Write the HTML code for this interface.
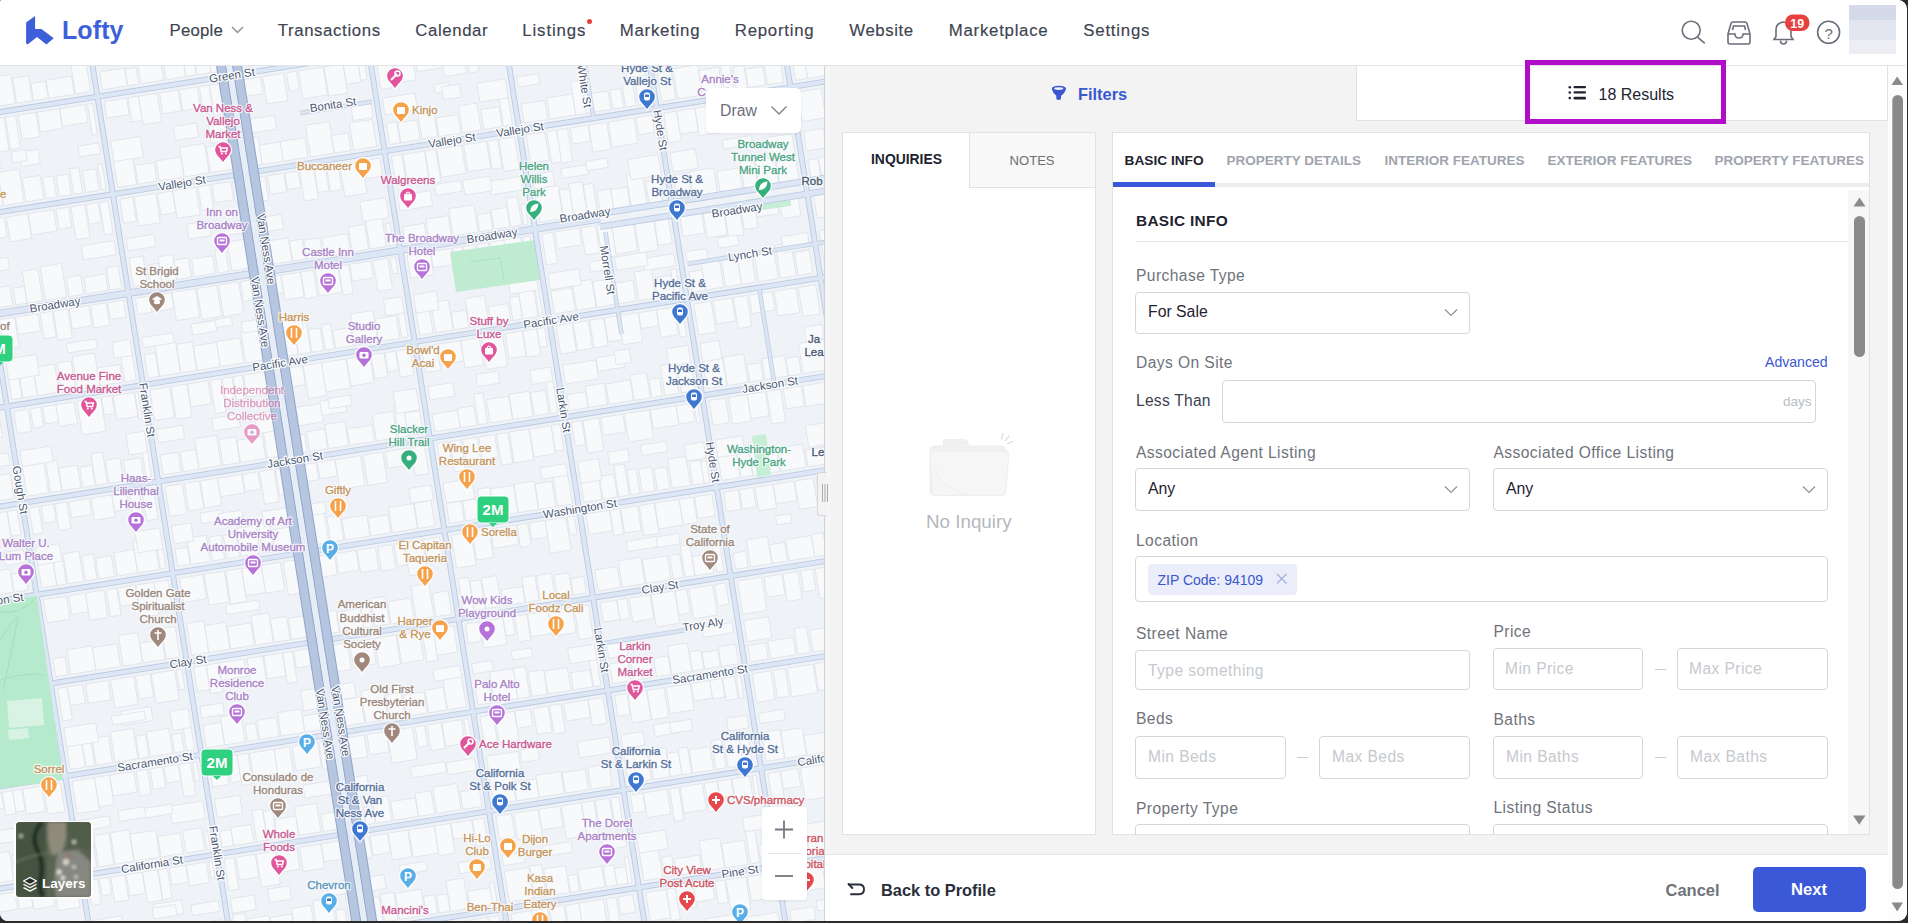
<!DOCTYPE html>
<html><head><meta charset="utf-8"><title>Lofty</title><style>
*{margin:0;padding:0;box-sizing:border-box}
html,body{width:1908px;height:923px;overflow:hidden;background:#fff;font-family:"Liberation Sans",sans-serif}
#frame{position:absolute;left:0;top:0;width:1908px;height:923px;background:#2b2b2b;overflow:hidden}
#win{position:absolute;left:0;top:0;width:1907px;height:921px;background:#fff;overflow:hidden;border-radius:2px 9px 9px 8px}
.abs{position:absolute}
#nav{position:absolute;left:0;top:0;width:1906px;height:66px;background:#fff;border-bottom:1px solid #e3e4e8;z-index:5}
.navi{position:absolute;top:19px;font-size:17.5px;color:#3d4350;white-space:nowrap;line-height:24px;-webkit-text-stroke:0.25px #3d4350}
#map{position:absolute;left:0;top:66px;width:825px;height:854px;overflow:hidden;background:#eef1f6}
#panel{position:absolute;left:825px;top:66px;width:1081px;height:854px;background:#f3f3f3}
.box{position:absolute;background:#fff;border:1px solid #e2e2e2}
.t{position:absolute;white-space:nowrap;line-height:1}
.lbl{position:absolute;white-space:nowrap;font-size:16px;color:#6f737b;line-height:1}
.inp{position:absolute;background:#fff;border:1px solid #d4d6db;border-radius:4px}
.ph{position:absolute;white-space:nowrap;font-size:15.6px;color:#c3c6cc;line-height:1}
.chev{position:absolute;width:9px;height:9px;border-right:1.3px solid #8e929a;border-bottom:1.3px solid #8e929a;transform:rotate(45deg)}
.dash{position:absolute;width:11px;height:1px;background:#c9ccd1}

</style></head><body>
<div id="frame"><div id="win">
<svg class="abs" style="left:0;top:0" width="825" height="923" font-family="Liberation Sans" font-size="11.5"><defs><clipPath id="mc"><rect x="0" y="66" width="825" height="857"/></clipPath></defs><g clip-path="url(#mc)"><rect x="0" y="66" width="825" height="857" fill="#eff2f6"/><g fill="#f8f9fb" stroke="#dde2ea" stroke-width="0.8"><polygon points="-182.7,47.5 -168.4,45.2 -165.5,63.7 -179.8,66.0"/><polygon points="-166.5,44.9 -156.4,43.3 -152.4,68.7 -162.5,70.2"/><polygon points="-155.3,43.1 -145.4,41.6 -141.5,66.4 -151.3,68.0"/><polygon points="-145.3,41.6 -129.1,39.0 -126.4,56.1 -142.6,58.6"/><polygon points="-128.9,39.0 -112.8,36.4 -108.0,66.9 -124.0,69.5"/><polygon points="-112.5,36.4 -99.8,34.4 -95.6,61.3 -108.2,63.3"/><polygon points="-97.0,33.9 -78.4,31.0 -74.8,53.9 -93.4,56.8"/><polygon points="-75.6,30.6 -65.9,29.0 -61.0,60.1 -70.6,61.6"/><polygon points="-65.0,28.9 -59.0,27.9 -56.1,45.8 -62.2,46.8"/><polygon points="-172.3,113.7 -149.7,110.1 -146.7,129.1 -169.3,132.7"/><polygon points="-148.5,106.4 -128.9,103.3 -125.3,125.8 -144.9,128.9"/><polygon points="-126.4,108.6 -116.4,107.1 -113.7,123.9 -123.7,125.5"/><polygon points="-116.8,100.4 -96.5,97.2 -92.8,120.6 -113.1,123.8"/><polygon points="-95.7,96.6 -76.9,93.7 -73.2,117.5 -91.9,120.5"/><polygon points="-76.7,89.2 -54.5,85.6 -50.1,113.9 -72.3,117.4"/><polygon points="-53.3,88.6 -49.5,88.0 -45.5,113.2 -49.3,113.8"/><polygon points="-176.5,87.0 -154.1,83.5 -151.2,102.0 -173.5,105.5"/><polygon points="-77.1,71.3 -52.7,67.4 -50.9,78.7 -75.3,82.6"/><polygon points="-167.4,144.6 -142.8,140.7 -139.1,164.0 -163.7,167.9"/><polygon points="-140.0,140.2 -129.8,138.6 -125.7,164.3 -135.9,166.0"/><polygon points="-127.4,138.2 -104.8,134.7 -101.4,156.5 -124.0,160.1"/><polygon points="-103.8,134.5 -86.5,131.8 -81.8,161.8 -99.0,164.5"/><polygon points="-86.3,131.8 -75.9,130.1 -72.6,150.7 -83.1,152.4"/><polygon points="-73.8,129.8 -63.8,128.2 -59.3,157.0 -69.3,158.6"/><polygon points="-62.9,128.1 -44.3,125.1 -39.9,153.0 -58.5,156.0"/><polygon points="-158.8,198.7 -137.9,195.4 -132.9,227.0 -153.8,230.3"/><polygon points="-135.4,204.7 -110.7,200.8 -107.2,222.9 -131.9,226.8"/><polygon points="-108.5,202.9 -91.3,200.2 -88.2,219.9 -105.4,222.6"/><polygon points="-91.0,196.9 -69.7,193.5 -66.1,216.4 -87.4,219.8"/><polygon points="-66.3,197.2 -49.1,194.5 -46.1,213.3 -63.4,216.0"/><polygon points="-47.8,194.8 -34.3,192.7 -31.4,210.9 -44.9,213.1"/><polygon points="-161.1,184.1 -132.2,179.5 -129.6,195.9 -158.5,200.5"/><polygon points="-61.2,168.3 -37.4,164.5 -34.5,182.5 -58.3,186.2"/><polygon points="-152.0,242.1 -140.1,240.3 -137.0,260.2 -148.8,262.1"/><polygon points="-139.4,240.1 -122.4,237.5 -118.2,263.7 -135.3,266.4"/><polygon points="-121.6,237.3 -112.7,235.9 -109.0,259.2 -117.9,260.6"/><polygon points="-111.6,235.7 -93.2,232.8 -88.0,265.6 -106.4,268.5"/><polygon points="-91.1,232.5 -73.6,229.7 -69.3,256.5 -86.9,259.3"/><polygon points="-71.6,229.4 -61.8,227.9 -56.7,259.7 -66.5,261.2"/><polygon points="-59.5,227.5 -35.9,223.8 -31.1,253.8 -54.7,257.5"/><polygon points="-34.7,223.6 -28.2,222.6 -25.4,240.2 -31.9,241.2"/><polygon points="-140.9,312.3 -130.9,310.7 -128.3,327.7 -138.2,329.3"/><polygon points="-131.1,305.8 -119.5,303.9 -116.0,325.8 -127.6,327.6"/><polygon points="-118.8,307.3 -109.9,305.9 -107.0,324.4 -115.9,325.8"/><polygon points="-109.2,308.1 -94.2,305.7 -91.7,322.0 -106.7,324.3"/><polygon points="-92.0,303.1 -72.8,300.1 -69.9,318.5 -89.1,321.5"/><polygon points="-72.7,296.1 -57.9,293.8 -54.4,316.1 -69.1,318.4"/><polygon points="-59.3,282.5 -36.2,278.9 -30.9,312.3 -54.0,316.0"/><polygon points="-32.3,294.8 -17.2,292.4 -14.4,309.7 -29.5,312.1"/><polygon points="-145.7,281.6 -123.8,278.2 -121.6,292.1 -143.5,295.6"/><polygon points="-40.1,264.9 -22.0,262.1 -20.1,273.9 -38.2,276.7"/><polygon points="-103.2,273.6 -75.6,269.2 -73.6,282.4 -101.1,286.8"/><polygon points="-106.5,269.9 -79.8,265.7 -77.6,279.5 -104.3,283.7"/><polygon points="-136.3,341.2 -118.7,338.4 -113.7,370.3 -131.3,373.1"/><polygon points="-117.7,338.2 -105.0,336.2 -101.0,361.6 -113.7,363.6"/><polygon points="-103.5,336.0 -84.0,332.9 -79.8,359.6 -99.3,362.7"/><polygon points="-81.6,332.5 -60.0,329.1 -57.0,348.4 -78.6,351.8"/><polygon points="-59.3,329.0 -43.7,326.5 -38.9,356.6 -54.5,359.1"/><polygon points="-43.1,326.4 -25.9,323.7 -21.4,352.5 -38.5,355.2"/><polygon points="-23.0,323.2 -12.6,321.6 -8.7,345.8 -19.2,347.4"/><polygon points="-127.2,399.1 -108.1,396.1 -104.6,418.0 -123.7,421.0"/><polygon points="-105.7,395.6 -84.7,392.3 -81.2,414.3 -102.3,417.6"/><polygon points="-81.1,396.2 -70.9,394.6 -68.1,412.2 -78.3,413.8"/><polygon points="-70.6,387.6 -56.0,385.3 -52.1,409.7 -66.7,412.0"/><polygon points="-51.7,393.4 -32.6,390.4 -30.1,406.2 -49.2,409.2"/><polygon points="-31.7,378.6 -17.0,376.2 -12.7,403.5 -27.4,405.8"/><polygon points="-13.8,380.4 -3.5,378.7 0.1,401.5 -10.2,403.1"/><polygon points="-130.1,380.7 -98.2,375.6 -96.3,387.9 -128.1,392.9"/><polygon points="-25.5,364.1 -6.3,361.1 -3.6,378.5 -22.7,381.5"/><polygon points="-86.7,369.3 -65.0,365.9 -63.1,377.8 -84.8,381.3"/><polygon points="-96.5,367.1 -80.3,364.5 -78.2,377.7 -94.4,380.2"/><polygon points="-121.8,432.9 -99.4,429.3 -96.5,447.7 -118.9,451.3"/><polygon points="-96.9,428.9 -71.6,424.9 -67.3,452.4 -92.6,456.4"/><polygon points="-70.6,424.8 -52.5,421.9 -49.6,440.0 -67.7,442.9"/><polygon points="-52.4,421.9 -27.2,417.9 -22.9,445.3 -48.1,449.3"/><polygon points="-25.7,417.7 -1.1,413.8 2.6,437.3 -21.9,441.2"/><polygon points="-111.5,498.0 -88.8,494.4 -85.7,514.0 -108.4,517.6"/><polygon points="-88.1,493.8 -74.3,491.6 -71.1,511.7 -84.9,513.9"/><polygon points="-73.1,488.2 -59.8,486.1 -56.1,509.3 -69.4,511.4"/><polygon points="-59.2,487.2 -35.1,483.4 -31.6,505.5 -55.8,509.3"/><polygon points="-35.3,473.4 -16.6,470.4 -11.5,502.3 -30.2,505.2"/><polygon points="-14.2,477.4 10.1,473.5 14.0,498.3 -10.3,502.1"/><polygon points="-115.6,472.4 -97.5,469.5 -95.0,485.6 -113.0,488.5"/><polygon points="-9.7,455.6 8.2,452.8 10.1,464.9 -7.8,467.7"/><polygon points="-106.6,529.5 -95.3,527.7 -91.1,554.5 -102.3,556.3"/><polygon points="-94.9,527.6 -85.0,526.0 -80.6,554.0 -90.5,555.6"/><polygon points="-83.4,525.8 -66.5,523.1 -61.8,552.7 -78.8,555.4"/><polygon points="-63.8,522.7 -54.0,521.1 -51.0,540.4 -60.8,541.9"/><polygon points="-53.9,521.1 -43.3,519.5 -39.6,543.3 -50.1,545.0"/><polygon points="-43.3,519.4 -19.4,515.7 -16.7,532.6 -40.6,536.4"/><polygon points="-18.4,515.5 6.8,511.5 11.0,538.1 -14.2,542.1"/><polygon points="7.4,511.4 17.2,509.9 21.1,534.7 11.4,536.3"/><polygon points="-97.1,589.1 -79.7,586.4 -76.5,606.6 -93.9,609.3"/><polygon points="-80.1,574.0 -56.5,570.3 -51.4,602.6 -75.0,606.3"/><polygon points="-51.7,582.7 -27.8,579.0 -24.8,598.4 -48.6,602.2"/><polygon points="-27.0,575.4 -11.2,572.9 -7.6,595.7 -23.4,598.2"/><polygon points="-10.3,572.1 9.8,568.9 13.5,592.3 -6.6,595.5"/><polygon points="11.3,574.2 25.3,572.0 28.1,590.0 14.2,592.2"/><polygon points="-100.3,569.0 -72.4,564.5 -69.1,585.6 -97.0,590.0"/><polygon points="3.5,552.6 23.4,549.4 25.5,562.3 5.5,565.4"/><polygon points="-34.6,551.9 -13.0,548.5 -10.8,562.2 -32.5,565.6"/><polygon points="-39.5,552.4 -22.7,549.8 -21.0,560.4 -37.9,563.1"/><polygon points="-92.1,621.2 -77.5,618.9 -74.4,638.1 -89.0,640.4"/><polygon points="-76.5,618.7 -55.5,615.4 -53.0,631.5 -74.0,634.9"/><polygon points="-53.9,615.1 -37.6,612.6 -35.1,628.7 -51.3,631.3"/><polygon points="-36.6,612.4 -17.3,609.3 -13.3,634.3 -32.7,637.3"/><polygon points="-17.1,609.3 8.4,605.3 13.1,635.1 -12.4,639.1"/><polygon points="11.2,604.8 21.9,603.2 25.1,623.7 14.5,625.4"/><polygon points="22.0,603.1 31.7,601.6 34.9,622.2 25.3,623.7"/><polygon points="-85.0,666.1 -69.0,663.6 -63.9,695.6 -79.9,698.1"/><polygon points="-64.4,676.7 -51.2,674.6 -48.3,693.1 -61.5,695.2"/><polygon points="-50.0,664.4 -31.6,661.5 -27.1,689.7 -45.6,692.7"/><polygon points="-31.3,661.7 -21.4,660.1 -17.0,688.1 -26.8,689.7"/><polygon points="-20.8,655.5 -10.7,653.9 -5.6,686.4 -15.7,687.9"/><polygon points="-6.5,668.8 15.9,665.2 18.6,682.5 -3.7,686.1"/><polygon points="16.2,651.0 26.3,649.4 31.2,680.5 21.2,682.1"/><polygon points="28.5,654.7 39.8,652.9 43.8,678.5 32.5,680.3"/><polygon points="-33.6,645.5 -19.2,643.2 -17.1,656.1 -31.6,658.4"/><polygon points="-78.0,709.9 -52.9,706.0 -49.7,726.4 -74.8,730.4"/><polygon points="-52.3,705.9 -27.8,702.0 -23.5,729.0 -48.1,732.9"/><polygon points="-26.2,701.8 -13.9,699.8 -10.1,723.5 -22.5,725.5"/><polygon points="-11.9,699.5 1.5,697.4 6.3,727.5 -7.1,729.6"/><polygon points="4.5,696.9 14.0,695.4 16.5,711.5 7.0,713.0"/><polygon points="15.5,695.2 40.8,691.2 44.8,716.1 19.4,720.1"/><polygon points="41.5,691.1 45.7,690.4 50.1,717.9 45.9,718.6"/><polygon points="-69.3,765.3 -49.4,762.1 -45.4,787.6 -65.3,790.8"/><polygon points="-46.1,765.9 -20.9,762.0 -17.5,783.2 -42.7,787.2"/><polygon points="-20.0,763.8 -7.2,761.8 -4.2,781.1 -16.9,783.1"/><polygon points="-4.4,762.4 16.7,759.1 19.6,777.4 -1.6,780.7"/><polygon points="17.7,746.2 43.0,742.2 47.9,772.9 22.5,776.9"/><polygon points="43.0,741.4 53.5,739.8 58.5,771.2 47.9,772.9"/><polygon points="-71.8,749.5 -43.5,745.0 -41.8,755.5 -70.1,760.0"/><polygon points="18.8,735.1 52.0,729.9 54.5,745.8 21.3,751.0"/><polygon points="-33.1,735.5 -10.2,731.9 -8.6,742.2 -31.5,745.8"/><polygon points="-33.7,739.5 -0.6,734.3 1.1,745.2 -32.0,750.5"/><polygon points="-63.4,802.6 -50.4,800.6 -45.2,833.6 -58.2,835.6"/><polygon points="-49.5,800.4 -34.6,798.1 -32.1,813.9 -47.0,816.3"/><polygon points="-33.5,797.9 -16.6,795.2 -12.7,820.0 -29.6,822.6"/><polygon points="-16.0,795.1 1.3,792.4 3.8,808.3 -13.5,811.0"/><polygon points="2.1,792.3 12.5,790.6 16.1,813.5 5.7,815.2"/><polygon points="12.6,790.6 21.9,789.2 25.3,810.4 16.0,811.8"/><polygon points="22.6,789.0 41.3,786.1 45.3,811.3 26.6,814.3"/><polygon points="43.5,785.7 60.4,783.1 64.9,811.6 48.1,814.3"/><polygon points="-53.0,868.7 -37.5,866.3 -34.1,887.9 -49.6,890.3"/><polygon points="-35.7,858.7 -24.3,856.9 -19.8,885.6 -31.2,887.4"/><polygon points="-22.7,854.6 -13.1,853.1 -8.3,883.8 -17.9,885.3"/><polygon points="-10.2,854.5 9.2,851.4 13.8,880.3 -5.6,883.4"/><polygon points="12.2,854.8 23.5,853.0 27.4,878.1 16.2,879.9"/><polygon points="24.2,847.8 47.1,844.2 51.8,874.3 28.9,877.9"/><polygon points="49.3,842.2 68.0,839.3 73.0,870.9 54.3,873.9"/><polygon points="-57.2,842.1 -35.7,838.8 -32.9,856.9 -54.3,860.2"/><polygon points="43.1,826.3 66.6,822.6 68.4,834.0 44.9,837.8"/><polygon points="-6.9,831.6 19.5,827.5 21.5,840.2 -4.9,844.3"/><polygon points="-47.7,902.1 -30.6,899.4 -28.1,915.3 -45.2,918.0"/><polygon points="-28.2,899.1 -6.8,895.7 -2.8,920.4 -24.3,923.8"/><polygon points="-5.2,895.4 14.8,892.3 17.5,909.3 -2.5,912.4"/><polygon points="17.0,891.9 30.1,889.9 32.8,907.0 19.7,909.1"/><polygon points="30.9,889.7 52.0,886.4 55.1,905.8 34.0,909.2"/><polygon points="54.2,886.0 76.1,882.6 80.0,907.2 58.1,910.6"/><polygon points="-38.6,959.9 -21.6,957.2 -17.2,985.2 -34.1,987.9"/><polygon points="-19.2,957.6 0.0,954.6 4.3,981.8 -14.9,984.8"/><polygon points="1.3,961.4 12.7,959.6 15.9,980.0 4.5,981.7"/><polygon points="14.0,953.7 28.0,951.5 32.1,977.4 18.1,979.6"/><polygon points="28.9,956.8 38.8,955.2 42.1,975.8 32.2,977.4"/><polygon points="39.7,947.7 60.2,944.4 64.6,972.3 44.1,975.5"/><polygon points="61.6,948.1 79.2,945.3 83.0,969.4 65.4,972.1"/><polygon points="79.4,937.4 84.6,936.6 89.6,968.3 84.4,969.1"/><polygon points="-41.4,941.7 -8.9,936.5 -5.5,958.0 -38.0,963.1"/><polygon points="51.6,927.0 82.3,922.1 84.7,937.4 54.0,942.3"/><polygon points="26.7,928.9 48.1,925.5 50.3,939.7 28.9,943.1"/><polygon points="-32.3,999.7 -22.1,998.1 -19.4,1015.5 -29.5,1017.1"/><polygon points="-19.9,997.8 -6.6,995.7 -3.1,1017.9 -16.4,1020.0"/><polygon points="-4.8,995.4 14.7,992.3 17.9,1013.1 -1.6,1016.2"/><polygon points="15.0,992.2 30.0,989.9 33.9,1014.5 18.9,1016.9"/><polygon points="32.6,989.5 48.1,987.0 51.1,1005.6 35.6,1008.1"/><polygon points="50.9,986.6 71.3,983.4 74.9,1006.4 54.6,1009.6"/><polygon points="73.4,983.0 89.3,980.5 92.9,1003.0 77.0,1005.5"/><polygon points="-22.1,1063.8 -7.7,1061.6 -4.3,1083.1 -18.7,1085.4"/><polygon points="-8.4,1050.5 7.2,1048.0 12.3,1080.5 -3.3,1083.0"/><polygon points="8.3,1051.5 17.4,1050.0 22.0,1079.0 12.9,1080.4"/><polygon points="19.1,1056.1 29.1,1054.6 32.7,1077.3 22.7,1078.9"/><polygon points="30.2,1044.6 40.4,1043.0 45.5,1075.3 35.3,1076.9"/><polygon points="44.4,1054.1 67.6,1050.5 70.9,1071.3 47.7,1074.9"/><polygon points="66.8,1044.1 86.8,1041.0 91.1,1068.1 71.1,1071.2"/><polygon points="87.8,1044.4 101.3,1042.3 105.0,1065.9 91.5,1068.0"/><polygon points="-26.0,1039.2 4.2,1034.5 7.2,1053.5 -23.0,1058.3"/><polygon points="67.9,1024.4 97.7,1019.7 99.4,1029.9 69.5,1034.6"/><polygon points="23.3,1025.1 51.5,1020.6 53.5,1033.5 25.3,1037.9"/><polygon points="19.8,1028.6 48.7,1024.1 50.2,1033.8 21.3,1038.4"/><polygon points="-47.1,26.1 -37.4,24.5 -32.3,56.8 -42.0,58.3"/><polygon points="-37.0,24.5 -20.2,21.8 -16.7,43.7 -33.6,46.4"/><polygon points="-19.3,21.7 2.0,18.3 7.2,51.5 -14.1,54.8"/><polygon points="2.8,18.2 22.7,15.0 26.0,36.2 6.1,39.3"/><polygon points="24.3,14.8 39.8,12.3 42.8,31.1 27.3,33.6"/><polygon points="40.3,12.2 52.7,10.3 57.7,42.2 45.3,44.2"/><polygon points="54.2,10.1 66.7,8.1 71.8,40.0 59.2,42.0"/><polygon points="69.7,7.6 77.1,6.4 80.0,24.7 72.6,25.9"/><polygon points="-37.1,89.4 -26.7,87.8 -23.2,109.6 -33.6,111.3"/><polygon points="-26.2,89.2 -13.3,87.2 -10.0,107.6 -23.0,109.6"/><polygon points="-13.0,78.2 10.8,74.4 15.4,103.5 -8.4,107.3"/><polygon points="12.7,78.2 28.5,75.7 32.5,100.8 16.6,103.3"/><polygon points="30.9,83.7 45.5,81.4 48.2,98.4 33.6,100.7"/><polygon points="46.1,80.2 71.3,76.2 74.1,94.3 49.0,98.2"/><polygon points="70.7,62.9 85.7,60.5 90.6,91.6 75.6,94.0"/><polygon points="-40.9,65.6 -19.2,62.1 -17.1,75.2 -38.8,78.7"/><polygon points="50.5,51.1 83.4,45.9 85.8,61.1 52.9,66.3"/><polygon points="-31.8,123.1 -20.7,121.4 -17.0,144.8 -28.1,146.5"/><polygon points="-18.5,121.0 3.9,117.5 9.1,150.5 -13.3,154.1"/><polygon points="5.4,117.3 15.5,115.7 20.6,148.0 10.5,149.6"/><polygon points="18.2,115.2 36.0,112.4 39.8,136.6 22.1,139.4"/><polygon points="37.3,112.2 59.4,108.7 62.5,128.5 40.4,132.0"/><polygon points="59.8,108.7 85.0,104.7 87.8,122.4 62.6,126.4"/><polygon points="87.5,104.3 92.5,103.5 97.4,134.4 92.3,135.1"/><polygon points="-22.9,179.2 -12.6,177.6 -7.9,207.2 -18.2,208.8"/><polygon points="-12.0,181.3 -1.0,179.5 3.1,205.5 -7.9,207.2"/><polygon points="-2.0,172.5 18.9,169.2 24.1,202.2 3.2,205.5"/><polygon points="22.2,178.3 40.0,175.5 43.7,199.1 26.0,201.9"/><polygon points="42.6,177.6 53.2,175.9 56.5,197.0 46.0,198.7"/><polygon points="56.1,176.1 68.2,174.2 71.5,194.7 59.3,196.6"/><polygon points="69.8,168.9 78.7,167.5 82.7,192.9 73.8,194.3"/><polygon points="82.3,171.0 95.8,168.9 99.2,190.3 85.7,192.4"/><polygon points="97.7,164.7 102.1,164.1 106.0,189.2 101.7,189.9"/><polygon points="-25.5,162.6 -1.2,158.8 0.4,169.0 -23.9,172.9"/><polygon points="77.9,146.3 98.7,143.0 100.4,153.5 79.5,156.8"/><polygon points="19.2,152.3 38.1,149.4 40.3,163.5 21.5,166.5"/><polygon points="11.1,152.0 25.4,149.7 27.1,160.4 12.8,162.7"/><polygon points="-16.3,220.7 4.0,217.5 7.1,236.8 -13.3,240.0"/><polygon points="6.4,217.1 27.7,213.7 31.6,238.5 10.3,241.9"/><polygon points="28.3,213.6 53.4,209.7 56.8,231.0 31.6,235.0"/><polygon points="55.9,209.3 68.6,207.3 71.8,227.0 59.0,229.0"/><polygon points="70.9,206.9 84.7,204.7 89.9,237.5 76.1,239.6"/><polygon points="86.2,204.5 98.2,202.6 101.4,222.4 89.3,224.3"/><polygon points="99.5,202.4 107.9,201.1 113.1,233.7 104.6,235.1"/><polygon points="-5.7,288.3 9.8,285.8 12.9,305.4 -2.6,307.9"/><polygon points="13.2,288.2 24.4,286.5 27.1,303.2 15.8,305.0"/><polygon points="22.2,271.4 37.7,268.9 42.8,300.7 27.3,303.2"/><polygon points="40.1,266.8 61.3,263.4 66.6,296.9 45.4,300.3"/><polygon points="66.3,277.4 80.7,275.1 83.7,294.2 69.3,296.5"/><polygon points="83.9,277.4 105.4,274.0 107.9,290.4 86.5,293.8"/><polygon points="106.4,267.6 118.1,265.8 121.7,288.2 109.9,290.1"/><polygon points="-10.1,260.2 7.7,257.4 9.6,269.3 -8.2,272.1"/><polygon points="81.3,245.8 114.1,240.6 116.4,254.6 83.5,259.8"/><polygon points="-0.7,319.7 14.6,317.3 19.2,346.8 4.0,349.2"/><polygon points="15.5,317.2 37.9,313.6 40.6,331.0 18.2,334.5"/><polygon points="40.0,313.3 52.1,311.4 56.2,336.8 44.0,338.7"/><polygon points="53.5,311.2 67.8,308.9 72.3,337.8 58.0,340.1"/><polygon points="69.2,308.7 88.7,305.6 91.9,325.8 72.4,328.9"/><polygon points="90.5,305.3 106.2,302.8 109.8,325.3 94.1,327.8"/><polygon points="107.6,302.6 123.5,300.1 126.2,317.0 110.3,319.5"/><polygon points="7.7,373.0 17.7,371.4 21.9,398.0 11.9,399.6"/><polygon points="17.8,365.1 32.3,362.8 37.4,395.5 22.9,397.8"/><polygon points="33.1,367.5 54.6,364.1 59.0,392.1 37.6,395.5"/><polygon points="57.2,363.1 71.1,360.9 75.6,389.5 61.7,391.7"/><polygon points="72.2,356.6 94.7,353.1 99.8,385.7 77.4,389.2"/><polygon points="97.2,368.0 120.0,364.4 122.8,382.1 100.0,385.7"/><polygon points="120.2,352.1 131.5,350.3 136.2,380.0 124.9,381.7"/><polygon points="5.5,359.2 36.2,354.4 39.5,375.1 8.8,379.9"/><polygon points="111.9,342.4 129.8,339.6 132.3,355.4 114.4,358.2"/><polygon points="66.3,343.5 95.7,338.9 97.2,348.3 67.8,353.0"/><polygon points="13.8,411.4 28.0,409.2 31.6,431.4 17.3,433.7"/><polygon points="30.4,408.8 40.6,407.2 43.6,426.5 33.4,428.1"/><polygon points="42.8,406.9 55.9,404.8 58.5,421.7 45.5,423.8"/><polygon points="56.0,404.8 74.1,401.9 77.5,423.5 59.4,426.4"/><polygon points="77.0,401.4 100.7,397.7 106.0,431.1 82.3,434.8"/><polygon points="101.5,397.6 111.8,395.9 114.6,413.5 104.3,415.1"/><polygon points="113.3,395.7 134.1,392.4 137.9,416.2 117.1,419.5"/><polygon points="134.8,392.3 138.0,391.8 142.3,418.6 139.1,419.1"/><polygon points="22.3,465.3 43.7,461.9 48.6,492.8 27.2,496.2"/><polygon points="45.7,461.7 56.7,460.0 61.5,490.7 50.6,492.5"/><polygon points="58.8,468.2 77.3,465.3 80.8,487.7 62.4,490.6"/><polygon points="79.8,467.2 92.0,465.2 95.2,485.4 83.0,487.4"/><polygon points="91.0,453.8 102.4,452.0 107.4,483.5 95.9,485.3"/><polygon points="105.5,460.4 119.9,458.1 123.5,481.0 109.1,483.2"/><polygon points="123.3,460.6 140.7,457.8 143.8,477.7 126.4,480.5"/><polygon points="141.0,443.9 146.1,443.1 151.4,476.5 146.2,477.4"/><polygon points="20.0,450.9 50.8,446.1 53.2,461.6 22.5,466.5"/><polygon points="125.9,434.2 144.3,431.3 147.6,452.0 129.1,454.9"/><polygon points="29.0,508.0 38.8,506.5 43.0,533.0 33.2,534.5"/><polygon points="41.2,506.1 53.4,504.2 56.1,521.3 43.9,523.2"/><polygon points="54.9,503.9 66.8,502.1 71.0,528.6 59.1,530.5"/><polygon points="69.1,501.7 89.1,498.5 91.6,514.4 71.6,517.6"/><polygon points="91.0,498.2 111.8,494.9 115.3,517.0 94.5,520.3"/><polygon points="111.9,494.9 126.5,492.6 129.2,509.2 114.6,511.5"/><polygon points="129.5,492.2 139.0,490.6 143.6,519.5 134.1,521.0"/><polygon points="141.7,490.2 153.3,488.4 158.1,518.8 146.5,520.6"/><polygon points="37.4,561.0 52.6,558.6 56.8,585.5 41.7,587.9"/><polygon points="53.1,560.8 62.6,559.4 66.4,584.0 57.0,585.5"/><polygon points="63.1,553.8 78.9,551.3 83.6,581.3 67.9,583.7"/><polygon points="81.6,555.6 93.1,553.8 97.1,579.1 85.6,580.9"/><polygon points="95.8,558.2 111.3,555.7 114.6,576.4 99.0,578.8"/><polygon points="113.8,552.7 133.9,549.5 137.6,572.7 117.5,575.9"/><polygon points="132.8,541.2 154.2,537.8 159.2,569.3 137.8,572.7"/><polygon points="155.7,539.7 161.3,538.8 165.9,568.3 160.4,569.1"/><polygon points="35.3,547.5 59.2,543.7 62.0,561.3 38.1,565.1"/><polygon points="134.9,531.8 159.5,527.9 162.9,548.9 138.2,552.8"/><polygon points="43.5,599.7 66.2,596.2 69.8,619.2 47.2,622.8"/><polygon points="68.8,595.7 85.4,593.1 88.4,611.8 71.8,614.4"/><polygon points="85.5,593.1 103.6,590.2 107.9,617.4 89.8,620.3"/><polygon points="106.3,589.8 116.7,588.2 121.0,615.0 110.6,616.7"/><polygon points="117.8,588.0 135.2,585.3 138.1,603.7 120.7,606.4"/><polygon points="136.0,585.1 153.7,582.3 158.8,614.6 141.1,617.4"/><polygon points="154.0,582.3 167.8,580.1 172.5,610.2 158.7,612.4"/><polygon points="52.8,658.6 65.0,656.7 67.9,674.7 55.7,676.7"/><polygon points="66.8,649.9 92.1,645.9 96.0,670.3 70.7,674.3"/><polygon points="92.5,647.6 117.0,643.7 120.6,666.4 96.1,670.3"/><polygon points="118.4,635.5 137.7,632.5 142.5,662.9 123.2,666.0"/><polygon points="139.9,643.1 162.0,639.6 165.1,659.4 143.0,662.9"/><polygon points="161.5,628.6 175.1,626.5 179.9,657.0 166.3,659.2"/><polygon points="57.6,688.5 67.2,687.0 72.3,719.5 62.7,721.0"/><polygon points="67.6,686.9 82.5,684.6 85.5,703.0 70.5,705.4"/><polygon points="85.4,684.1 108.0,680.5 111.0,699.8 88.5,703.3"/><polygon points="110.6,680.1 133.7,676.5 138.0,704.3 115.0,707.9"/><polygon points="135.6,676.2 150.0,673.9 153.6,696.7 139.2,698.9"/><polygon points="151.3,673.7 174.5,670.0 179.2,699.7 156.0,703.3"/><polygon points="176.4,669.7 181.8,668.9 185.0,689.1 179.6,690.0"/><polygon points="66.4,744.6 81.5,742.2 85.4,767.0 70.3,769.4"/><polygon points="80.7,733.6 89.6,732.1 94.9,765.5 85.9,766.9"/><polygon points="92.0,738.5 108.4,735.9 112.6,762.7 96.3,765.3"/><polygon points="110.3,732.1 133.2,728.4 138.0,758.7 115.1,762.3"/><polygon points="135.7,736.3 145.7,734.7 149.2,756.9 139.2,758.5"/><polygon points="146.4,731.9 168.7,728.4 172.7,753.2 150.3,756.7"/><polygon points="171.7,734.8 181.3,733.2 184.2,751.4 174.6,752.9"/><polygon points="182.4,722.3 190.1,721.1 194.6,749.7 186.9,750.9"/><polygon points="63.8,728.0 95.7,723.0 98.7,741.8 66.8,746.8"/><polygon points="169.9,711.3 188.1,708.4 191.1,727.6 172.9,730.4"/><polygon points="120.6,711.4 150.9,706.6 153.0,720.4 122.8,725.2"/><polygon points="111.3,716.3 144.5,711.1 145.8,719.5 112.7,724.8"/><polygon points="72.2,781.2 94.3,777.7 99.5,810.1 77.3,813.6"/><polygon points="94.5,777.7 109.3,775.3 113.9,804.6 99.2,806.9"/><polygon points="109.8,775.3 133.7,771.5 137.0,792.2 113.1,796.0"/><polygon points="136.1,771.1 147.4,769.3 151.4,794.1 140.1,795.8"/><polygon points="150.2,768.9 162.6,766.9 165.8,787.4 153.4,789.4"/><polygon points="164.1,766.7 178.3,764.4 180.9,780.9 166.7,783.2"/><polygon points="178.8,764.4 190.4,762.5 195.6,795.0 184.0,796.8"/><polygon points="192.5,762.2 196.5,761.6 199.4,780.4 195.4,781.0"/><polygon points="82.1,843.6 92.9,841.9 96.9,867.2 86.1,868.9"/><polygon points="93.8,835.5 108.8,833.2 113.7,864.5 98.8,866.9"/><polygon points="110.4,832.7 129.0,829.8 134.0,861.3 115.3,864.2"/><polygon points="130.0,834.2 155.6,830.2 159.8,857.2 134.3,861.2"/><polygon points="157.8,836.5 180.1,833.0 183.3,853.5 161.0,857.0"/><polygon points="182.7,830.8 201.3,827.9 204.8,850.1 186.2,853.0"/><polygon points="204.1,830.8 207.3,830.3 210.3,849.2 207.1,849.7"/><polygon points="78.5,820.7 109.2,815.9 110.8,826.3 80.1,831.2"/><polygon points="169.4,806.3 202.7,801.1 205.5,818.5 172.1,823.8"/><polygon points="142.8,808.6 171.4,804.1 172.9,813.6 144.3,818.1"/><polygon points="117.9,810.8 144.3,806.7 145.9,817.2 119.5,821.3"/><polygon points="87.9,880.7 97.6,879.2 101.5,903.7 91.8,905.2"/><polygon points="99.4,878.9 109.1,877.4 111.7,894.1 102.1,895.7"/><polygon points="110.8,877.1 124.8,874.9 128.7,900.0 114.7,902.2"/><polygon points="126.3,874.7 142.2,872.2 145.5,893.3 129.7,895.8"/><polygon points="142.6,872.1 157.6,869.7 162.4,900.2 147.4,902.6"/><polygon points="158.1,869.6 167.2,868.2 172.0,898.2 162.8,899.7"/><polygon points="169.3,867.9 185.8,865.3 188.4,882.2 172.0,884.8"/><polygon points="186.2,865.2 206.3,862.0 209.5,882.6 189.5,885.8"/><polygon points="208.7,861.6 212.2,861.1 214.8,877.9 211.3,878.4"/><polygon points="97.3,940.1 121.2,936.3 125.4,962.7 101.5,966.4"/><polygon points="123.1,937.4 142.1,934.4 146.1,959.4 127.1,962.4"/><polygon points="145.0,943.3 156.7,941.5 159.2,957.3 147.5,959.2"/><polygon points="156.4,938.2 165.7,936.7 168.7,955.8 159.4,957.3"/><polygon points="166.4,938.1 190.6,934.2 193.4,951.9 169.2,955.7"/><polygon points="192.1,932.3 212.0,929.2 215.1,948.5 195.2,951.6"/><polygon points="212.0,921.1 221.4,919.6 225.7,946.8 216.3,948.3"/><polygon points="94.2,920.2 121.6,915.9 124.0,930.7 96.5,935.0"/><polygon points="190.8,905.0 218.4,900.6 220.1,911.2 192.4,915.6"/><polygon points="153.2,904.4 181.5,899.9 183.6,913.5 155.4,917.9"/><polygon points="152.3,908.2 175.4,904.5 177.1,915.4 154.0,919.1"/><polygon points="103.3,978.3 116.0,976.3 118.8,994.0 106.1,996.0"/><polygon points="116.7,976.2 126.3,974.7 129.7,996.4 120.2,997.9"/><polygon points="128.5,974.3 149.0,971.1 153.9,1001.9 133.4,1005.1"/><polygon points="151.2,970.7 164.5,968.6 168.6,994.3 155.2,996.4"/><polygon points="165.8,968.4 187.9,964.9 191.9,990.0 169.8,993.5"/><polygon points="188.7,964.8 208.4,961.7 213.6,994.7 193.9,997.8"/><polygon points="209.0,961.6 227.6,958.7 230.1,974.7 211.6,977.7"/><polygon points="112.3,1035.0 125.2,1032.9 129.7,1062.0 116.9,1064.0"/><polygon points="129.1,1039.9 150.5,1036.5 154.0,1058.1 132.5,1061.5"/><polygon points="153.4,1037.7 167.8,1035.4 171.0,1055.5 156.6,1057.7"/><polygon points="169.2,1026.9 188.7,1023.8 193.1,1051.9 173.7,1055.0"/><polygon points="191.3,1027.5 216.6,1023.5 220.4,1047.6 195.1,1051.6"/><polygon points="218.0,1016.2 236.2,1013.3 241.1,1044.4 222.9,1047.2"/><polygon points="109.6,1017.8 136.4,1013.6 139.3,1032.0 112.5,1036.3"/><polygon points="206.2,1002.5 233.8,998.2 235.8,1010.6 208.2,1014.9"/><polygon points="89.0,4.6 100.3,2.8 102.9,19.0 91.6,20.8"/><polygon points="100.6,2.7 125.1,-1.2 128.6,20.8 104.1,24.6"/><polygon points="125.5,-1.2 134.9,-2.7 137.5,13.8 128.2,15.3"/><polygon points="137.0,-3.0 156.5,-6.1 161.0,22.1 141.4,25.2"/><polygon points="158.7,-6.5 168.7,-8.0 172.8,18.3 162.8,19.8"/><polygon points="169.8,-8.2 192.4,-11.8 197.2,18.6 174.6,22.2"/><polygon points="195.0,-12.2 205.0,-13.8 209.9,17.5 199.9,19.0"/><polygon points="99.7,72.1 124.4,68.2 127.2,85.9 102.5,89.8"/><polygon points="125.2,69.4 136.0,67.7 138.6,84.1 127.8,85.8"/><polygon points="136.8,56.6 159.3,53.0 163.6,80.1 141.1,83.7"/><polygon points="162.8,58.8 182.3,55.7 185.6,76.6 166.1,79.7"/><polygon points="181.2,47.3 191.8,45.7 196.4,74.9 185.9,76.6"/><polygon points="193.3,51.5 207.6,49.2 211.3,72.6 197.0,74.8"/><polygon points="208.0,51.7 220.5,49.8 223.8,70.6 211.3,72.6"/><polygon points="95.2,44.1 118.1,40.5 120.3,54.7 97.5,58.3"/><polygon points="185.3,29.8 216.6,24.9 219.1,40.7 187.8,45.7"/><polygon points="104.3,101.6 126.5,98.1 129.1,114.5 106.9,118.0"/><polygon points="128.0,97.9 138.6,96.2 142.4,120.4 131.8,122.0"/><polygon points="138.7,96.2 157.1,93.3 161.6,121.8 143.2,124.7"/><polygon points="159.5,92.9 178.1,90.0 181.4,110.9 162.8,113.8"/><polygon points="179.4,89.8 197.1,87.0 200.4,107.9 182.7,110.7"/><polygon points="199.3,86.6 209.1,85.1 212.5,107.1 202.8,108.6"/><polygon points="209.4,85.0 225.7,82.5 230.5,112.9 214.2,115.5"/><polygon points="112.7,154.5 131.5,151.5 136.7,184.4 117.9,187.3"/><polygon points="135.3,165.5 153.9,162.6 156.8,181.2 138.2,184.1"/><polygon points="156.1,160.9 180.8,157.0 183.9,176.9 159.3,180.8"/><polygon points="179.7,147.4 204.4,143.5 209.0,172.9 184.4,176.8"/><polygon points="206.4,146.9 232.0,142.9 236.0,168.7 210.5,172.7"/><polygon points="233.6,151.1 236.4,150.7 239.2,168.2 236.3,168.6"/><polygon points="110.6,141.1 140.1,136.5 143.4,156.9 113.8,161.6"/><polygon points="208.2,125.7 231.9,122.0 234.7,139.5 211.0,143.2"/><polygon points="173.2,126.6 196.6,122.9 198.7,136.7 175.4,140.4"/><polygon points="119.8,199.2 132.6,197.2 136.4,221.2 123.5,223.2"/><polygon points="134.1,196.9 155.7,193.5 160.3,222.7 138.8,226.1"/><polygon points="157.6,193.2 172.4,190.9 175.8,212.5 161.0,214.8"/><polygon points="172.8,190.8 195.9,187.2 200.2,214.7 177.2,218.4"/><polygon points="198.1,186.8 209.8,185.0 213.5,208.6 201.8,210.4"/><polygon points="212.1,184.6 230.7,181.7 233.6,199.7 214.9,202.6"/><polygon points="232.1,181.4 241.1,180.0 244.2,200.1 235.2,201.5"/><polygon points="129.1,258.1 143.0,255.9 147.5,284.2 133.5,286.4"/><polygon points="147.0,265.2 158.5,263.4 161.5,282.0 150.0,283.8"/><polygon points="158.2,256.8 172.6,254.5 176.6,279.6 162.2,281.8"/><polygon points="174.0,260.3 188.4,258.0 191.4,277.2 177.0,279.5"/><polygon points="191.6,259.1 212.7,255.8 215.5,273.4 194.3,276.8"/><polygon points="214.7,250.3 225.3,248.7 228.9,271.3 218.3,273.0"/><polygon points="227.3,242.0 249.5,238.5 254.1,267.3 231.8,270.8"/><polygon points="126.0,238.7 153.9,234.3 155.8,246.5 127.9,250.9"/><polygon points="223.4,223.3 247.3,219.5 249.3,231.9 225.3,235.6"/><polygon points="186.7,224.3 208.8,220.8 211.1,235.5 189.1,239.0"/><polygon points="135.4,298.2 149.3,296.0 151.8,312.2 138.0,314.4"/><polygon points="150.0,295.9 171.3,292.5 173.8,308.4 152.5,311.8"/><polygon points="172.0,292.4 195.2,288.8 199.7,317.0 176.5,320.7"/><polygon points="197.0,288.5 216.7,285.4 221.6,316.2 201.9,319.3"/><polygon points="218.7,285.1 238.6,281.9 243.5,313.3 223.7,316.5"/><polygon points="240.5,281.6 256.7,279.1 259.9,298.9 243.6,301.5"/><polygon points="144.3,354.6 155.3,352.9 159.0,376.3 148.0,378.1"/><polygon points="154.8,344.5 175.4,341.2 180.4,373.0 159.8,376.2"/><polygon points="176.6,344.4 192.2,341.9 196.7,370.4 181.1,372.8"/><polygon points="193.4,345.9 216.5,342.3 220.4,366.6 197.2,370.3"/><polygon points="216.5,341.6 239.8,337.9 243.7,363.0 220.4,366.6"/><polygon points="240.7,330.9 264.2,327.2 269.2,358.9 245.7,362.6"/><polygon points="141.6,337.7 172.6,332.8 174.1,342.8 143.2,347.7"/><polygon points="241.2,322.0 263.0,318.6 264.7,329.7 243.0,333.1"/><polygon points="199.2,322.1 231.3,317.0 232.6,325.0 200.5,330.1"/><polygon points="191.1,324.3 215.2,320.5 216.9,331.1 192.8,334.9"/><polygon points="149.9,389.9 169.5,386.8 174.3,417.4 154.7,420.5"/><polygon points="171.1,386.6 186.8,384.1 192.0,416.8 176.2,419.2"/><polygon points="187.5,384.0 207.8,380.8 211.4,403.6 191.1,406.8"/><polygon points="210.1,380.4 221.0,378.7 226.3,412.0 215.4,413.7"/><polygon points="222.1,378.5 231.9,377.0 235.2,397.6 225.4,399.2"/><polygon points="233.1,376.8 242.2,375.3 245.9,398.6 236.8,400.0"/><polygon points="243.5,375.1 264.1,371.9 267.6,394.0 247.0,397.2"/><polygon points="264.9,371.8 271.2,370.8 275.8,399.7 269.5,400.7"/><polygon points="160.2,455.0 177.9,452.2 181.0,471.9 163.3,474.7"/><polygon points="180.3,451.9 195.8,449.5 198.9,469.0 183.4,471.5"/><polygon points="194.5,438.8 216.4,435.3 221.2,465.5 199.2,469.0"/><polygon points="219.0,439.4 235.7,436.8 239.8,462.6 223.1,465.2"/><polygon points="237.0,440.4 262.1,436.4 265.6,458.5 240.5,462.5"/><polygon points="262.7,427.9 279.8,425.2 284.6,455.5 267.5,458.2"/><polygon points="156.1,429.4 182.6,425.3 184.7,438.6 158.2,442.8"/><polygon points="254.1,414.0 277.5,410.3 280.6,430.0 257.2,433.7"/><polygon points="211.3,418.6 238.4,414.3 240.3,426.7 213.3,430.9"/><polygon points="165.2,486.5 182.1,483.8 186.9,514.0 169.9,516.6"/><polygon points="184.5,483.5 199.4,481.1 203.7,508.5 188.8,510.9"/><polygon points="200.3,481.0 217.4,478.3 221.6,505.2 204.6,507.8"/><polygon points="217.6,478.2 241.6,474.4 244.5,493.0 220.6,496.7"/><polygon points="242.5,474.3 257.8,471.9 260.6,489.2 245.2,491.6"/><polygon points="259.5,471.6 273.9,469.3 279.0,501.9 264.7,504.2"/><polygon points="275.4,469.1 286.5,467.4 290.6,493.5 279.6,495.3"/><polygon points="175.1,549.3 187.5,547.3 190.2,564.4 177.8,566.4"/><polygon points="186.9,538.2 206.0,535.2 210.2,561.3 191.0,564.3"/><polygon points="208.9,537.0 220.9,535.1 224.7,559.0 212.7,560.9"/><polygon points="223.4,535.6 235.8,533.7 239.4,556.6 227.0,558.6"/><polygon points="236.6,528.4 255.7,525.3 260.1,553.4 241.0,556.4"/><polygon points="258.0,521.1 268.4,519.4 273.4,551.3 263.0,552.9"/><polygon points="271.7,529.9 291.3,526.8 294.6,547.9 275.0,551.0"/><polygon points="293.4,530.5 296.4,530.0 299.1,547.2 296.1,547.7"/><polygon points="171.4,526.0 191.0,522.9 193.8,540.8 174.2,543.9"/><polygon points="261.9,511.7 292.7,506.9 295.1,521.7 264.2,526.6"/><polygon points="199.8,513.2 222.5,509.7 224.1,520.2 201.5,523.7"/><polygon points="217.9,513.8 242.0,510.0 243.2,517.3 219.1,521.1"/><polygon points="179.6,578.2 202.6,574.6 206.5,598.7 183.5,602.4"/><polygon points="204.3,574.3 224.4,571.2 229.2,601.9 209.2,605.1"/><polygon points="225.5,571.0 241.4,568.5 246.6,601.4 230.7,603.9"/><polygon points="241.6,568.4 261.2,565.3 265.5,592.5 245.9,595.6"/><polygon points="261.3,565.3 280.4,562.3 284.8,590.2 265.7,593.3"/><polygon points="283.2,561.9 297.6,559.6 302.9,592.8 288.4,595.1"/><polygon points="186.8,623.4 203.8,620.7 208.8,652.5 191.8,655.2"/><polygon points="204.7,625.5 225.6,622.2 229.9,649.1 208.9,652.5"/><polygon points="227.4,626.7 250.7,623.0 254.2,645.3 230.9,649.0"/><polygon points="251.0,615.6 268.7,612.8 273.4,642.3 255.6,645.1"/><polygon points="270.3,618.9 286.5,616.3 290.2,639.6 274.0,642.2"/><polygon points="288.5,618.3 309.8,615.0 313.1,636.0 291.8,639.4"/><polygon points="225.6,605.3 258.6,600.1 260.1,609.3 227.1,614.5"/><polygon points="193.7,667.0 206.0,665.1 209.9,689.6 197.5,691.6"/><polygon points="206.3,665.0 218.4,663.1 222.9,691.6 210.8,693.5"/><polygon points="218.8,663.0 244.0,659.1 246.8,676.4 221.6,680.4"/><polygon points="247.0,658.6 262.6,656.1 266.6,681.8 251.1,684.2"/><polygon points="263.8,655.9 282.3,653.0 285.9,675.9 267.4,678.8"/><polygon points="282.6,653.0 292.3,651.4 297.1,681.8 287.4,683.4"/><polygon points="293.7,651.2 315.0,647.8 317.7,664.7 296.4,668.1"/><polygon points="202.9,725.4 220.9,722.5 224.5,745.0 206.4,747.8"/><polygon points="220.5,716.9 240.7,713.7 245.1,741.7 224.9,744.9"/><polygon points="245.1,724.8 255.4,723.2 258.0,739.7 247.7,741.3"/><polygon points="256.9,720.5 276.3,717.4 279.2,736.3 259.9,739.4"/><polygon points="277.5,712.7 301.0,709.0 304.7,732.3 281.2,736.0"/><polygon points="302.5,716.2 325.2,712.6 327.8,728.7 305.0,732.3"/><polygon points="199.9,706.5 222.6,702.9 224.4,714.5 201.7,718.0"/><polygon points="300.5,690.6 321.2,687.4 324.4,707.5 303.7,710.7"/><polygon points="208.3,759.7 224.4,757.2 228.7,784.4 212.6,786.9"/><polygon points="227.2,756.7 237.0,755.2 241.1,781.1 231.3,782.6"/><polygon points="237.1,755.1 248.0,753.4 252.8,783.6 241.9,785.4"/><polygon points="249.7,753.2 274.0,749.3 277.8,773.1 253.5,776.9"/><polygon points="274.1,749.3 289.5,746.9 293.6,773.2 278.2,775.6"/><polygon points="292.2,746.4 317.6,742.4 321.4,766.7 296.1,770.7"/><polygon points="318.8,742.2 329.4,740.6 333.7,767.8 323.1,769.5"/><polygon points="219.6,831.3 231.1,829.5 233.6,845.6 222.2,847.4"/><polygon points="230.8,827.6 251.1,824.4 254.0,842.3 233.6,845.6"/><polygon points="251.9,810.6 262.3,809.0 267.2,840.2 256.9,841.9"/><polygon points="263.1,811.6 272.3,810.1 276.8,838.7 267.6,840.2"/><polygon points="274.5,819.5 295.7,816.1 298.7,835.3 277.5,838.6"/><polygon points="294.4,806.8 316.3,803.3 320.8,831.8 298.9,835.2"/><polygon points="320.6,814.1 340.8,810.9 343.5,828.2 323.3,831.4"/><polygon points="214.6,799.2 239.6,795.3 242.5,813.5 217.4,817.5"/><polygon points="302.9,785.3 335.9,780.0 337.9,792.9 304.9,798.1"/><polygon points="224.0,859.2 233.9,857.7 238.9,889.2 229.0,890.7"/><polygon points="236.0,857.3 255.2,854.3 258.8,877.0 239.6,880.0"/><polygon points="256.2,854.1 275.1,851.1 280.3,884.0 261.4,887.0"/><polygon points="277.6,850.8 296.7,847.7 300.1,869.2 281.0,872.2"/><polygon points="299.5,847.3 320.7,844.0 324.5,868.1 303.4,871.4"/><polygon points="321.1,843.9 345.4,840.0 348.2,857.9 324.0,861.8"/><polygon points="232.8,914.9 244.5,913.0 249.2,943.1 237.6,944.9"/><polygon points="246.9,919.0 268.8,915.5 272.6,939.4 250.6,942.9"/><polygon points="270.0,917.5 291.5,914.1 295.0,935.9 273.4,939.3"/><polygon points="291.5,908.4 310.8,905.3 315.1,932.7 295.8,935.7"/><polygon points="312.6,901.0 331.5,898.0 336.5,929.3 317.5,932.3"/><polygon points="335.7,910.5 344.8,909.0 347.8,927.5 338.6,929.0"/><polygon points="345.0,894.0 353.7,892.6 358.9,925.8 350.2,927.1"/><polygon points="230.3,898.7 254.0,895.0 256.3,909.4 232.6,913.2"/><polygon points="326.7,883.5 351.6,879.6 353.6,892.2 328.7,896.1"/><polygon points="267.6,889.2 289.4,885.8 291.5,899.1 269.7,902.6"/><polygon points="239.5,956.8 263.2,953.0 265.9,969.6 242.1,973.3"/><polygon points="265.7,952.6 288.2,949.1 293.2,980.3 270.6,983.9"/><polygon points="289.9,948.8 303.4,946.7 308.3,977.6 294.8,979.7"/><polygon points="305.8,946.3 326.2,943.1 331.3,975.1 310.9,978.3"/><polygon points="327.2,942.9 337.5,941.3 341.6,966.9 331.3,968.6"/><polygon points="339.9,940.9 352.2,939.0 356.8,968.1 344.5,970.1"/><polygon points="354.9,938.5 360.8,937.6 365.0,964.2 359.1,965.1"/><polygon points="249.9,1023.0 266.6,1020.4 269.7,1039.9 253.0,1042.5"/><polygon points="265.7,1009.9 287.2,1006.5 292.0,1036.3 270.5,1039.7"/><polygon points="288.6,1006.0 298.9,1004.3 303.7,1034.5 293.3,1036.1"/><polygon points="301.8,1008.0 314.6,1006.0 318.8,1032.1 306.0,1034.1"/><polygon points="317.5,1006.6 341.2,1002.8 345.2,1027.9 321.4,1031.7"/><polygon points="343.6,1008.5 362.3,1005.6 365.4,1024.7 346.6,1027.7"/><polygon points="361.5,996.4 369.9,995.1 374.3,1023.3 365.9,1024.6"/><polygon points="245.7,996.3 269.8,992.5 272.5,1009.0 248.3,1012.9"/><polygon points="348.5,980.0 367.0,977.1 368.9,988.8 350.4,991.7"/><polygon points="307.0,982.3 327.8,979.1 329.1,987.4 308.3,990.7"/><polygon points="222.2,-16.5 236.4,-18.7 238.9,-2.4 224.8,-0.1"/><polygon points="237.2,-18.9 256.3,-21.9 259.0,-4.4 240.0,-1.4"/><polygon points="256.9,-22.0 280.4,-25.7 284.5,0.2 261.0,3.9"/><polygon points="282.1,-26.0 294.6,-27.9 299.7,4.3 287.2,6.3"/><polygon points="295.4,-28.1 306.0,-29.7 309.7,-6.0 299.2,-4.3"/><polygon points="307.7,-30.0 326.8,-33.0 329.7,-14.9 310.6,-11.9"/><polygon points="329.3,-33.4 343.9,-35.7 349.2,-2.2 334.6,0.1"/><polygon points="345.0,-35.9 348.9,-36.5 351.5,-20.1 347.6,-19.5"/><polygon points="231.8,44.3 252.5,41.0 256.4,65.5 235.6,68.7"/><polygon points="254.0,33.9 277.9,30.1 282.8,61.3 258.9,65.1"/><polygon points="280.2,32.6 304.6,28.8 309.1,57.1 284.7,61.0"/><polygon points="306.2,37.1 320.4,34.9 323.6,54.8 309.3,57.1"/><polygon points="319.9,30.0 344.3,26.1 348.2,51.0 323.8,54.8"/><polygon points="345.2,28.5 358.8,26.3 362.3,48.7 348.7,50.9"/><polygon points="228.4,23.0 248.9,19.8 251.8,38.2 231.3,41.4"/><polygon points="336.4,6.0 355.1,3.0 358.4,24.0 339.7,27.0"/><polygon points="237.5,80.6 260.5,77.0 263.1,93.6 240.1,97.2"/><polygon points="262.8,76.6 283.6,73.3 287.9,100.6 267.1,103.9"/><polygon points="286.5,72.8 296.3,71.3 299.2,89.7 289.4,91.2"/><polygon points="298.6,70.9 323.2,67.0 327.6,94.9 303.0,98.8"/><polygon points="324.1,66.9 343.0,63.9 347.6,93.2 328.8,96.2"/><polygon points="343.3,63.9 357.6,61.6 360.8,82.0 346.5,84.3"/><polygon points="358.0,61.6 364.2,60.6 367.2,79.4 360.9,80.4"/><polygon points="246.7,138.4 257.9,136.7 262.3,164.5 251.1,166.3"/><polygon points="259.3,145.2 280.3,141.9 283.3,161.2 262.4,164.5"/><polygon points="280.3,141.5 304.8,137.6 307.9,157.3 283.4,161.2"/><polygon points="305.7,125.3 329.1,121.6 334.1,153.2 310.7,156.9"/><polygon points="331.7,135.6 348.1,133.0 350.9,150.5 334.5,153.1"/><polygon points="349.4,123.1 372.4,119.5 376.7,146.4 353.7,150.1"/><polygon points="243.8,120.1 274.5,115.2 276.7,129.1 246.0,134.0"/><polygon points="350.4,103.2 370.4,100.1 373.2,117.4 353.1,120.6"/><polygon points="252.9,178.2 264.8,176.3 268.6,200.1 256.7,202.0"/><polygon points="267.5,175.9 283.7,173.3 286.7,191.7 270.4,194.3"/><polygon points="285.0,173.1 298.0,171.0 300.6,187.3 287.5,189.3"/><polygon points="299.7,170.8 313.6,168.6 318.3,198.7 304.5,200.9"/><polygon points="314.3,168.4 325.1,166.8 328.8,190.7 318.1,192.4"/><polygon points="326.5,166.5 338.0,164.7 341.9,189.6 330.4,191.5"/><polygon points="339.8,164.4 362.0,160.9 367.0,193.2 344.9,196.7"/><polygon points="363.6,160.7 379.6,158.1 382.4,176.1 366.4,178.6"/><polygon points="263.0,241.8 288.2,237.9 291.9,261.3 266.7,265.3"/><polygon points="289.5,241.2 302.4,239.1 305.6,259.2 292.7,261.2"/><polygon points="303.8,240.3 319.6,237.8 322.6,256.5 306.7,259.0"/><polygon points="322.2,237.7 347.5,233.7 350.4,252.1 325.1,256.1"/><polygon points="348.3,227.0 364.7,224.4 368.6,249.2 352.3,251.8"/><polygon points="365.4,219.1 381.7,216.6 386.4,246.4 370.1,249.0"/><polygon points="385.7,223.8 389.9,223.1 393.4,245.3 389.2,246.0"/><polygon points="259.2,217.7 281.3,214.2 283.7,228.9 261.5,232.4"/><polygon points="359.8,201.8 385.9,197.6 389.0,217.5 363.0,221.6"/><polygon points="268.6,277.2 280.8,275.3 283.5,292.5 271.3,294.4"/><polygon points="281.0,275.2 300.1,272.2 304.0,296.8 284.9,299.8"/><polygon points="300.9,272.1 313.3,270.1 317.5,296.8 305.2,298.8"/><polygon points="315.4,269.8 337.9,266.2 342.0,292.4 319.5,296.0"/><polygon points="338.5,266.1 348.5,264.6 353.1,293.4 343.1,295.0"/><polygon points="349.7,264.4 370.7,261.0 373.4,277.8 352.4,281.1"/><polygon points="373.1,260.7 387.6,258.4 392.5,289.1 378.0,291.4"/><polygon points="390.2,258.0 395.3,257.2 397.8,273.2 392.7,274.0"/><polygon points="276.2,325.7 293.1,323.1 298.1,354.4 281.2,357.0"/><polygon points="294.0,323.7 306.1,321.8 310.9,352.3 298.9,354.2"/><polygon points="308.4,329.8 320.1,327.9 323.6,350.3 312.0,352.2"/><polygon points="321.4,325.0 330.4,323.6 334.3,348.6 325.4,350.1"/><polygon points="332.8,330.5 350.4,327.7 353.2,345.7 335.7,348.4"/><polygon points="350.4,314.1 373.0,310.6 377.9,341.8 355.3,345.3"/><polygon points="375.3,319.0 396.1,315.7 399.7,338.3 378.9,341.6"/><polygon points="397.0,306.6 402.9,305.7 407.9,337.0 401.9,338.0"/><polygon points="274.8,316.7 300.7,312.6 303.2,328.3 277.3,332.4"/><polygon points="383.4,299.5 401.5,296.7 404.1,312.9 386.0,315.8"/><polygon points="283.1,368.9 302.4,365.8 305.3,384.6 286.0,387.7"/><polygon points="303.3,365.7 321.5,362.8 326.7,395.6 308.5,398.5"/><polygon points="321.5,362.8 346.0,358.9 350.6,387.9 326.1,391.7"/><polygon points="346.8,358.8 369.7,355.2 374.0,382.3 351.1,386.0"/><polygon points="371.1,355.0 384.0,352.9 387.7,376.6 374.8,378.7"/><polygon points="385.0,352.8 395.5,351.1 398.5,370.1 388.0,371.8"/><polygon points="396.3,351.0 409.8,348.9 413.9,375.1 400.4,377.2"/><polygon points="293.6,435.7 304.4,434.0 307.2,451.9 296.5,453.6"/><polygon points="306.7,431.7 324.7,428.8 327.8,448.7 309.8,451.5"/><polygon points="324.7,424.5 344.8,421.4 348.6,445.4 328.5,448.6"/><polygon points="347.2,429.1 372.0,425.1 374.6,441.3 349.8,445.2"/><polygon points="372.3,414.6 392.8,411.3 397.0,437.7 376.5,441.0"/><polygon points="393.6,404.4 403.1,402.9 408.3,436.0 398.8,437.5"/><polygon points="404.8,413.0 419.5,410.7 423.1,433.6 408.4,435.9"/><polygon points="289.3,408.4 320.4,403.5 323.3,421.8 292.2,426.8"/><polygon points="393.1,392.0 416.0,388.4 419.4,409.9 396.6,413.6"/><polygon points="319.9,401.3 344.5,397.4 346.7,411.5 322.1,415.4"/><polygon points="327.8,398.5 350.4,394.9 352.0,405.1 329.4,408.7"/><polygon points="298.3,465.5 316.1,462.7 318.8,479.7 301.0,482.5"/><polygon points="317.4,462.5 334.8,459.7 337.3,475.9 320.0,478.6"/><polygon points="335.2,459.7 360.4,455.7 365.0,485.3 339.9,489.3"/><polygon points="363.1,455.2 382.7,452.2 387.4,482.3 367.9,485.4"/><polygon points="385.3,451.7 409.0,448.0 411.6,464.4 387.9,468.2"/><polygon points="410.9,447.7 424.3,445.6 428.7,473.4 415.3,475.6"/><polygon points="305.8,513.1 323.8,510.3 328.9,542.5 310.9,545.3"/><polygon points="326.8,517.1 339.9,515.1 343.9,540.1 330.8,542.2"/><polygon points="341.9,519.0 366.7,515.1 370.0,536.0 345.2,539.9"/><polygon points="368.1,517.9 387.9,514.8 390.7,532.7 370.9,535.9"/><polygon points="388.5,507.5 413.5,503.6 417.4,528.5 392.4,532.5"/><polygon points="414.2,503.1 430.9,500.5 434.9,525.8 418.2,528.4"/><polygon points="304.6,505.0 324.4,501.9 326.2,513.2 306.4,516.3"/><polygon points="408.9,488.5 431.3,485.0 433.6,499.7 411.2,503.2"/><polygon points="312.8,557.2 334.1,553.8 337.4,574.7 316.1,578.1"/><polygon points="335.5,553.6 356.0,550.4 359.2,570.1 338.6,573.4"/><polygon points="357.2,550.2 375.3,547.3 378.8,569.6 360.7,572.5"/><polygon points="377.9,546.9 391.9,544.7 395.8,569.0 381.8,571.2"/><polygon points="394.3,544.3 403.8,542.8 407.2,564.6 397.8,566.0"/><polygon points="404.3,542.7 422.4,539.9 427.6,572.9 409.5,575.8"/><polygon points="423.5,539.7 439.5,537.2 442.5,555.9 426.5,558.4"/><polygon points="321.6,612.5 335.9,610.3 339.3,631.9 325.0,634.1"/><polygon points="337.0,612.1 360.6,608.3 363.7,628.0 340.1,631.7"/><polygon points="359.9,602.4 369.1,600.9 373.2,626.5 363.9,628.0"/><polygon points="370.6,598.7 385.3,596.4 389.7,623.9 375.0,626.2"/><polygon points="387.7,601.6 410.6,597.9 414.1,620.0 391.2,623.7"/><polygon points="411.1,586.3 428.7,583.5 434.0,616.9 416.4,619.7"/><polygon points="432.4,593.4 448.0,590.9 451.7,614.1 436.0,616.6"/><polygon points="326.8,646.0 347.1,642.8 351.3,669.5 331.1,672.7"/><polygon points="349.6,642.4 372.3,638.8 376.2,663.8 353.5,667.4"/><polygon points="374.5,638.4 395.8,635.1 400.5,664.4 379.1,667.8"/><polygon points="397.2,634.9 419.3,631.4 423.8,659.8 401.7,663.3"/><polygon points="422.0,630.9 433.0,629.2 438.0,660.5 427.0,662.2"/><polygon points="433.1,629.2 453.5,626.0 457.7,652.2 437.2,655.4"/><polygon points="335.5,700.8 360.6,696.9 364.7,722.8 339.6,726.8"/><polygon points="361.0,691.3 383.0,687.8 388.0,719.2 365.9,722.7"/><polygon points="386.0,695.0 401.3,692.6 405.0,716.5 389.8,718.9"/><polygon points="403.1,695.2 424.1,691.9 427.4,712.9 406.4,716.3"/><polygon points="425.0,690.1 443.2,687.2 446.8,709.9 428.6,712.8"/><polygon points="442.9,678.8 461.4,675.9 466.3,706.8 447.7,709.7"/><polygon points="333.1,685.5 353.8,682.2 356.2,697.4 335.5,700.6"/><polygon points="432.9,669.7 459.8,665.5 461.6,677.1 434.7,681.3"/><polygon points="341.5,738.7 364.2,735.1 367.6,756.7 344.9,760.3"/><polygon points="367.0,734.6 386.1,731.6 389.3,751.7 370.2,754.7"/><polygon points="387.1,731.5 412.3,727.5 417.3,759.1 392.1,763.1"/><polygon points="415.2,727.0 424.5,725.5 427.7,745.9 418.4,747.4"/><polygon points="427.1,725.1 441.1,722.9 445.1,748.3 431.1,750.5"/><polygon points="442.0,722.8 461.3,719.7 465.0,743.3 445.7,746.4"/><polygon points="463.7,719.3 468.2,718.6 471.9,742.1 467.4,742.8"/><polygon points="350.9,798.5 360.5,797.0 364.9,824.8 355.3,826.3"/><polygon points="363.6,807.6 372.6,806.1 375.3,823.2 366.3,824.6"/><polygon points="372.1,798.3 387.9,795.9 391.8,820.6 376.0,823.1"/><polygon points="390.8,801.7 415.2,797.8 418.2,816.4 393.7,820.3"/><polygon points="415.1,793.4 431.1,790.8 434.7,813.8 418.7,816.3"/><polygon points="432.8,787.2 456.8,783.4 460.9,809.6 437.0,813.4"/><polygon points="460.2,791.9 479.3,788.9 482.0,806.3 463.0,809.3"/><polygon points="347.7,778.2 366.7,775.2 368.9,789.4 350.0,792.4"/><polygon points="446.3,762.6 474.4,758.2 476.3,770.1 448.2,774.6"/><polygon points="410.4,767.0 444.8,761.6 446.5,772.5 412.1,777.9"/><polygon points="357.2,838.2 368.7,836.4 372.0,857.3 360.5,859.1"/><polygon points="370.2,836.1 387.6,833.4 390.6,852.5 373.3,855.3"/><polygon points="388.2,833.3 407.6,830.2 411.8,856.7 392.3,859.8"/><polygon points="408.7,830.0 434.2,826.0 438.5,853.1 413.0,857.2"/><polygon points="434.4,826.0 450.2,823.5 454.9,853.3 439.1,855.8"/><polygon points="451.1,823.3 471.6,820.1 474.1,836.0 453.6,839.2"/><polygon points="472.5,820.0 483.9,818.2 488.0,844.4 476.6,846.2"/><polygon points="366.9,899.2 379.1,897.3 382.9,922.0 370.8,923.9"/><polygon points="380.3,894.4 393.6,892.3 397.9,919.6 384.6,921.7"/><polygon points="395.4,893.3 421.0,889.3 425.2,915.3 399.5,919.3"/><polygon points="423.4,896.5 434.4,894.8 437.3,913.4 426.4,915.1"/><polygon points="436.8,895.4 447.5,893.7 450.2,911.3 439.5,913.0"/><polygon points="445.9,880.8 463.6,878.0 468.4,908.5 450.7,911.2"/><polygon points="467.5,891.3 490.0,887.7 492.6,904.6 470.2,908.2"/><polygon points="489.3,883.1 494.0,882.3 497.4,903.9 492.7,904.6"/><polygon points="363.5,877.7 383.9,874.5 386.1,888.5 365.7,891.8"/><polygon points="458.1,862.7 490.1,857.7 491.9,868.7 459.8,873.8"/><polygon points="399.1,865.6 426.0,861.3 427.4,870.6 400.6,874.9"/><polygon points="372.6,935.7 388.2,933.3 392.8,962.7 377.3,965.1"/><polygon points="388.3,933.3 398.1,931.7 401.3,951.8 391.5,953.3"/><polygon points="398.8,931.6 410.3,929.8 414.5,956.0 402.9,957.9"/><polygon points="410.8,929.7 419.8,928.3 424.8,959.5 415.8,960.9"/><polygon points="421.2,928.1 437.1,925.6 440.3,945.8 424.4,948.4"/><polygon points="439.7,925.1 465.1,921.1 467.8,938.1 442.4,942.1"/><polygon points="467.1,920.8 487.3,917.6 491.4,943.8 471.2,947.0"/><polygon points="488.5,917.4 499.3,915.7 503.8,944.2 493.0,945.9"/><polygon points="383.4,1004.1 406.9,1000.4 409.6,1017.7 386.2,1021.5"/><polygon points="407.6,1001.7 422.9,999.3 425.4,1015.3 410.1,1017.7"/><polygon points="424.5,992.6 440.0,990.1 443.5,1012.4 428.0,1014.8"/><polygon points="441.1,990.5 464.6,986.7 468.1,1008.5 444.5,1012.2"/><polygon points="466.3,984.9 491.3,980.9 495.0,1004.3 470.0,1008.2"/><polygon points="494.1,981.1 509.3,978.7 512.9,1001.4 497.7,1003.8"/><polygon points="378.9,975.2 403.5,971.4 405.7,985.3 381.1,989.2"/><polygon points="475.1,960.1 505.6,955.2 507.2,965.4 476.7,970.2"/><polygon points="360.7,-38.4 371.2,-40.0 374.4,-19.4 364.0,-17.8"/><polygon points="373.6,-40.4 384.7,-42.2 388.4,-18.5 377.4,-16.7"/><polygon points="387.1,-42.6 409.6,-46.1 412.5,-27.5 390.1,-23.9"/><polygon points="410.6,-46.3 431.6,-49.6 435.2,-27.1 414.2,-23.8"/><polygon points="434.5,-50.0 446.8,-52.0 452.0,-19.3 439.6,-17.3"/><polygon points="448.3,-52.2 461.0,-54.2 464.8,-30.4 452.1,-28.4"/><polygon points="461.4,-54.3 482.2,-57.6 485.4,-37.1 464.7,-33.9"/><polygon points="370.7,24.5 389.4,21.5 392.9,43.9 374.2,46.8"/><polygon points="390.6,24.2 409.7,21.2 412.8,40.7 393.7,43.8"/><polygon points="411.4,15.4 422.4,13.7 426.3,38.6 415.4,40.3"/><polygon points="423.2,8.8 436.7,6.7 441.3,36.2 427.9,38.4"/><polygon points="438.4,10.2 458.3,7.0 462.4,32.9 442.5,36.1"/><polygon points="460.6,15.4 476.0,13.0 478.8,30.3 463.3,32.8"/><polygon points="475.9,8.7 493.6,5.9 497.0,27.4 479.3,30.2"/><polygon points="367.0,1.1 393.6,-3.1 395.4,8.1 368.7,12.3"/><polygon points="467.3,-14.7 489.7,-18.3 492.2,-2.5 469.8,1.1"/><polygon points="397.8,-6.5 417.1,-9.5 418.8,1.0 399.5,4.0"/><polygon points="376.1,58.7 390.9,56.3 395.8,87.2 380.9,89.5"/><polygon points="392.3,56.1 411.7,53.1 416.0,80.0 396.6,83.1"/><polygon points="414.3,52.7 438.9,48.8 441.9,67.7 417.3,71.6"/><polygon points="440.0,48.6 462.3,45.1 466.7,73.2 444.4,76.7"/><polygon points="465.0,44.6 474.3,43.2 478.8,71.5 469.4,73.0"/><polygon points="475.7,43.0 498.8,39.3 502.5,62.2 479.3,65.9"/><polygon points="386.3,123.4 396.8,121.8 400.1,142.7 389.6,144.4"/><polygon points="397.8,122.9 416.9,119.9 420.0,139.6 400.9,142.6"/><polygon points="417.8,112.7 433.5,110.2 437.7,136.8 422.1,139.3"/><polygon points="436.1,118.0 457.7,114.6 460.6,133.2 439.0,136.6"/><polygon points="458.5,105.8 476.7,103.0 481.0,130.0 462.8,132.8"/><polygon points="480.6,109.7 499.0,106.8 502.1,126.6 483.8,129.5"/><polygon points="498.5,94.1 507.3,92.7 512.4,125.0 503.6,126.4"/><polygon points="382.3,98.2 414.9,93.1 417.5,109.8 384.9,114.9"/><polygon points="476.9,83.3 505.1,78.8 508.1,97.7 479.9,102.2"/><polygon points="433.7,84.7 448.2,82.5 449.5,91.0 435.1,93.3"/><polygon points="441.7,86.8 459.4,84.0 461.4,97.0 443.7,99.7"/><polygon points="391.5,156.3 401.8,154.6 406.3,182.8 395.9,184.4"/><polygon points="403.0,154.4 424.4,151.1 429.2,181.6 407.8,185.0"/><polygon points="425.2,150.9 435.6,149.3 440.8,181.9 430.4,183.6"/><polygon points="436.9,149.1 461.4,145.2 465.9,173.3 441.3,177.2"/><polygon points="463.6,144.9 486.4,141.3 490.7,168.2 467.9,171.8"/><polygon points="487.8,141.0 497.6,139.5 502.0,167.7 492.2,169.3"/><polygon points="498.8,139.3 514.3,136.9 519.4,169.2 503.9,171.6"/><polygon points="402.6,226.9 424.3,223.4 426.9,240.0 405.2,243.4"/><polygon points="425.8,219.2 448.2,215.7 451.4,236.1 429.0,239.7"/><polygon points="448.8,208.7 473.9,204.8 478.2,231.9 453.0,235.9"/><polygon points="477.2,214.8 490.2,212.7 492.9,229.6 479.8,231.7"/><polygon points="490.9,210.0 506.7,207.5 509.8,226.9 494.0,229.4"/><polygon points="506.2,198.4 517.4,196.6 521.9,225.0 510.7,226.8"/><polygon points="520.7,204.6 524.9,203.9 528.0,224.0 523.9,224.7"/><polygon points="397.7,195.8 430.3,190.6 432.7,205.8 400.1,210.9"/><polygon points="488.7,181.4 520.5,176.4 522.6,189.8 490.9,194.8"/><polygon points="434.3,184.6 460.5,180.5 462.2,191.3 436.1,195.5"/><polygon points="462.7,180.3 489.8,176.0 492.1,190.7 465.0,195.0"/><polygon points="407.1,255.3 430.1,251.7 433.7,274.7 410.8,278.3"/><polygon points="430.7,251.6 451.2,248.3 453.7,264.4 433.2,267.6"/><polygon points="452.6,248.1 462.3,246.6 467.3,278.3 457.6,279.8"/><polygon points="463.2,246.4 473.9,244.7 477.3,266.0 466.5,267.7"/><polygon points="476.8,244.3 488.4,242.5 492.1,266.2 480.5,268.0"/><polygon points="490.0,242.2 503.8,240.0 507.9,265.7 494.1,267.9"/><polygon points="503.9,240.0 520.7,237.3 525.9,270.6 509.2,273.2"/><polygon points="522.1,237.1 529.9,235.9 533.3,257.6 525.5,258.8"/><polygon points="415.4,307.9 428.8,305.8 433.1,333.0 419.7,335.1"/><polygon points="431.2,302.9 448.3,300.2 453.0,329.9 435.9,332.6"/><polygon points="451.2,312.3 466.1,310.0 468.9,327.4 453.9,329.7"/><polygon points="465.2,298.5 484.4,295.4 488.9,324.2 469.7,327.3"/><polygon points="488.3,306.7 508.1,303.6 510.8,320.8 491.0,323.9"/><polygon points="509.4,297.6 518.8,296.1 522.4,318.9 513.0,320.4"/><polygon points="517.6,286.0 532.7,283.6 537.9,316.5 522.8,318.9"/><polygon points="535.0,288.3 538.1,287.8 542.5,315.7 539.4,316.2"/><polygon points="413.4,294.8 436.0,291.2 438.9,309.6 416.3,313.2"/><polygon points="508.1,279.8 536.1,275.4 538.4,289.8 510.4,294.2"/><polygon points="421.6,347.0 436.7,344.6 440.7,370.2 425.7,372.6"/><polygon points="437.8,344.4 460.6,340.8 463.8,360.9 440.9,364.5"/><polygon points="460.8,340.8 479.2,337.9 483.4,364.9 465.0,367.8"/><polygon points="481.6,337.5 502.3,334.2 507.4,366.1 486.6,369.4"/><polygon points="505.1,333.8 522.3,331.1 526.2,355.8 509.0,358.5"/><polygon points="522.8,331.0 536.7,328.8 540.8,355.0 526.9,357.2"/><polygon points="536.9,328.8 544.4,327.6 547.3,346.3 539.9,347.5"/><polygon points="432.2,414.3 457.4,410.4 460.2,427.8 435.0,431.7"/><polygon points="457.3,408.5 473.5,406.0 476.6,425.2 460.3,427.7"/><polygon points="473.8,394.1 482.8,392.7 487.6,423.4 478.7,424.8"/><polygon points="486.5,399.7 508.6,396.2 512.3,419.5 490.2,423.0"/><polygon points="509.2,394.4 529.2,391.3 533.1,416.2 513.1,419.4"/><polygon points="530.6,392.4 545.2,390.1 548.9,413.7 534.4,416.0"/><polygon points="545.9,381.5 552.7,380.5 557.8,412.3 550.9,413.4"/><polygon points="427.8,386.5 452.6,382.6 454.7,396.0 430.0,399.9"/><polygon points="529.8,370.4 550.6,367.1 552.8,381.1 532.0,384.4"/><polygon points="475.8,374.6 497.9,371.1 499.8,383.1 477.7,386.6"/><polygon points="436.9,443.6 448.3,441.8 452.0,464.7 440.5,466.5"/><polygon points="450.2,441.5 460.4,439.9 465.2,470.1 454.9,471.7"/><polygon points="462.6,439.5 477.0,437.2 481.4,464.8 466.9,467.0"/><polygon points="478.7,437.0 494.6,434.5 498.2,456.8 482.2,459.3"/><polygon points="496.6,434.2 507.8,432.4 512.7,463.6 501.5,465.3"/><polygon points="509.4,432.1 528.9,429.1 533.8,459.9 514.2,463.0"/><polygon points="529.5,428.9 550.9,425.6 555.3,453.7 534.0,457.0"/><polygon points="551.3,425.5 559.7,424.2 563.7,449.9 555.3,451.2"/><polygon points="446.3,503.4 461.2,501.0 464.4,521.1 449.5,523.4"/><polygon points="462.6,501.0 475.9,498.9 479.0,518.8 465.7,520.9"/><polygon points="477.3,489.2 489.6,487.3 494.2,516.4 481.9,518.3"/><polygon points="490.5,488.9 513.5,485.3 517.8,512.7 494.8,516.3"/><polygon points="513.8,484.2 534.0,481.0 538.5,509.4 518.3,512.6"/><polygon points="535.1,483.9 551.7,481.2 555.7,506.7 539.1,509.3"/><polygon points="552.7,474.4 567.2,472.1 572.3,504.0 557.8,506.3"/><polygon points="443.1,483.1 471.6,478.6 474.8,498.6 446.3,503.1"/><polygon points="540.2,467.8 565.9,463.7 567.7,475.2 542.0,479.2"/><polygon points="451.4,535.3 470.8,532.2 476.0,565.1 456.6,568.2"/><polygon points="472.3,532.0 488.9,529.4 493.3,557.4 476.7,560.0"/><polygon points="490.5,529.1 515.7,525.1 518.7,544.4 493.6,548.3"/><polygon points="517.1,524.9 527.5,523.3 531.1,545.7 520.6,547.4"/><polygon points="529.4,523.0 545.0,520.5 547.7,537.1 532.0,539.6"/><polygon points="545.2,520.5 565.8,517.2 571.0,550.0 550.3,553.3"/><polygon points="567.2,517.0 574.1,515.9 577.0,534.1 570.1,535.2"/><polygon points="458.2,578.8 468.6,577.2 473.9,610.6 463.5,612.2"/><polygon points="469.9,581.7 480.7,580.0 485.3,608.8 474.5,610.5"/><polygon points="481.5,577.9 496.5,575.5 501.4,606.2 486.3,608.6"/><polygon points="501.2,589.9 522.5,586.5 525.0,602.5 503.8,605.9"/><polygon points="521.8,577.5 534.8,575.4 538.7,600.4 525.8,602.4"/><polygon points="536.4,575.6 551.3,573.3 555.1,597.8 540.2,600.1"/><polygon points="554.1,575.2 568.9,572.9 572.4,595.0 557.5,597.4"/><polygon points="570.7,578.5 583.7,576.4 586.3,592.8 573.3,594.9"/><polygon points="465.4,624.1 478.6,622.0 481.6,641.2 468.4,643.3"/><polygon points="479.9,621.8 502.8,618.2 507.0,644.3 484.0,647.9"/><polygon points="503.2,618.1 512.4,616.7 515.2,634.4 506.0,635.9"/><polygon points="514.8,616.3 526.8,614.4 530.8,640.0 518.8,641.9"/><polygon points="527.6,614.2 548.1,611.0 551.6,633.6 531.2,636.8"/><polygon points="548.5,611.0 572.1,607.2 576.1,632.6 552.5,636.3"/><polygon points="574.1,606.9 588.2,604.7 593.3,637.4 579.3,639.6"/><polygon points="475.2,686.4 489.9,684.1 492.8,702.6 478.2,704.9"/><polygon points="489.5,672.3 513.1,668.6 517.8,698.6 494.3,702.4"/><polygon points="513.1,668.3 525.1,666.4 529.9,696.7 517.9,698.6"/><polygon points="528.1,672.2 543.5,669.7 547.4,694.0 531.9,696.4"/><polygon points="544.3,671.1 567.3,667.5 570.9,690.3 547.9,693.9"/><polygon points="570.8,672.7 590.0,669.7 592.7,686.8 573.5,689.8"/><polygon points="588.6,655.0 595.9,653.8 600.9,685.5 593.6,686.7"/><polygon points="471.6,663.6 492.1,660.4 493.7,670.8 473.3,674.0"/><polygon points="567.5,648.4 594.4,644.2 596.9,659.6 570.0,663.9"/><polygon points="511.1,651.1 531.3,647.9 532.7,656.8 512.5,660.0"/><polygon points="480.0,716.8 493.1,714.7 498.1,746.1 485.0,748.2"/><polygon points="494.9,714.4 514.4,711.3 518.9,740.1 499.4,743.1"/><polygon points="514.8,711.3 530.2,708.9 532.8,725.8 517.5,728.2"/><polygon points="533.1,708.4 548.0,706.0 552.1,732.0 537.2,734.4"/><polygon points="549.7,705.8 560.9,704.0 565.4,732.2 554.2,734.0"/><polygon points="563.6,703.6 587.7,699.8 590.5,717.3 566.4,721.1"/><polygon points="588.3,699.7 602.8,697.4 606.9,723.3 592.4,725.6"/><polygon points="489.2,774.5 511.3,771.0 516.1,800.9 493.9,804.4"/><polygon points="513.9,782.5 536.1,779.0 539.0,797.3 516.8,800.8"/><polygon points="535.8,775.4 560.9,771.4 564.3,793.3 539.3,797.3"/><polygon points="562.2,773.0 585.4,769.3 588.6,789.5 565.4,793.1"/><polygon points="587.8,767.3 608.7,764.0 612.1,785.8 591.2,789.1"/><polygon points="486.3,756.3 518.0,751.3 520.8,769.1 489.1,774.1"/><polygon points="577.1,741.9 609.1,736.9 611.6,752.7 579.7,757.8"/><polygon points="519.9,749.7 537.5,746.9 539.5,759.6 521.9,762.4"/><polygon points="495.8,816.3 511.4,813.8 515.1,836.7 499.4,839.1"/><polygon points="513.7,813.4 538.2,809.6 542.4,835.8 517.9,839.7"/><polygon points="538.7,809.5 559.6,806.2 562.8,826.5 541.9,829.8"/><polygon points="561.3,805.9 581.3,802.8 586.5,835.7 566.5,838.9"/><polygon points="581.5,802.7 593.6,800.8 598.7,833.1 586.6,835.0"/><polygon points="595.3,800.6 609.3,798.3 612.8,820.4 598.8,822.6"/><polygon points="610.7,798.1 618.5,796.9 623.0,825.0 615.1,826.2"/><polygon points="504.4,871.3 528.8,867.4 533.7,898.1 509.3,902.0"/><polygon points="529.6,866.2 541.4,864.4 546.4,896.1 534.6,898.0"/><polygon points="543.8,868.9 565.4,865.5 569.7,892.5 548.1,895.9"/><polygon points="567.8,875.7 577.0,874.2 579.6,890.9 570.4,892.3"/><polygon points="577.7,869.8 601.5,866.1 604.8,886.9 580.9,890.7"/><polygon points="603.1,866.6 613.7,864.9 616.9,885.0 606.3,886.7"/><polygon points="614.4,868.3 625.5,866.6 628.1,883.2 617.0,885.0"/><polygon points="624.2,857.2 628.0,856.6 632.1,882.6 628.3,883.2"/><polygon points="502.0,855.8 524.1,852.3 525.6,862.2 503.6,865.7"/><polygon points="601.9,840.0 624.8,836.4 626.4,846.5 603.5,850.1"/><polygon points="542.4,846.1 571.0,841.6 572.7,852.1 544.1,856.7"/><polygon points="511.2,913.8 531.5,910.6 534.9,932.5 514.6,935.7"/><polygon points="531.6,910.6 547.5,908.1 550.1,924.7 534.3,927.2"/><polygon points="549.3,907.8 563.8,905.5 567.7,930.1 553.2,932.4"/><polygon points="565.6,905.2 578.8,903.2 582.6,927.2 569.4,929.3"/><polygon points="578.9,903.2 603.3,899.3 607.4,925.1 582.9,929.0"/><polygon points="606.2,898.8 616.0,897.3 620.3,924.0 610.4,925.6"/><polygon points="618.2,896.9 632.6,894.7 635.4,912.1 620.9,914.4"/><polygon points="520.1,970.1 531.3,968.3 536.0,997.8 524.7,999.6"/><polygon points="532.6,974.4 555.1,970.8 558.8,994.2 536.3,997.7"/><polygon points="556.4,968.2 575.1,965.3 579.2,991.0 560.4,993.9"/><polygon points="577.7,969.0 596.7,966.0 600.1,987.6 581.1,990.6"/><polygon points="597.8,958.8 611.0,956.8 615.5,985.2 602.3,987.3"/><polygon points="614.4,963.6 636.4,960.1 639.7,981.4 617.8,984.9"/><polygon points="638.2,957.2 643.7,956.3 647.5,980.2 642.0,981.0"/><polygon points="517.4,953.4 550.1,948.2 552.6,964.3 520.0,969.4"/><polygon points="614.9,938.0 640.2,934.0 641.8,943.9 616.5,947.9"/><polygon points="550.5,943.6 576.7,939.4 579.0,953.9 552.8,958.1"/><polygon points="495.4,-59.7 520.0,-63.5 524.2,-36.6 499.6,-32.7"/><polygon points="520.3,-63.6 538.4,-66.4 541.4,-47.0 523.4,-44.2"/><polygon points="540.7,-66.8 553.9,-68.9 558.1,-42.3 544.9,-40.2"/><polygon points="556.1,-69.2 580.1,-73.0 585.1,-41.8 561.0,-38.0"/><polygon points="582.7,-73.4 604.6,-76.9 608.6,-51.7 586.6,-48.2"/><polygon points="605.7,-77.1 621.1,-79.5 624.8,-55.9 609.4,-53.4"/><polygon points="503.8,-6.5 516.2,-8.4 521.3,23.6 508.8,25.6"/><polygon points="520.9,3.6 536.3,1.2 539.4,20.7 524.0,23.2"/><polygon points="537.4,-7.2 546.7,-8.6 551.1,18.9 541.7,20.4"/><polygon points="546.0,-13.2 568.5,-16.7 573.5,15.3 551.1,18.9"/><polygon points="572.4,-4.8 587.2,-7.2 590.3,12.7 575.5,15.0"/><polygon points="587.9,-10.0 612.0,-13.8 615.5,8.7 591.4,12.5"/><polygon points="614.9,-7.9 632.0,-10.6 634.5,5.7 617.5,8.4"/><polygon points="501.6,-20.1 523.2,-23.6 526.1,-5.3 504.5,-1.9"/><polygon points="602.8,-36.1 627.3,-40.0 629.5,-26.3 605.0,-22.4"/><polygon points="538.1,-31.9 563.6,-35.9 565.7,-22.3 540.2,-18.3"/><polygon points="510.7,37.4 534.2,33.7 537.4,54.3 513.9,58.0"/><polygon points="536.4,33.4 559.1,29.8 562.4,50.6 539.7,54.2"/><polygon points="560.1,29.6 577.1,26.9 582.1,58.6 565.1,61.3"/><polygon points="577.6,26.9 598.0,23.6 602.1,50.1 581.8,53.3"/><polygon points="599.3,23.4 617.9,20.5 622.9,52.0 604.3,54.9"/><polygon points="618.6,20.4 636.4,17.6 639.9,39.8 622.1,42.6"/><polygon points="521.2,104.1 544.6,100.4 547.6,119.4 524.2,123.1"/><polygon points="546.8,97.9 572.4,93.9 575.8,115.0 550.2,119.0"/><polygon points="570.6,81.9 581.4,80.2 586.6,113.3 575.8,115.0"/><polygon points="583.7,94.8 607.9,91.0 610.8,109.5 586.6,113.3"/><polygon points="610.0,90.3 620.6,88.6 623.5,107.4 613.0,109.1"/><polygon points="622.1,85.3 632.5,83.6 636.0,105.5 625.6,107.1"/><polygon points="633.7,73.6 645.0,71.8 649.9,103.3 638.7,105.1"/><polygon points="516.9,76.9 538.4,73.5 540.0,83.8 518.6,87.2"/><polygon points="624.3,60.0 642.6,57.1 645.5,75.1 627.1,78.0"/><polygon points="526.1,135.0 544.7,132.1 549.1,160.3 530.6,163.2"/><polygon points="546.8,131.7 556.5,130.2 561.5,161.9 551.8,163.4"/><polygon points="556.7,130.2 567.4,128.5 572.6,161.3 561.9,163.0"/><polygon points="570.3,128.0 588.0,125.2 590.5,141.1 572.8,143.9"/><polygon points="588.7,125.1 606.7,122.3 610.9,149.3 593.0,152.2"/><polygon points="608.3,122.0 633.8,118.0 637.8,143.2 612.3,147.2"/><polygon points="636.3,117.6 651.8,115.1 654.5,132.3 639.1,134.8"/><polygon points="534.7,189.1 557.9,185.4 563.1,218.5 539.9,222.2"/><polygon points="559.3,190.1 569.4,188.5 573.9,216.8 563.8,218.4"/><polygon points="568.7,183.8 582.1,181.7 587.3,214.7 573.9,216.8"/><polygon points="583.2,184.7 592.9,183.2 597.6,213.0 587.9,214.6"/><polygon points="597.0,191.0 610.4,188.9 613.8,210.5 600.4,212.6"/><polygon points="610.6,189.6 627.1,187.0 630.4,207.9 613.9,210.5"/><polygon points="626.1,174.2 641.9,171.7 647.2,205.2 631.4,207.7"/><polygon points="645.7,181.6 659.1,179.4 662.8,202.7 649.4,204.9"/><polygon points="532.4,174.5 552.5,171.3 554.8,185.7 534.6,188.9"/><polygon points="627.6,159.5 658.1,154.6 661.3,175.0 630.8,179.8"/><polygon points="560.8,168.7 587.1,164.6 588.7,174.3 562.4,178.4"/><polygon points="585.3,161.4 606.8,158.0 608.3,167.3 586.8,170.7"/><polygon points="541.8,234.0 552.6,232.3 557.5,263.1 546.6,264.8"/><polygon points="554.9,231.9 579.1,228.1 581.7,244.8 557.6,248.6"/><polygon points="581.1,227.8 595.5,225.5 599.8,252.8 585.4,255.1"/><polygon points="597.1,225.3 611.3,223.0 616.5,256.1 602.3,258.4"/><polygon points="611.3,223.0 632.7,219.6 637.6,250.6 616.2,254.0"/><polygon points="634.2,219.4 653.0,216.4 658.3,249.9 639.5,252.9"/><polygon points="653.7,216.3 667.5,214.2 672.1,243.2 658.3,245.3"/><polygon points="550.8,291.1 571.6,287.8 575.2,310.6 554.4,313.9"/><polygon points="572.4,282.5 591.6,279.5 596.0,307.3 576.8,310.3"/><polygon points="592.9,281.7 612.3,278.6 616.4,304.1 596.9,307.2"/><polygon points="613.8,283.5 633.0,280.4 636.2,300.9 617.0,304.0"/><polygon points="634.4,271.9 651.2,269.2 655.7,297.9 638.9,300.5"/><polygon points="654.2,277.9 671.1,275.2 674.2,294.9 657.3,297.6"/><polygon points="670.6,269.7 676.1,268.8 680.1,294.0 674.6,294.9"/><polygon points="548.0,273.5 578.6,268.7 581.2,284.8 550.5,289.7"/><polygon points="642.9,258.5 673.7,253.7 675.6,265.6 644.8,270.4"/><polygon points="614.6,257.1 646.1,252.1 648.1,265.3 616.7,270.3"/><polygon points="589.0,262.1 610.2,258.8 611.8,268.9 590.6,272.2"/><polygon points="556.2,325.7 572.0,323.2 576.5,351.5 560.7,354.0"/><polygon points="573.1,323.1 588.1,320.7 592.5,348.3 577.5,350.7"/><polygon points="589.7,320.4 603.7,318.2 608.0,345.8 594.1,348.0"/><polygon points="604.5,318.1 618.2,315.9 622.0,339.7 608.2,341.8"/><polygon points="618.6,315.9 638.1,312.8 642.7,341.6 623.1,344.7"/><polygon points="638.6,312.7 656.2,309.9 658.7,325.8 641.2,328.6"/><polygon points="656.6,309.9 673.7,307.2 678.1,334.7 661.0,337.4"/><polygon points="675.5,306.9 682.0,305.9 686.7,335.9 680.3,336.9"/><polygon points="567.1,394.6 585.4,391.8 587.9,407.6 569.6,410.5"/><polygon points="585.3,386.2 604.1,383.2 607.4,404.5 588.6,407.5"/><polygon points="605.8,383.9 630.1,380.0 633.3,400.4 609.1,404.2"/><polygon points="630.2,375.1 646.4,372.6 650.4,397.7 634.1,400.3"/><polygon points="649.0,379.4 659.4,377.8 662.2,395.8 651.8,397.5"/><polygon points="660.4,365.7 674.1,363.5 678.8,393.2 665.1,395.4"/><polygon points="678.0,370.3 691.8,368.1 695.3,390.6 681.5,392.8"/><polygon points="562.5,365.2 595.6,360.0 598.6,378.8 565.5,384.0"/><polygon points="666.4,348.8 688.2,345.4 690.9,362.5 669.1,365.9"/><polygon points="596.0,357.8 622.5,353.6 624.6,367.1 598.1,371.3"/><polygon points="614.0,351.1 629.0,348.8 631.2,362.3 616.1,364.7"/><polygon points="571.5,422.3 581.7,420.7 585.5,444.4 575.3,446.0"/><polygon points="582.9,420.5 598.8,418.0 603.9,450.5 588.0,453.0"/><polygon points="600.7,417.7 622.8,414.2 625.6,431.9 603.5,435.4"/><polygon points="624.5,413.9 649.1,410.1 653.6,438.3 629.0,442.2"/><polygon points="650.4,409.9 676.0,405.8 679.0,424.7 653.4,428.8"/><polygon points="676.2,405.8 691.8,403.3 694.6,421.5 679.1,424.0"/><polygon points="694.0,403.0 697.2,402.5 700.4,422.4 697.1,422.9"/><polygon points="579.0,469.9 597.0,467.1 602.1,499.3 584.1,502.2"/><polygon points="599.4,476.5 613.8,474.2 617.4,496.9 603.0,499.2"/><polygon points="613.9,465.8 624.3,464.2 629.2,495.1 618.8,496.7"/><polygon points="627.0,470.1 636.1,468.7 640.0,493.3 630.9,494.8"/><polygon points="638.8,469.1 651.3,467.1 655.0,491.0 642.5,492.9"/><polygon points="654.0,468.8 666.3,466.9 669.7,488.6 657.5,490.6"/><polygon points="667.7,459.1 685.8,456.3 690.4,485.4 672.3,488.2"/><polygon points="689.3,461.9 700.5,460.2 704.2,483.2 692.9,485.0"/><polygon points="700.9,461.7 706.4,460.8 709.8,482.3 704.3,483.2"/><polygon points="577.7,461.8 598.5,458.6 601.9,480.1 581.1,483.3"/><polygon points="684.3,445.0 703.5,442.0 706.0,458.0 686.8,461.0"/><polygon points="640.6,445.3 665.9,441.3 667.5,451.4 642.2,455.4"/><polygon points="607.6,452.2 627.6,449.1 629.6,461.5 609.5,464.7"/><polygon points="586.0,514.0 609.3,510.3 612.5,530.7 589.2,534.4"/><polygon points="609.9,510.3 619.6,508.7 623.6,534.1 613.9,535.6"/><polygon points="620.7,508.5 637.4,505.9 641.3,530.4 624.6,533.0"/><polygon points="639.2,505.6 654.2,503.3 658.9,533.3 643.9,535.7"/><polygon points="654.8,503.2 679.1,499.3 683.2,525.0 658.8,528.9"/><polygon points="679.3,499.3 693.4,497.1 697.4,522.3 683.3,524.6"/><polygon points="694.6,496.9 711.7,494.2 715.1,515.7 698.0,518.4"/><polygon points="594.8,570.0 617.1,566.5 620.4,587.4 598.2,591.0"/><polygon points="618.4,560.8 640.7,557.2 644.9,583.6 622.5,587.1"/><polygon points="642.5,559.6 667.1,555.8 670.8,579.5 646.2,583.4"/><polygon points="669.7,555.6 679.6,554.0 683.3,577.5 673.4,579.1"/><polygon points="680.2,546.1 690.0,544.5 694.9,575.7 685.2,577.2"/><polygon points="692.1,556.6 711.0,553.6 714.0,572.7 695.1,575.6"/><polygon points="712.0,542.2 719.1,541.1 723.9,571.1 716.7,572.2"/><polygon points="649.4,538.0 678.6,533.4 680.3,543.8 651.1,548.4"/><polygon points="626.2,541.3 656.0,536.5 657.6,546.9 627.8,551.6"/><polygon points="600.0,602.8 616.7,600.2 619.8,619.6 603.1,622.2"/><polygon points="617.0,600.1 626.7,598.6 629.9,618.4 620.1,619.9"/><polygon points="629.2,598.2 650.0,594.9 653.7,618.6 632.9,621.9"/><polygon points="651.2,594.7 674.7,591.0 679.8,623.2 656.3,627.0"/><polygon points="675.1,591.0 686.7,589.1 690.4,612.9 678.8,614.7"/><polygon points="688.9,588.8 712.5,585.0 717.2,615.0 693.6,618.7"/><polygon points="714.6,584.7 725.7,582.9 729.1,604.3 717.9,606.0"/><polygon points="609.7,664.0 627.8,661.2 630.9,680.8 612.8,683.6"/><polygon points="630.6,660.4 650.6,657.3 653.8,677.2 633.7,680.3"/><polygon points="653.7,658.1 668.1,655.9 671.0,674.4 656.7,676.7"/><polygon points="667.5,646.2 687.3,643.0 691.8,671.2 671.9,674.3"/><polygon points="689.4,652.0 700.8,650.2 703.8,669.3 692.4,671.1"/><polygon points="702.1,652.6 717.8,650.2 720.4,666.6 704.8,669.1"/><polygon points="718.3,646.9 735.4,644.2 738.5,663.8 721.4,666.5"/><polygon points="606.3,642.3 625.2,639.3 627.7,655.4 608.8,658.4"/><polygon points="701.9,627.2 732.0,622.5 733.6,632.5 703.4,637.3"/><polygon points="614.7,695.5 626.9,693.6 630.2,714.3 618.0,716.3"/><polygon points="627.8,693.4 646.5,690.5 651.1,719.7 632.4,722.7"/><polygon points="647.1,690.4 663.9,687.7 668.6,717.2 651.8,719.8"/><polygon points="666.2,687.4 690.2,683.6 694.4,709.7 670.3,713.5"/><polygon points="691.1,683.4 709.8,680.5 712.5,698.1 693.9,701.0"/><polygon points="709.8,680.5 721.9,678.6 724.8,697.1 712.7,699.0"/><polygon points="722.8,678.4 734.6,676.5 738.1,698.6 726.3,700.4"/><polygon points="736.0,676.3 740.4,675.6 743.9,697.9 739.5,698.6"/><polygon points="623.7,753.0 646.6,749.4 651.4,779.5 628.5,783.2"/><polygon points="648.9,750.1 665.5,747.5 670.1,776.6 653.5,779.2"/><polygon points="666.8,753.7 678.4,751.9 682.0,774.7 670.4,776.5"/><polygon points="678.0,748.6 687.5,747.1 691.6,773.2 682.1,774.7"/><polygon points="689.2,749.8 709.8,746.6 713.5,769.7 692.9,773.0"/><polygon points="711.4,740.6 721.6,739.0 726.1,767.7 715.9,769.3"/><polygon points="723.9,739.8 738.9,737.5 743.2,765.0 728.3,767.4"/><polygon points="739.2,737.7 748.1,736.3 752.5,763.6 743.5,765.0"/><polygon points="620.9,735.0 642.8,731.5 644.9,745.0 623.0,748.5"/><polygon points="726.4,718.3 746.6,715.1 748.6,727.9 728.4,731.0"/><polygon points="653.5,724.9 676.9,721.2 678.7,732.9 655.3,736.6"/><polygon points="669.6,722.6 690.9,719.2 692.6,730.0 671.3,733.3"/><polygon points="630.4,795.0 642.7,793.1 645.6,811.1 633.2,813.1"/><polygon points="643.4,793.0 666.9,789.2 670.8,814.0 647.3,817.7"/><polygon points="669.6,788.8 678.7,787.4 683.9,820.0 674.7,821.4"/><polygon points="680.2,787.1 702.3,783.6 706.4,809.6 684.3,813.1"/><polygon points="704.4,783.3 717.1,781.3 721.7,810.4 709.0,812.5"/><polygon points="717.6,781.2 730.9,779.1 733.5,795.5 720.2,797.6"/><polygon points="732.1,778.9 749.7,776.2 753.0,797.2 735.4,799.9"/><polygon points="752.3,775.8 756.1,775.1 760.2,801.2 756.4,801.8"/><polygon points="639.2,851.0 658.1,848.0 662.8,877.7 643.9,880.7"/><polygon points="661.7,857.2 671.7,855.7 674.9,875.8 664.9,877.4"/><polygon points="674.0,859.0 699.4,855.0 702.0,871.5 676.6,875.6"/><polygon points="699.1,841.0 719.6,837.7 724.4,868.0 703.9,871.3"/><polygon points="721.6,843.8 744.1,840.3 747.9,864.3 725.4,867.9"/><polygon points="745.5,831.3 754.5,829.9 759.7,862.4 750.6,863.9"/><polygon points="758.2,844.9 766.9,843.5 769.6,860.9 760.9,862.2"/><polygon points="636.6,834.5 665.1,830.0 668.1,848.6 639.6,853.1"/><polygon points="742.3,817.8 762.3,814.7 764.6,828.6 744.6,831.8"/><polygon points="645.8,892.6 666.2,889.4 670.7,917.8 650.3,921.0"/><polygon points="666.4,889.3 675.4,887.9 680.3,919.4 671.4,920.8"/><polygon points="675.5,887.9 693.2,885.1 696.6,906.8 678.9,909.6"/><polygon points="693.4,885.1 712.4,882.1 715.1,899.0 696.1,902.0"/><polygon points="715.0,881.6 724.7,880.1 728.2,902.4 718.5,904.0"/><polygon points="725.9,879.9 745.7,876.8 751.0,909.9 731.2,913.0"/><polygon points="747.5,876.5 769.9,873.0 773.7,897.5 751.4,901.1"/><polygon points="656.1,957.9 673.3,955.2 676.6,975.6 659.3,978.3"/><polygon points="676.0,958.5 690.0,956.3 692.6,973.0 678.6,975.2"/><polygon points="689.6,944.9 711.7,941.4 716.1,969.3 694.0,972.8"/><polygon points="712.3,942.1 727.7,939.6 732.0,966.8 716.6,969.2"/><polygon points="730.2,937.3 747.7,934.5 752.3,963.6 734.8,966.4"/><polygon points="749.7,936.3 769.6,933.1 773.9,960.2 754.0,963.3"/><polygon points="769.4,930.1 780.3,928.4 785.1,958.4 774.1,960.2"/><polygon points="652.1,932.1 673.6,928.7 676.8,948.6 655.2,952.0"/><polygon points="746.1,917.2 777.8,912.2 780.4,928.8 748.7,933.8"/><polygon points="716.7,918.6 731.5,916.3 733.2,926.8 718.4,929.1"/><polygon points="705.6,918.8 735.4,914.1 737.0,924.5 707.3,929.2"/><polygon points="632.9,-81.4 657.7,-85.3 660.9,-65.4 636.1,-61.5"/><polygon points="659.7,-85.6 681.9,-89.1 686.3,-61.5 664.1,-58.0"/><polygon points="684.6,-89.6 700.6,-92.1 704.0,-70.9 687.9,-68.3"/><polygon points="701.5,-92.2 720.6,-95.2 725.7,-62.5 706.7,-59.5"/><polygon points="723.2,-95.6 740.0,-98.3 743.7,-75.2 726.8,-72.5"/><polygon points="740.9,-98.5 752.3,-100.2 756.3,-74.7 745.0,-73.0"/><polygon points="642.6,-20.3 658.1,-22.7 661.9,1.4 646.4,3.8"/><polygon points="656.7,-32.1 671.2,-34.4 676.5,-0.9 662.0,1.4"/><polygon points="673.4,-24.1 697.3,-27.8 700.9,-4.8 677.1,-1.0"/><polygon points="699.4,-24.7 712.3,-26.7 715.4,-7.1 702.5,-5.0"/><polygon points="712.3,-39.1 727.5,-41.5 732.5,-9.8 717.3,-7.4"/><polygon points="730.7,-28.4 745.2,-30.7 748.1,-12.2 733.7,-10.0"/><polygon points="743.8,-42.6 758.6,-45.0 763.4,-14.7 748.6,-12.3"/><polygon points="639.2,-41.9 661.8,-45.5 665.2,-24.2 642.5,-20.6"/><polygon points="730.7,-56.3 761.0,-61.1 764.2,-40.9 733.9,-36.1"/><polygon points="648.3,15.7 663.7,13.2 666.2,29.2 650.8,31.7"/><polygon points="666.2,12.8 676.9,11.2 680.1,31.3 669.4,33.0"/><polygon points="678.5,10.9 698.5,7.8 703.0,36.7 683.1,39.8"/><polygon points="700.5,7.4 725.9,3.4 730.5,32.3 705.0,36.3"/><polygon points="728.1,3.1 748.2,-0.1 751.1,18.1 731.0,21.3"/><polygon points="750.4,-0.5 763.6,-2.5 767.2,20.7 754.1,22.7"/><polygon points="765.1,-2.8 770.1,-3.6 773.3,17.0 768.4,17.8"/><polygon points="657.3,73.0 671.3,70.8 675.8,99.2 661.8,101.4"/><polygon points="673.1,68.7 697.7,64.8 702.5,95.0 677.9,98.9"/><polygon points="698.8,70.4 718.7,67.2 722.5,91.8 702.7,94.9"/><polygon points="719.6,60.1 728.8,58.7 733.8,90.0 724.6,91.5"/><polygon points="732.9,67.1 743.8,65.4 747.3,87.9 736.4,89.6"/><polygon points="745.3,69.2 762.8,66.5 765.7,85.0 748.2,87.7"/><polygon points="762.4,52.0 778.5,49.5 783.6,82.2 767.5,84.7"/><polygon points="654.5,55.2 687.1,50.1 688.7,60.0 656.1,65.2"/><polygon points="744.0,41.1 776.3,36.0 778.2,48.1 745.9,53.2"/><polygon points="688.7,48.1 713.9,44.2 715.8,56.2 690.6,60.2"/><polygon points="663.7,113.3 676.6,111.2 681.3,140.8 668.3,142.8"/><polygon points="676.7,111.2 694.8,108.3 698.4,131.4 680.3,134.2"/><polygon points="695.0,108.3 719.9,104.4 724.2,131.5 699.3,135.5"/><polygon points="721.3,104.1 746.6,100.2 750.1,122.4 724.9,126.4"/><polygon points="749.3,99.7 763.6,97.5 768.4,128.1 754.1,130.4"/><polygon points="765.1,97.2 774.8,95.7 778.8,121.0 769.1,122.5"/><polygon points="777.4,95.3 785.5,94.0 790.3,124.2 782.2,125.4"/><polygon points="673.5,175.4 687.6,173.1 691.5,198.2 677.4,200.4"/><polygon points="689.4,171.6 713.5,167.8 717.7,194.1 693.5,197.9"/><polygon points="717.0,171.4 739.0,167.9 742.5,190.2 720.5,193.6"/><polygon points="739.5,158.2 753.0,156.1 758.0,187.7 744.5,189.8"/><polygon points="754.3,155.2 773.6,152.1 778.7,184.4 759.4,187.5"/><polygon points="776.4,162.0 795.7,158.9 799.3,181.2 779.9,184.2"/><polygon points="669.9,152.8 695.2,148.8 698.2,168.1 673.0,172.0"/><polygon points="764.1,137.9 791.7,133.5 795.0,154.4 767.4,158.7"/><polygon points="722.3,140.1 751.3,135.5 752.7,144.5 723.7,149.1"/><polygon points="679.3,212.3 700.9,208.9 704.7,233.0 683.1,236.4"/><polygon points="702.6,208.6 722.7,205.4 727.3,234.6 707.2,237.8"/><polygon points="723.5,205.3 738.5,202.9 743.6,235.0 728.6,237.4"/><polygon points="740.1,202.7 753.8,200.5 758.1,227.5 744.4,229.7"/><polygon points="754.6,200.4 776.4,196.9 779.1,213.5 757.2,216.9"/><polygon points="778.9,196.6 797.3,193.6 800.8,215.7 782.4,218.6"/><polygon points="688.8,272.0 702.1,269.9 705.3,290.0 691.9,292.1"/><polygon points="700.9,260.8 719.0,257.9 723.6,287.1 705.5,290.0"/><polygon points="720.8,256.7 736.7,254.2 741.4,284.3 725.6,286.8"/><polygon points="737.4,257.0 751.5,254.8 755.8,282.0 741.8,284.3"/><polygon points="754.2,253.5 773.8,250.4 778.2,278.5 758.7,281.6"/><polygon points="775.4,245.6 790.9,243.2 796.0,275.7 780.5,278.1"/><polygon points="794.6,252.6 809.2,250.3 812.8,273.0 798.2,275.3"/><polygon points="685.6,251.8 706.3,248.5 708.5,262.5 687.8,265.8"/><polygon points="781.4,236.7 807.4,232.5 809.9,248.7 783.9,252.8"/><polygon points="717.1,238.2 737.2,235.0 738.8,245.0 718.7,248.1"/><polygon points="693.8,304.0 711.1,301.3 716.0,332.2 698.7,334.9"/><polygon points="713.1,300.9 731.7,298.0 735.3,321.0 716.7,323.9"/><polygon points="733.4,297.7 746.9,295.6 751.8,326.4 738.3,328.6"/><polygon points="749.2,295.2 772.2,291.6 775.1,310.1 752.1,313.7"/><polygon points="774.2,291.3 795.7,287.9 799.6,312.6 778.1,316.0"/><polygon points="798.4,287.5 815.6,284.7 820.2,313.8 803.0,316.5"/><polygon points="702.2,357.3 722.0,354.2 727.0,385.6 707.2,388.7"/><polygon points="722.9,357.2 743.6,354.0 748.1,382.3 727.4,385.5"/><polygon points="747.2,365.0 760.7,362.8 763.4,379.8 749.9,382.0"/><polygon points="761.9,358.9 784.7,355.3 787.9,376.0 765.2,379.6"/><polygon points="785.8,358.4 798.4,356.4 801.2,373.9 788.6,375.9"/><polygon points="798.5,343.5 823.7,339.5 828.5,369.6 803.2,373.6"/><polygon points="700.1,343.5 719.0,340.5 721.8,358.7 702.9,361.7"/><polygon points="804.0,327.1 821.9,324.3 824.0,338.0 806.2,340.8"/><polygon points="709.1,400.6 725.5,398.0 729.4,422.7 713.0,425.3"/><polygon points="728.4,397.5 747.2,394.6 751.3,421.0 732.5,423.9"/><polygon points="747.3,394.5 765.2,391.7 769.0,415.8 751.1,418.7"/><polygon points="766.6,391.5 780.4,389.3 785.6,421.8 771.7,423.9"/><polygon points="783.3,388.9 801.1,386.0 804.2,405.9 786.4,408.8"/><polygon points="802.8,385.8 825.4,382.2 828.7,403.0 806.0,406.6"/><polygon points="717.2,452.0 735.8,449.0 740.3,477.5 721.7,480.4"/><polygon points="736.2,447.2 748.0,445.3 752.7,475.5 740.9,477.4"/><polygon points="748.3,442.6 763.5,440.2 768.7,473.0 753.5,475.4"/><polygon points="766.7,455.1 777.1,453.4 779.9,471.2 769.5,472.9"/><polygon points="777.4,448.0 802.3,444.0 806.0,467.1 781.1,471.1"/><polygon points="805.3,450.0 829.0,446.3 831.7,463.1 808.0,466.8"/><polygon points="828.4,435.4 839.2,433.7 843.5,461.2 832.8,462.9"/><polygon points="715.3,440.1 742.2,435.8 745.0,453.3 718.1,457.6"/><polygon points="805.4,425.9 837.1,420.8 840.5,442.2 808.8,447.2"/><polygon points="723.6,492.3 738.2,490.0 741.2,509.2 726.6,511.5"/><polygon points="739.4,489.8 753.0,487.6 756.1,506.9 742.4,509.0"/><polygon points="755.2,487.3 772.8,484.5 776.5,508.1 758.9,510.9"/><polygon points="773.3,484.4 794.0,481.2 797.1,500.5 776.4,503.7"/><polygon points="794.8,481.0 813.1,478.1 817.6,506.4 799.3,509.3"/><polygon points="816.0,477.7 837.5,474.3 842.6,507.0 821.2,510.3"/><polygon points="840.2,473.9 845.4,473.0 849.9,501.6 844.7,502.5"/><polygon points="733.2,553.2 745.5,551.2 748.1,567.3 735.7,569.2"/><polygon points="746.4,539.9 767.4,536.5 771.6,563.5 750.6,566.9"/><polygon points="769.5,544.7 784.3,542.4 787.3,561.1 772.4,563.4"/><polygon points="785.8,539.5 811.3,535.5 814.7,556.7 789.1,560.8"/><polygon points="811.3,534.6 823.2,532.7 826.6,554.9 814.8,556.7"/><polygon points="825.5,530.5 847.9,527.0 851.7,550.9 829.3,554.4"/><polygon points="849.1,532.3 854.6,531.4 857.5,550.0 852.0,550.8"/><polygon points="775.5,516.0 790.5,513.6 791.9,522.7 776.9,525.0"/><polygon points="737.6,581.1 761.5,577.3 766.8,610.5 742.8,614.2"/><polygon points="764.1,576.9 781.8,574.1 785.0,594.4 767.3,597.2"/><polygon points="783.0,573.9 797.8,571.6 802.2,599.0 787.3,601.4"/><polygon points="800.6,571.1 812.7,569.2 816.0,590.0 803.9,591.9"/><polygon points="815.1,568.8 832.7,566.0 837.4,595.6 819.8,598.4"/><polygon points="834.9,565.7 846.5,563.9 851.5,595.6 839.9,597.4"/><polygon points="847.8,563.7 859.0,561.9 861.8,579.7 850.6,581.4"/><polygon points="747.8,645.6 765.6,642.8 768.2,659.1 750.4,661.9"/><polygon points="767.8,641.4 793.1,637.4 795.8,654.7 770.6,658.7"/><polygon points="794.0,628.4 806.3,626.4 810.4,652.4 798.1,654.4"/><polygon points="809.7,630.2 833.0,626.5 836.5,648.3 813.1,652.0"/><polygon points="833.5,618.6 850.1,615.9 854.8,645.4 838.1,648.0"/><polygon points="854.4,625.6 863.4,624.1 866.4,643.6 857.4,645.0"/><polygon points="864.7,625.9 869.4,625.1 872.2,642.7 867.5,643.4"/><polygon points="743.8,620.6 768.6,616.7 771.9,637.8 747.2,641.7"/><polygon points="837.0,605.9 865.6,601.3 868.9,622.1 840.3,626.6"/><polygon points="752.2,673.8 770.7,670.8 775.2,699.4 756.8,702.4"/><polygon points="773.3,670.4 785.0,668.6 789.3,696.0 777.6,697.8"/><polygon points="787.5,668.2 813.0,664.2 817.6,692.7 792.0,696.7"/><polygon points="814.4,663.9 838.1,660.2 842.3,686.8 818.6,690.5"/><polygon points="838.5,660.1 855.7,657.4 859.3,680.0 842.0,682.7"/><polygon points="857.8,657.1 874.0,654.5 879.0,686.1 862.8,688.7"/><polygon points="761.5,732.4 779.9,729.5 784.5,758.5 766.1,761.4"/><polygon points="780.8,731.1 802.1,727.7 806.4,755.0 785.1,758.4"/><polygon points="804.1,735.6 828.2,731.8 831.3,751.1 807.2,754.9"/><polygon points="827.7,728.2 844.4,725.5 848.0,748.5 831.3,751.1"/><polygon points="846.1,718.4 871.1,714.5 875.8,744.1 850.8,748.0"/><polygon points="871.8,718.0 883.8,716.1 887.9,742.2 875.9,744.1"/><polygon points="758.5,713.3 783.7,709.3 785.3,719.7 760.1,723.6"/><polygon points="850.5,698.7 880.3,694.0 883.6,715.2 853.9,719.9"/><polygon points="768.0,773.3 780.0,771.4 784.8,801.5 772.7,803.4"/><polygon points="780.5,771.3 798.0,768.5 800.8,786.2 783.3,789.0"/><polygon points="800.3,768.2 824.1,764.4 829.2,796.5 805.4,800.3"/><polygon points="824.1,764.4 847.3,760.7 851.4,786.4 828.2,790.1"/><polygon points="849.7,760.4 867.1,757.6 871.3,784.4 854.0,787.2"/><polygon points="868.8,757.3 889.8,754.0 892.5,771.2 871.6,774.5"/><polygon points="778.2,838.0 796.2,835.2 799.5,856.1 781.5,859.0"/><polygon points="796.1,826.9 805.2,825.5 809.7,854.5 800.7,856.0"/><polygon points="805.0,824.3 827.9,820.7 832.6,850.9 809.8,854.5"/><polygon points="829.7,823.3 840.6,821.6 844.9,849.0 834.0,850.7"/><polygon points="842.7,831.1 858.8,828.6 861.6,846.3 845.5,848.9"/><polygon points="861.0,823.8 879.1,820.9 882.6,843.0 864.5,845.9"/><polygon points="878.0,812.1 898.4,808.8 903.3,839.7 882.9,843.0"/><polygon points="774.2,812.8 797.8,809.1 799.5,820.1 776.0,823.9"/><polygon points="875.9,796.7 896.0,793.5 899.0,812.5 878.9,815.6"/><polygon points="831.6,797.5 845.1,795.4 846.4,804.0 832.9,806.1"/><polygon points="783.4,870.8 803.9,867.6 808.1,894.0 787.6,897.3"/><polygon points="805.4,867.4 822.0,864.7 825.6,887.8 809.1,890.4"/><polygon points="823.8,864.5 843.6,861.3 848.6,893.4 828.9,896.6"/><polygon points="845.7,861.0 868.0,857.5 873.1,889.5 850.8,893.0"/><polygon points="870.5,857.1 891.4,853.8 894.0,870.1 873.1,873.4"/><polygon points="893.4,853.5 905.2,851.6 908.9,875.1 897.1,876.9"/><polygon points="791.8,924.0 803.7,922.1 808.8,954.7 796.9,956.6"/><polygon points="806.9,934.2 827.7,930.9 830.9,951.2 810.1,954.5"/><polygon points="828.4,929.5 843.1,927.1 846.5,948.7 831.8,951.0"/><polygon points="841.5,915.4 857.9,912.8 863.1,946.1 846.8,948.7"/><polygon points="860.4,916.4 885.0,912.5 889.6,941.9 865.1,945.8"/><polygon points="887.5,912.3 913.1,908.3 917.7,937.5 892.1,941.5"/><polygon points="789.6,910.4 813.9,906.5 815.9,919.4 791.6,923.2"/><polygon points="879.6,896.1 911.4,891.1 913.4,903.7 881.6,908.7"/><polygon points="816.3,900.8 845.2,896.2 846.8,906.3 817.9,910.9"/><polygon points="766.6,-102.5 776.8,-104.1 779.8,-85.4 769.5,-83.8"/><polygon points="776.9,-104.1 800.1,-107.8 803.8,-84.4 780.6,-80.8"/><polygon points="801.1,-108.0 811.1,-109.5 813.9,-91.6 803.9,-90.0"/><polygon points="812.4,-109.7 824.9,-111.7 827.5,-95.0 815.1,-93.0"/><polygon points="826.8,-112.0 839.8,-114.1 844.9,-82.0 831.9,-79.9"/><polygon points="842.6,-114.5 860.2,-117.3 864.9,-87.7 847.3,-84.9"/><polygon points="862.1,-117.6 881.8,-120.7 884.9,-101.0 865.2,-97.9"/><polygon points="884.1,-121.1 890.3,-122.1 894.8,-93.6 888.6,-92.6"/><polygon points="774.9,-49.9 785.8,-51.7 790.9,-19.0 780.0,-17.3"/><polygon points="789.8,-38.0 809.0,-41.1 811.9,-22.3 792.7,-19.3"/><polygon points="811.2,-45.5 824.8,-47.7 828.4,-24.9 814.7,-22.8"/><polygon points="826.7,-42.5 851.7,-46.5 854.4,-29.0 829.4,-25.1"/><polygon points="852.8,-56.2 872.4,-59.3 876.7,-32.5 857.0,-29.4"/><polygon points="875.7,-51.2 897.0,-54.6 899.9,-36.2 878.6,-32.9"/><polygon points="896.5,-59.0 900.2,-59.6 903.8,-36.8 900.1,-36.3"/><polygon points="772.8,-63.0 799.1,-67.1 802.0,-48.6 775.8,-44.5"/><polygon points="870.0,-78.3 896.6,-82.6 898.3,-71.8 871.7,-67.6"/><polygon points="839.4,-78.9 867.0,-83.3 869.0,-70.3 841.5,-65.9"/><polygon points="807.2,-73.7 822.8,-76.2 824.5,-65.6 808.9,-63.1"/><polygon points="781.9,-5.4 802.4,-8.7 806.1,15.1 785.7,18.3"/><polygon points="804.5,-9.0 815.0,-10.7 820.1,21.7 809.7,23.4"/><polygon points="816.0,-10.8 838.9,-14.4 841.5,1.9 818.6,5.5"/><polygon points="841.4,-14.8 854.1,-16.8 859.0,14.2 846.3,16.2"/><polygon points="856.4,-17.2 876.6,-20.4 879.9,0.4 859.7,3.5"/><polygon points="876.6,-20.4 888.7,-22.3 893.7,9.6 881.7,11.5"/><polygon points="889.2,-22.4 905.7,-25.0 909.8,1.3 893.3,3.9"/><polygon points="792.6,61.9 804.5,60.0 807.4,78.4 795.5,80.3"/><polygon points="804.1,55.7 829.5,51.7 833.1,74.3 807.7,78.4"/><polygon points="831.9,54.3 850.3,51.3 853.5,71.1 835.0,74.0"/><polygon points="848.8,40.1 857.9,38.7 862.8,69.6 853.6,71.1"/><polygon points="859.7,47.3 884.7,43.4 888.2,65.6 863.2,69.6"/><polygon points="885.7,35.5 896.9,33.7 901.6,63.5 890.4,65.3"/><polygon points="898.4,38.3 913.4,35.9 917.4,61.0 902.3,63.4"/><polygon points="788.2,34.1 818.5,29.3 820.5,42.1 790.2,46.9"/><polygon points="882.1,19.2 911.9,14.5 914.2,28.9 884.3,33.6"/><polygon points="797.3,92.1 821.1,88.4 825.8,117.7 802.0,121.5"/><polygon points="823.6,88.0 836.6,85.9 841.6,117.6 828.6,119.7"/><polygon points="837.4,85.8 846.4,84.4 849.2,102.0 840.1,103.4"/><polygon points="847.5,84.2 862.6,81.8 865.9,102.6 850.8,105.0"/><polygon points="864.0,81.6 881.1,78.9 883.9,96.7 866.8,99.4"/><polygon points="882.7,78.6 899.9,75.9 903.5,98.9 886.3,101.6"/><polygon points="901.3,75.7 921.1,72.6 926.2,104.6 906.3,107.7"/><polygon points="808.1,160.1 818.0,158.5 821.0,177.7 811.1,179.3"/><polygon points="818.6,157.6 835.0,155.0 838.2,175.0 821.8,177.6"/><polygon points="835.2,150.0 845.1,148.5 849.0,173.3 839.2,174.9"/><polygon points="846.2,146.4 858.7,144.4 863.0,171.1 850.4,173.1"/><polygon points="862.4,148.2 886.8,144.3 890.4,166.8 865.9,170.7"/><polygon points="887.9,150.0 904.1,147.4 906.7,164.2 890.6,166.8"/><polygon points="904.9,142.5 922.3,139.8 925.7,161.2 908.3,164.0"/><polygon points="922.2,137.0 931.1,135.6 934.9,159.8 926.0,161.2"/><polygon points="803.6,131.6 823.4,128.5 826.5,147.7 806.6,150.8"/><polygon points="908.0,115.1 927.3,112.1 930.1,129.4 910.8,132.5"/><polygon points="833.8,123.3 861.7,118.9 863.2,128.6 835.3,133.0"/><polygon points="813.0,191.2 830.4,188.4 834.7,215.4 817.2,218.1"/><polygon points="832.8,188.0 856.9,184.2 861.2,211.5 837.1,215.3"/><polygon points="858.9,183.9 868.3,182.4 872.7,209.7 863.2,211.2"/><polygon points="870.6,182.1 890.7,178.9 893.6,197.2 873.5,200.3"/><polygon points="891.8,178.7 907.2,176.3 912.1,207.9 896.8,210.3"/><polygon points="908.1,176.1 917.7,174.6 922.6,205.7 913.0,207.2"/><polygon points="919.6,174.3 936.7,171.6 941.2,199.9 924.1,202.6"/><polygon points="821.1,242.3 837.7,239.7 842.2,268.4 825.6,271.0"/><polygon points="840.2,247.3 863.4,243.7 866.7,264.5 843.5,268.2"/><polygon points="866.2,242.9 889.2,239.2 892.6,260.4 869.6,264.1"/><polygon points="890.8,243.3 903.0,241.4 905.7,258.4 893.5,260.3"/><polygon points="902.3,236.1 914.0,234.3 917.5,256.5 905.8,258.3"/><polygon points="915.4,233.8 925.3,232.3 928.9,254.7 918.9,256.3"/><polygon points="927.0,226.5 945.0,223.7 949.4,251.5 931.4,254.3"/><polygon points="819.2,230.7 840.0,227.4 843.3,248.0 822.5,251.3"/><polygon points="912.8,215.9 943.0,211.1 945.1,224.7 915.0,229.4"/><polygon points="847.4,219.2 864.6,216.5 866.5,228.4 849.3,231.1"/><polygon points="827.5,282.9 845.9,280.0 850.6,309.5 832.1,312.4"/><polygon points="846.6,279.8 869.6,276.2 872.5,294.8 849.6,298.4"/><polygon points="872.0,275.8 891.0,272.8 894.9,297.1 875.8,300.1"/><polygon points="892.7,272.6 908.0,270.1 911.3,290.6 895.9,293.0"/><polygon points="909.7,269.9 923.2,267.7 926.9,290.9 913.4,293.1"/><polygon points="925.9,267.3 951.2,263.3 954.1,281.5 928.8,285.5"/><polygon points="837.9,348.8 859.4,345.4 862.4,364.2 840.9,367.6"/><polygon points="858.9,333.6 869.1,332.0 873.9,362.4 863.7,364.0"/><polygon points="872.1,336.1 885.3,334.0 889.4,359.9 876.2,362.0"/><polygon points="885.4,330.8 896.9,329.0 901.5,358.0 890.0,359.8"/><polygon points="901.6,340.1 922.4,336.8 925.2,354.3 904.3,357.6"/><polygon points="921.2,321.1 943.9,317.5 949.1,350.5 926.5,354.1"/><polygon points="947.2,320.9 957.3,319.3 961.9,348.5 951.8,350.1"/><polygon points="833.7,322.4 852.7,319.4 854.5,330.9 835.5,333.9"/><polygon points="929.2,307.3 957.5,302.8 959.6,316.3 931.3,320.7"/><polygon points="865.9,313.6 884.4,310.7 886.2,322.4 867.7,325.3"/><polygon points="893.9,310.7 925.8,305.6 927.2,314.7 895.4,319.7"/><polygon points="842.7,379.5 852.9,377.9 857.9,409.6 847.8,411.2"/><polygon points="854.6,377.6 866.5,375.7 871.0,403.8 859.0,405.7"/><polygon points="867.3,375.6 880.1,373.6 883.7,395.9 870.8,397.9"/><polygon points="881.7,373.3 902.0,370.1 904.7,387.2 884.4,390.4"/><polygon points="904.2,369.8 923.5,366.7 927.4,390.9 908.0,393.9"/><polygon points="925.5,366.4 947.8,362.9 950.4,378.8 928.0,382.4"/><polygon points="949.3,362.6 966.5,359.9 971.0,388.3 953.7,391.0"/><polygon points="850.2,426.5 862.1,424.6 867.3,457.4 855.4,459.3"/><polygon points="865.9,433.6 878.7,431.6 882.4,455.0 869.6,457.1"/><polygon points="881.6,431.5 894.0,429.6 897.6,452.6 885.2,454.6"/><polygon points="897.3,432.3 921.3,428.5 924.5,448.4 900.5,452.2"/><polygon points="922.3,420.5 937.2,418.1 941.6,445.7 926.6,448.1"/><polygon points="940.7,425.6 951.7,423.8 954.9,443.6 943.8,445.3"/><polygon points="952.9,427.1 966.3,424.9 968.9,441.4 955.5,443.5"/><polygon points="965.6,418.0 975.4,416.5 979.1,439.8 969.3,441.3"/><polygon points="849.0,419.0 881.7,413.8 884.3,430.6 851.6,435.8"/><polygon points="943.8,404.0 972.7,399.4 975.0,413.5 946.1,418.1"/><polygon points="857.2,471.2 879.7,467.6 884.2,495.7 861.7,499.3"/><polygon points="881.7,467.3 903.7,463.8 907.4,486.6 885.3,490.1"/><polygon points="904.1,463.8 923.6,460.7 926.9,481.7 907.4,484.8"/><polygon points="925.2,460.4 937.5,458.5 940.7,478.7 928.4,480.7"/><polygon points="939.3,458.2 961.1,454.8 964.6,477.1 942.8,480.6"/><polygon points="963.6,454.4 981.0,451.6 983.9,470.3 966.5,473.1"/><polygon points="865.0,520.5 881.5,517.8 885.9,545.5 869.4,548.1"/><polygon points="883.2,513.4 892.8,511.9 897.8,543.6 888.2,545.1"/><polygon points="895.5,517.6 911.3,515.1 915.4,540.8 899.6,543.3"/><polygon points="910.7,510.1 932.9,506.6 937.8,537.3 915.5,540.8"/><polygon points="935.1,518.4 948.1,516.3 951.1,535.2 938.1,537.3"/><polygon points="946.9,505.3 970.9,501.5 975.7,531.3 951.6,535.1"/><polygon points="973.6,513.9 982.9,512.5 985.6,529.7 976.4,531.2"/><polygon points="982.1,505.5 989.3,504.4 993.1,528.5 985.9,529.7"/><polygon points="903.2,496.4 925.3,492.9 926.7,501.6 904.6,505.1"/><polygon points="871.3,560.0 881.1,558.4 883.8,575.7 874.0,577.3"/><polygon points="881.5,558.3 892.0,556.7 896.2,583.6 885.8,585.2"/><polygon points="894.0,556.4 907.3,554.3 912.1,584.1 898.8,586.2"/><polygon points="909.5,553.9 924.1,551.6 928.0,576.1 913.4,578.5"/><polygon points="924.7,551.5 949.2,547.6 953.2,573.4 928.8,577.3"/><polygon points="949.3,547.6 960.8,545.8 965.2,573.9 953.8,575.7"/><polygon points="961.9,545.6 982.9,542.3 986.0,562.2 965.1,565.5"/><polygon points="985.2,541.9 995.0,540.4 997.8,557.9 988.0,559.4"/><polygon points="879.5,612.4 891.6,610.5 896.1,638.9 884.0,640.8"/><polygon points="895.4,618.6 917.5,615.1 920.7,635.0 898.5,638.5"/><polygon points="916.9,609.1 936.9,605.9 941.0,631.8 921.0,635.0"/><polygon points="937.3,605.6 949.4,603.6 953.5,629.8 941.4,631.7"/><polygon points="950.7,609.7 970.2,606.6 973.4,626.7 953.8,629.8"/><polygon points="970.2,601.3 986.2,598.7 990.1,624.0 974.1,626.6"/><polygon points="987.8,595.0 997.2,593.5 1001.7,622.2 992.3,623.7"/><polygon points="998.1,594.9 1003.5,594.1 1007.8,621.2 1002.4,622.1"/><polygon points="877.5,599.5 909.5,594.4 912.2,611.6 880.2,616.6"/><polygon points="973.0,584.4 1001.3,579.9 1003.4,593.5 975.2,597.9"/><polygon points="885.9,652.6 895.8,651.1 899.6,675.1 889.7,676.7"/><polygon points="896.8,650.9 917.5,647.6 922.0,675.6 901.2,678.8"/><polygon points="919.6,647.3 942.0,643.8 945.6,666.6 923.2,670.2"/><polygon points="943.6,643.5 957.6,641.3 962.3,670.9 948.3,673.1"/><polygon points="958.6,641.2 972.4,639.0 975.8,660.6 962.0,662.7"/><polygon points="973.1,638.9 984.9,637.0 989.2,664.0 977.3,665.9"/><polygon points="985.6,636.9 995.0,635.4 998.4,656.9 989.0,658.4"/><polygon points="997.4,635.0 1009.7,633.1 1014.6,664.4 1002.3,666.3"/><polygon points="896.4,719.0 913.3,716.3 916.6,737.6 899.7,740.3"/><polygon points="912.6,710.7 932.6,707.6 936.8,734.4 916.9,737.6"/><polygon points="933.4,704.2 943.4,702.6 948.1,732.7 938.1,734.2"/><polygon points="944.8,701.5 961.2,698.9 966.1,729.8 949.6,732.4"/><polygon points="964.4,701.0 980.3,698.5 984.8,726.9 968.9,729.4"/><polygon points="981.8,697.9 1003.8,694.5 1008.3,723.1 986.4,726.6"/><polygon points="1004.6,693.5 1014.4,692.0 1019.0,721.5 1009.3,723.0"/><polygon points="1016.4,703.2 1020.6,702.6 1023.5,720.8 1019.3,721.4"/><polygon points="892.1,692.2 918.7,688.0 922.1,709.0 895.5,713.2"/><polygon points="997.6,675.5 1015.9,672.6 1018.7,690.6 1000.4,693.5"/><polygon points="950.7,677.6 973.1,674.0 974.8,684.7 952.3,688.3"/><polygon points="923.1,681.8 956.3,676.5 957.8,686.5 924.7,691.7"/><polygon points="901.6,752.2 923.4,748.7 926.3,766.9 904.5,770.4"/><polygon points="923.7,748.7 933.8,747.1 936.8,765.8 926.7,767.4"/><polygon points="935.4,746.8 958.3,743.2 961.2,762.0 938.3,765.6"/><polygon points="958.8,743.1 980.5,739.7 984.2,763.1 962.5,766.5"/><polygon points="981.5,739.5 992.5,737.8 995.6,757.9 984.7,759.7"/><polygon points="995.3,737.4 1006.2,735.6 1009.4,756.1 998.6,757.8"/><polygon points="1008.4,735.3 1025.4,732.6 1030.4,764.5 1013.4,767.2"/><polygon points="911.0,811.3 935.9,807.4 940.1,833.9 915.2,837.9"/><polygon points="936.5,805.3 953.2,802.6 957.7,831.2 941.0,833.8"/><polygon points="956.8,811.6 967.9,809.8 970.9,829.1 959.8,830.8"/><polygon points="969.0,798.3 979.7,796.7 984.4,826.9 973.8,828.6"/><polygon points="982.2,806.4 995.3,804.4 998.5,824.7 985.4,826.8"/><polygon points="997.0,806.0 1022.5,802.0 1025.4,820.5 999.9,824.5"/><polygon points="1025.0,801.2 1035.9,799.4 1038.9,818.3 1027.9,820.1"/><polygon points="907.9,791.7 928.6,788.4 930.8,802.3 910.1,805.6"/><polygon points="1000.2,777.1 1031.6,772.1 1034.7,791.7 1003.3,796.7"/><polygon points="917.0,849.7 939.1,846.2 942.4,866.6 920.2,870.0"/><polygon points="939.3,846.2 948.8,844.7 954.1,878.2 944.6,879.8"/><polygon points="949.5,844.6 963.7,842.4 968.7,873.8 954.4,876.1"/><polygon points="966.5,841.9 980.5,839.7 984.7,866.5 970.7,868.7"/><polygon points="981.6,839.5 995.3,837.4 1000.4,869.9 986.8,872.1"/><polygon points="995.3,837.4 1015.6,834.2 1020.2,863.4 999.9,866.6"/><polygon points="1017.8,833.8 1036.2,830.9 1041.3,862.9 1022.9,865.8"/><polygon points="927.9,918.7 947.6,915.6 950.3,932.3 930.6,935.4"/><polygon points="950.0,913.4 961.8,911.6 964.7,930.0 952.9,931.9"/><polygon points="962.2,908.3 979.5,905.6 983.0,927.2 965.6,929.9"/><polygon points="981.1,906.9 995.1,904.7 998.3,924.7 984.3,927.0"/><polygon points="997.8,907.6 1017.9,904.4 1020.6,921.2 1000.4,924.4"/><polygon points="1019.8,899.3 1031.6,897.4 1035.0,918.9 1023.2,920.8"/><polygon points="1032.1,885.8 1049.2,883.1 1054.3,915.9 1037.3,918.6"/><polygon points="923.3,889.2 955.5,884.1 958.0,900.5 925.9,905.5"/><polygon points="1013.8,874.9 1047.0,869.7 1050.2,889.5 1016.9,894.8"/><polygon points="982.8,877.6 1012.2,873.0 1013.7,882.2 984.2,886.9"/></g><polygon points="450,252 535,240 540,280 456,292" fill="#bfebd0"/><path d="M470 262 L500 258 L504 280" stroke="#a8dcbf" stroke-width="0.8" fill="none"/><polygon points="745,200 790,194 791,206 747,212" fill="#c6eed6"/><polygon points="752,436 766,434 771,475 757,477" fill="#c6eed6"/><g stroke-linecap="butt"><line x1="-51.0" y1="40.0" x2="91.2" y2="940.0" stroke="#b7c7e0" stroke-width="5.800000000000001"/><line x1="88.5" y1="40.0" x2="230.7" y2="940.0" stroke="#b7c7e0" stroke-width="5.800000000000001"/><line x1="367.0" y1="40.0" x2="509.2" y2="940.0" stroke="#b7c7e0" stroke-width="5.800000000000001"/><line x1="505.0" y1="40.0" x2="647.2" y2="940.0" stroke="#b7c7e0" stroke-width="5.800000000000001"/><line x1="646.0" y1="40.0" x2="788.2" y2="940.0" stroke="#b7c7e0" stroke-width="5.800000000000001"/><line x1="783.0" y1="40.0" x2="925.2" y2="940.0" stroke="#b7c7e0" stroke-width="5.800000000000001"/><line x1="922.0" y1="40.0" x2="1064.2" y2="940.0" stroke="#b7c7e0" stroke-width="5.800000000000001"/><line x1="-190.0" y1="40.0" x2="-47.8" y2="940.0" stroke="#b7c7e0" stroke-width="5.800000000000001"/><line x1="-60.0" y1="22.0" x2="900.0" y2="-129.7" stroke="#b7c7e0" stroke-width="5.800000000000001"/><line x1="-60.0" y1="121.5" x2="900.0" y2="-30.2" stroke="#b7c7e0" stroke-width="5.800000000000001"/><line x1="-60.0" y1="221.5" x2="900.0" y2="69.8" stroke="#b7c7e0" stroke-width="5.800000000000001"/><line x1="-60.0" y1="417.0" x2="900.0" y2="265.3" stroke="#b7c7e0" stroke-width="5.800000000000001"/><line x1="-60.0" y1="516.0" x2="900.0" y2="364.3" stroke="#b7c7e0" stroke-width="5.800000000000001"/><line x1="-60.0" y1="610.0" x2="900.0" y2="458.3" stroke="#b7c7e0" stroke-width="5.800000000000001"/><line x1="-60.0" y1="701.0" x2="900.0" y2="549.3" stroke="#b7c7e0" stroke-width="5.800000000000001"/><line x1="-60.0" y1="796.0" x2="900.0" y2="644.3" stroke="#b7c7e0" stroke-width="5.800000000000001"/><line x1="-60.0" y1="898.0" x2="900.0" y2="746.3" stroke="#b7c7e0" stroke-width="5.800000000000001"/><line x1="-60.0" y1="998.0" x2="900.0" y2="846.3" stroke="#b7c7e0" stroke-width="5.800000000000001"/><line x1="-60.0" y1="1098.0" x2="900.0" y2="946.3" stroke="#b7c7e0" stroke-width="5.800000000000001"/><line x1="-60.0" y1="323.0" x2="600.0" y2="218.7" stroke="#b7c7e0" stroke-width="7.6"/><line x1="600.0" y1="213.7" x2="900.0" y2="166.3" stroke="#b7c7e0" stroke-width="6.6"/><line x1="600.0" y1="226.7" x2="900.0" y2="179.3" stroke="#b7c7e0" stroke-width="6.6"/><line x1="585.1" y1="66.0" x2="593.4" y2="118.0" stroke="#bfcde3" stroke-width="4.6"/><line x1="300.0" y1="113.1" x2="372.0" y2="101.8" stroke="#bfcde3" stroke-width="4.6"/><line x1="605.4" y1="232.0" x2="621.5" y2="334.0" stroke="#bfcde3" stroke-width="4.6"/><line x1="688.0" y1="263.8" x2="830.0" y2="241.4" stroke="#bfcde3" stroke-width="4.6"/><line x1="600.0" y1="643.7" x2="685.0" y2="630.3" stroke="#bfcde3" stroke-width="4.6"/><line x1="759.5" y1="290.0" x2="775.3" y2="390.0" stroke="#bfcde3" stroke-width="4.6"/><line x1="-51.0" y1="40.0" x2="91.2" y2="940.0" stroke="#dce6f5" stroke-width="4.2"/><line x1="88.5" y1="40.0" x2="230.7" y2="940.0" stroke="#dce6f5" stroke-width="4.2"/><line x1="367.0" y1="40.0" x2="509.2" y2="940.0" stroke="#dce6f5" stroke-width="4.2"/><line x1="505.0" y1="40.0" x2="647.2" y2="940.0" stroke="#dce6f5" stroke-width="4.2"/><line x1="646.0" y1="40.0" x2="788.2" y2="940.0" stroke="#dce6f5" stroke-width="4.2"/><line x1="783.0" y1="40.0" x2="925.2" y2="940.0" stroke="#dce6f5" stroke-width="4.2"/><line x1="922.0" y1="40.0" x2="1064.2" y2="940.0" stroke="#dce6f5" stroke-width="4.2"/><line x1="-190.0" y1="40.0" x2="-47.8" y2="940.0" stroke="#dce6f5" stroke-width="4.2"/><line x1="-60.0" y1="22.0" x2="900.0" y2="-129.7" stroke="#dce6f5" stroke-width="4.2"/><line x1="-60.0" y1="121.5" x2="900.0" y2="-30.2" stroke="#dce6f5" stroke-width="4.2"/><line x1="-60.0" y1="221.5" x2="900.0" y2="69.8" stroke="#dce6f5" stroke-width="4.2"/><line x1="-60.0" y1="417.0" x2="900.0" y2="265.3" stroke="#dce6f5" stroke-width="4.2"/><line x1="-60.0" y1="516.0" x2="900.0" y2="364.3" stroke="#dce6f5" stroke-width="4.2"/><line x1="-60.0" y1="610.0" x2="900.0" y2="458.3" stroke="#dce6f5" stroke-width="4.2"/><line x1="-60.0" y1="701.0" x2="900.0" y2="549.3" stroke="#dce6f5" stroke-width="4.2"/><line x1="-60.0" y1="796.0" x2="900.0" y2="644.3" stroke="#dce6f5" stroke-width="4.2"/><line x1="-60.0" y1="898.0" x2="900.0" y2="746.3" stroke="#dce6f5" stroke-width="4.2"/><line x1="-60.0" y1="998.0" x2="900.0" y2="846.3" stroke="#dce6f5" stroke-width="4.2"/><line x1="-60.0" y1="1098.0" x2="900.0" y2="946.3" stroke="#dce6f5" stroke-width="4.2"/><line x1="-60.0" y1="323.0" x2="600.0" y2="218.7" stroke="#dce6f5" stroke-width="6"/><line x1="600.0" y1="213.7" x2="900.0" y2="166.3" stroke="#dce6f5" stroke-width="5"/><line x1="600.0" y1="226.7" x2="900.0" y2="179.3" stroke="#dce6f5" stroke-width="5"/><line x1="585.1" y1="66.0" x2="593.4" y2="118.0" stroke="#dce5f3" stroke-width="3"/><line x1="300.0" y1="113.1" x2="372.0" y2="101.8" stroke="#dce5f3" stroke-width="3"/><line x1="605.4" y1="232.0" x2="621.5" y2="334.0" stroke="#dce5f3" stroke-width="3"/><line x1="688.0" y1="263.8" x2="830.0" y2="241.4" stroke="#dce5f3" stroke-width="3"/><line x1="600.0" y1="643.7" x2="685.0" y2="630.3" stroke="#dce5f3" stroke-width="3"/><line x1="759.5" y1="290.0" x2="775.3" y2="390.0" stroke="#dce5f3" stroke-width="3"/></g><line x1="217.0" y1="40" x2="359.2" y2="940" stroke="#8fa5cb" stroke-width="10"/><line x1="233.0" y1="40" x2="375.2" y2="940" stroke="#8fa5cb" stroke-width="10"/><line x1="217.0" y1="40" x2="359.2" y2="940" stroke="#b6c6e0" stroke-width="8"/><line x1="233.0" y1="40" x2="375.2" y2="940" stroke="#b6c6e0" stroke-width="8"/><line x1="225.0" y1="40" x2="367.2" y2="940" stroke="#e7edf6" stroke-width="5"/><polygon points="-2,601 37,596 63,780 -2,789" fill="#b5eacd"/><path d="M0 612 Q20 615 36 598 M0 640 Q12 620 18 617 M18 617 Q10 660 3 690 M0 680 Q25 672 45 675" stroke="#9fd9b8" stroke-width="0.7" fill="none"/><polygon points="7,701 42,698 44,725 9,728" fill="#d8f3e4"/><polygon points="8,730 28,728 29,738 9,740" fill="#d8f3e4"/><text x="232.0" y="79.2" transform="rotate(-8.98 232.0 75.4)" text-anchor="middle" fill="#4a5873" stroke="#fff" stroke-width="2.4" stroke-linejoin="round" paint-order="stroke">Green St</text><text x="333.0" y="108.7" transform="rotate(-8.98 333.0 104.9)" text-anchor="middle" fill="#4a5873" stroke="#fff" stroke-width="2.4" stroke-linejoin="round" paint-order="stroke">Bonita St</text><text x="182.0" y="187.1" transform="rotate(-8.98 182.0 183.3)" text-anchor="middle" fill="#4a5873" stroke="#fff" stroke-width="2.4" stroke-linejoin="round" paint-order="stroke">Vallejo St</text><text x="452.0" y="144.4" transform="rotate(-8.98 452.0 140.6)" text-anchor="middle" fill="#4a5873" stroke="#fff" stroke-width="2.4" stroke-linejoin="round" paint-order="stroke">Vallejo St</text><text x="520.0" y="133.7" transform="rotate(-8.98 520.0 129.9)" text-anchor="middle" fill="#4a5873" stroke="#fff" stroke-width="2.4" stroke-linejoin="round" paint-order="stroke">Vallejo St</text><text x="55.0" y="308.7" transform="rotate(-8.98 55.0 304.9)" text-anchor="middle" fill="#4a5873" stroke="#fff" stroke-width="2.4" stroke-linejoin="round" paint-order="stroke">Broadway</text><text x="492.0" y="239.6" transform="rotate(-8.98 492.0 235.8)" text-anchor="middle" fill="#4a5873" stroke="#fff" stroke-width="2.4" stroke-linejoin="round" paint-order="stroke">Broadway</text><text x="585.0" y="218.9" transform="rotate(-8.98 585.0 215.1)" text-anchor="middle" fill="#4a5873" stroke="#fff" stroke-width="2.4" stroke-linejoin="round" paint-order="stroke">Broadway</text><text x="737.0" y="213.9" transform="rotate(-8.98 737.0 210.1)" text-anchor="middle" fill="#4a5873" stroke="#fff" stroke-width="2.4" stroke-linejoin="round" paint-order="stroke">Broadway</text><text x="750.0" y="257.8" transform="rotate(-8.98 750.0 254.0)" text-anchor="middle" fill="#4a5873" stroke="#fff" stroke-width="2.4" stroke-linejoin="round" paint-order="stroke">Lynch St</text><text x="280.0" y="367.1" transform="rotate(-8.98 280.0 363.3)" text-anchor="middle" fill="#4a5873" stroke="#fff" stroke-width="2.4" stroke-linejoin="round" paint-order="stroke">Pacific Ave</text><text x="551.0" y="324.3" transform="rotate(-8.98 551.0 320.5)" text-anchor="middle" fill="#4a5873" stroke="#fff" stroke-width="2.4" stroke-linejoin="round" paint-order="stroke">Pacific Ave</text><text x="295.0" y="463.7" transform="rotate(-8.98 295.0 459.9)" text-anchor="middle" fill="#4a5873" stroke="#fff" stroke-width="2.4" stroke-linejoin="round" paint-order="stroke">Jackson St</text><text x="770.0" y="388.7" transform="rotate(-8.98 770.0 384.9)" text-anchor="middle" fill="#4a5873" stroke="#fff" stroke-width="2.4" stroke-linejoin="round" paint-order="stroke">Jackson St</text><text x="580.0" y="512.7" transform="rotate(-8.98 580.0 508.9)" text-anchor="middle" fill="#4a5873" stroke="#fff" stroke-width="2.4" stroke-linejoin="round" paint-order="stroke">Washington St</text><text x="188.0" y="665.6" transform="rotate(-8.98 188.0 661.8)" text-anchor="middle" fill="#4a5873" stroke="#fff" stroke-width="2.4" stroke-linejoin="round" paint-order="stroke">Clay St</text><text x="660.0" y="591.1" transform="rotate(-8.98 660.0 587.3)" text-anchor="middle" fill="#4a5873" stroke="#fff" stroke-width="2.4" stroke-linejoin="round" paint-order="stroke">Clay St</text><text x="703.0" y="628.3" transform="rotate(-8.98 703.0 624.5)" text-anchor="middle" fill="#4a5873" stroke="#fff" stroke-width="2.4" stroke-linejoin="round" paint-order="stroke">Troy Aly</text><text x="155.0" y="765.8" transform="rotate(-8.98 155.0 762.0)" text-anchor="middle" fill="#4a5873" stroke="#fff" stroke-width="2.4" stroke-linejoin="round" paint-order="stroke">Sacramento St</text><text x="710.0" y="678.2" transform="rotate(-8.98 710.0 674.4)" text-anchor="middle" fill="#4a5873" stroke="#fff" stroke-width="2.4" stroke-linejoin="round" paint-order="stroke">Sacramento St</text><text x="152.0" y="868.3" transform="rotate(-8.98 152.0 864.5)" text-anchor="middle" fill="#4a5873" stroke="#fff" stroke-width="2.4" stroke-linejoin="round" paint-order="stroke">California St</text><text x="812.0" y="764.0" transform="rotate(-8.98 812.0 760.2)" text-anchor="middle" fill="#4a5873" stroke="#fff" stroke-width="2.4" stroke-linejoin="round" paint-order="stroke">Califo</text><text x="740.0" y="875.4" transform="rotate(-8.98 740.0 871.6)" text-anchor="middle" fill="#4a5873" stroke="#fff" stroke-width="2.4" stroke-linejoin="round" paint-order="stroke">Pine St</text><text x="10.0" y="602.8" transform="rotate(-8.98 10.0 599.0)" text-anchor="middle" fill="#4a5873" stroke="#fff" stroke-width="2.4" stroke-linejoin="round" paint-order="stroke">on St</text><text x="260.0" y="315.8" transform="rotate(81.02 260.0 312.0)" text-anchor="middle" fill="#4a5873" stroke="#fff" stroke-width="2.4" stroke-linejoin="round" paint-order="stroke">Van Ness Ave</text><text x="266.0" y="252.8" transform="rotate(81.02 266.0 249.0)" text-anchor="middle" fill="#4a5873" stroke="#fff" stroke-width="2.4" stroke-linejoin="round" paint-order="stroke">Van Ness Ave</text><text x="325.1" y="727.8" transform="rotate(81.02 325.1 724.0)" text-anchor="middle" fill="#4a5873" stroke="#fff" stroke-width="2.4" stroke-linejoin="round" paint-order="stroke">Van Ness Ave</text><text x="340.6" y="724.8" transform="rotate(81.02 340.6 721.0)" text-anchor="middle" fill="#4a5873" stroke="#fff" stroke-width="2.4" stroke-linejoin="round" paint-order="stroke">Van Ness Ave</text><text x="147.0" y="413.8" transform="rotate(81.02 147.0 410.0)" text-anchor="middle" fill="#4a5873" stroke="#fff" stroke-width="2.4" stroke-linejoin="round" paint-order="stroke">Franklin St</text><text x="217.0" y="856.8" transform="rotate(81.02 217.0 853.0)" text-anchor="middle" fill="#4a5873" stroke="#fff" stroke-width="2.4" stroke-linejoin="round" paint-order="stroke">Franklin St</text><text x="20.1" y="493.8" transform="rotate(81.02 20.1 490.0)" text-anchor="middle" fill="#4a5873" stroke="#fff" stroke-width="2.4" stroke-linejoin="round" paint-order="stroke">Gough St</text><text x="563.5" y="413.8" transform="rotate(81.02 563.5 410.0)" text-anchor="middle" fill="#4a5873" stroke="#fff" stroke-width="2.4" stroke-linejoin="round" paint-order="stroke">Larkin St</text><text x="601.4" y="653.8" transform="rotate(81.02 601.4 650.0)" text-anchor="middle" fill="#4a5873" stroke="#fff" stroke-width="2.4" stroke-linejoin="round" paint-order="stroke">Larkin St</text><text x="660.2" y="133.8" transform="rotate(81.02 660.2 130.0)" text-anchor="middle" fill="#4a5873" stroke="#fff" stroke-width="2.4" stroke-linejoin="round" paint-order="stroke">Hyde St</text><text x="712.7" y="465.8" transform="rotate(81.02 712.7 462.0)" text-anchor="middle" fill="#4a5873" stroke="#fff" stroke-width="2.4" stroke-linejoin="round" paint-order="stroke">Hyde St</text><text x="607.4" y="273.8" transform="rotate(81.02 607.4 270.0)" text-anchor="middle" fill="#4a5873" stroke="#fff" stroke-width="2.4" stroke-linejoin="round" paint-order="stroke">Morrell St</text><text x="584.3" y="89.8" transform="rotate(81.02 584.3 86.0)" text-anchor="middle" fill="#4a5873" stroke="#fff" stroke-width="2.4" stroke-linejoin="round" paint-order="stroke">White St</text><g><path d="M388.9 80.8 A7.8 7.8 0 1 1 401.1 80.8 Q397.3 85.0 395.0 88.1 Q392.7 85.0 388.9 80.8 Z" fill="#fff" stroke="#fff" stroke-width="2.5" opacity="0.9"/><path d="M388.9 80.8 A7.8 7.8 0 1 1 401.1 80.8 Q397.3 85.0 395.0 88.1 Q392.7 85.0 388.9 80.8 Z" fill="#e0559c"/><path d="M391.0 80.0 L397.0 74.0" stroke="#fff" stroke-width="2"/><circle cx="397.5" cy="73.5" r="2.5" fill="none" stroke="#fff" stroke-width="1.5"/></g><g><path d="M216.9 154.8 A7.8 7.8 0 1 1 229.1 154.8 Q225.3 159.0 223.0 162.1 Q220.7 159.0 216.9 154.8 Z" fill="#fff" stroke="#fff" stroke-width="2.5" opacity="0.9"/><path d="M216.9 154.8 A7.8 7.8 0 1 1 229.1 154.8 Q225.3 159.0 223.0 162.1 Q220.7 159.0 216.9 154.8 Z" fill="#e0559c"/><path d="M218.5 146.5 L220.0 146.5 L221.2 151.5 L226.5 151.5 L227.3 148.0 L220.4 148.0" stroke="#fff" stroke-width="1.5" fill="none"/><circle cx="221.8" cy="153.5" r="1" fill="#fff"/><circle cx="225.8" cy="153.5" r="1" fill="#fff"/><text x="223.0" y="111.6" text-anchor="middle" fill="#fff" stroke="#fff" stroke-width="2.6" stroke-linejoin="round" opacity="0.85">Van Ness &amp;</text><text x="223.0" y="111.6" text-anchor="middle" fill="#c85a92" stroke="#c85a92" stroke-width="0.35">Van Ness &amp;</text><text x="223.0" y="124.8" text-anchor="middle" fill="#fff" stroke="#fff" stroke-width="2.6" stroke-linejoin="round" opacity="0.85">Vallejo</text><text x="223.0" y="124.8" text-anchor="middle" fill="#c85a92" stroke="#c85a92" stroke-width="0.35">Vallejo</text><text x="223.0" y="138.0" text-anchor="middle" fill="#fff" stroke="#fff" stroke-width="2.6" stroke-linejoin="round" opacity="0.85">Market</text><text x="223.0" y="138.0" text-anchor="middle" fill="#c85a92" stroke="#c85a92" stroke-width="0.35">Market</text></g><g><path d="M401.9 200.8 A7.8 7.8 0 1 1 414.1 200.8 Q410.3 205.0 408.0 208.1 Q405.7 205.0 401.9 200.8 Z" fill="#fff" stroke="#fff" stroke-width="2.5" opacity="0.9"/><path d="M401.9 200.8 A7.8 7.8 0 1 1 414.1 200.8 Q410.3 205.0 408.0 208.1 Q405.7 205.0 401.9 200.8 Z" fill="#e0559c"/><rect x="404.0" y="194.0" width="8" height="6.5" rx="1" fill="#fff"/><path d="M406.0 194.0 Q408.0 190.0 410.0 194.0" stroke="#fff" stroke-width="1.2" fill="none"/><text x="408.0" y="184.0" text-anchor="middle" fill="#fff" stroke="#fff" stroke-width="2.6" stroke-linejoin="round" opacity="0.85">Walgreens</text><text x="408.0" y="184.0" text-anchor="middle" fill="#c85a92" stroke="#c85a92" stroke-width="0.35">Walgreens</text></g><g><path d="M482.9 354.8 A7.8 7.8 0 1 1 495.1 354.8 Q491.3 359.0 489.0 362.1 Q486.7 359.0 482.9 354.8 Z" fill="#fff" stroke="#fff" stroke-width="2.5" opacity="0.9"/><path d="M482.9 354.8 A7.8 7.8 0 1 1 495.1 354.8 Q491.3 359.0 489.0 362.1 Q486.7 359.0 482.9 354.8 Z" fill="#e0559c"/><rect x="485.0" y="348.0" width="8" height="6.5" rx="1" fill="#fff"/><path d="M487.0 348.0 Q489.0 344.0 491.0 348.0" stroke="#fff" stroke-width="1.2" fill="none"/><text x="489.0" y="324.8" text-anchor="middle" fill="#fff" stroke="#fff" stroke-width="2.6" stroke-linejoin="round" opacity="0.85">Stuff by</text><text x="489.0" y="324.8" text-anchor="middle" fill="#c85a92" stroke="#c85a92" stroke-width="0.35">Stuff by</text><text x="489.0" y="338.0" text-anchor="middle" fill="#fff" stroke="#fff" stroke-width="2.6" stroke-linejoin="round" opacity="0.85">Luxe</text><text x="489.0" y="338.0" text-anchor="middle" fill="#c85a92" stroke="#c85a92" stroke-width="0.35">Luxe</text></g><g><path d="M82.9 409.8 A7.8 7.8 0 1 1 95.1 409.8 Q91.3 414.0 89.0 417.1 Q86.7 414.0 82.9 409.8 Z" fill="#fff" stroke="#fff" stroke-width="2.5" opacity="0.9"/><path d="M82.9 409.8 A7.8 7.8 0 1 1 95.1 409.8 Q91.3 414.0 89.0 417.1 Q86.7 414.0 82.9 409.8 Z" fill="#e0559c"/><path d="M84.5 401.5 L86.0 401.5 L87.2 406.5 L92.5 406.5 L93.3 403.0 L86.4 403.0" stroke="#fff" stroke-width="1.5" fill="none"/><circle cx="87.8" cy="408.5" r="1" fill="#fff"/><circle cx="91.8" cy="408.5" r="1" fill="#fff"/><text x="89.0" y="379.8" text-anchor="middle" fill="#fff" stroke="#fff" stroke-width="2.6" stroke-linejoin="round" opacity="0.85">Avenue Fine</text><text x="89.0" y="379.8" text-anchor="middle" fill="#c85a92" stroke="#c85a92" stroke-width="0.35">Avenue Fine</text><text x="89.0" y="393.0" text-anchor="middle" fill="#fff" stroke="#fff" stroke-width="2.6" stroke-linejoin="round" opacity="0.85">Food Market</text><text x="89.0" y="393.0" text-anchor="middle" fill="#c85a92" stroke="#c85a92" stroke-width="0.35">Food Market</text></g><g><path d="M628.9 692.8 A7.8 7.8 0 1 1 641.1 692.8 Q637.3 697.0 635.0 700.1 Q632.7 697.0 628.9 692.8 Z" fill="#fff" stroke="#fff" stroke-width="2.5" opacity="0.9"/><path d="M628.9 692.8 A7.8 7.8 0 1 1 641.1 692.8 Q637.3 697.0 635.0 700.1 Q632.7 697.0 628.9 692.8 Z" fill="#e0559c"/><path d="M630.5 684.5 L632.0 684.5 L633.2 689.5 L638.5 689.5 L639.3 686.0 L632.4 686.0" stroke="#fff" stroke-width="1.5" fill="none"/><circle cx="633.8" cy="691.5" r="1" fill="#fff"/><circle cx="637.8" cy="691.5" r="1" fill="#fff"/><text x="635.0" y="649.6" text-anchor="middle" fill="#fff" stroke="#fff" stroke-width="2.6" stroke-linejoin="round" opacity="0.85">Larkin</text><text x="635.0" y="649.6" text-anchor="middle" fill="#c85a92" stroke="#c85a92" stroke-width="0.35">Larkin</text><text x="635.0" y="662.8" text-anchor="middle" fill="#fff" stroke="#fff" stroke-width="2.6" stroke-linejoin="round" opacity="0.85">Corner</text><text x="635.0" y="662.8" text-anchor="middle" fill="#c85a92" stroke="#c85a92" stroke-width="0.35">Corner</text><text x="635.0" y="676.0" text-anchor="middle" fill="#fff" stroke="#fff" stroke-width="2.6" stroke-linejoin="round" opacity="0.85">Market</text><text x="635.0" y="676.0" text-anchor="middle" fill="#c85a92" stroke="#c85a92" stroke-width="0.35">Market</text></g><g><path d="M461.9 748.8 A7.8 7.8 0 1 1 474.1 748.8 Q470.3 753.0 468.0 756.1 Q465.7 753.0 461.9 748.8 Z" fill="#fff" stroke="#fff" stroke-width="2.5" opacity="0.9"/><path d="M461.9 748.8 A7.8 7.8 0 1 1 474.1 748.8 Q470.3 753.0 468.0 756.1 Q465.7 753.0 461.9 748.8 Z" fill="#e0559c"/><path d="M464.0 748.0 L470.0 742.0" stroke="#fff" stroke-width="2"/><circle cx="470.5" cy="741.5" r="2.5" fill="none" stroke="#fff" stroke-width="1.5"/><text x="479.0" y="748.0" text-anchor="start" fill="#fff" stroke="#fff" stroke-width="2.6" stroke-linejoin="round" opacity="0.85">Ace Hardware</text><text x="479.0" y="748.0" text-anchor="start" fill="#c85a92" stroke="#c85a92" stroke-width="0.35">Ace Hardware</text></g><g><path d="M272.9 867.8 A7.8 7.8 0 1 1 285.1 867.8 Q281.3 872.0 279.0 875.1 Q276.7 872.0 272.9 867.8 Z" fill="#fff" stroke="#fff" stroke-width="2.5" opacity="0.9"/><path d="M272.9 867.8 A7.8 7.8 0 1 1 285.1 867.8 Q281.3 872.0 279.0 875.1 Q276.7 872.0 272.9 867.8 Z" fill="#e0559c"/><path d="M274.5 859.5 L276.0 859.5 L277.2 864.5 L282.5 864.5 L283.3 861.0 L276.4 861.0" stroke="#fff" stroke-width="1.5" fill="none"/><circle cx="277.8" cy="866.5" r="1" fill="#fff"/><circle cx="281.8" cy="866.5" r="1" fill="#fff"/><text x="279.0" y="837.8" text-anchor="middle" fill="#fff" stroke="#fff" stroke-width="2.6" stroke-linejoin="round" opacity="0.85">Whole</text><text x="279.0" y="837.8" text-anchor="middle" fill="#c85a92" stroke="#c85a92" stroke-width="0.35">Whole</text><text x="279.0" y="851.0" text-anchor="middle" fill="#fff" stroke="#fff" stroke-width="2.6" stroke-linejoin="round" opacity="0.85">Foods</text><text x="279.0" y="851.0" text-anchor="middle" fill="#c85a92" stroke="#c85a92" stroke-width="0.35">Foods</text></g><g><path d="M709.9 804.8 A7.8 7.8 0 1 1 722.1 804.8 Q718.3 809.0 716.0 812.1 Q713.7 809.0 709.9 804.8 Z" fill="#fff" stroke="#fff" stroke-width="2.5" opacity="0.9"/><path d="M709.9 804.8 A7.8 7.8 0 1 1 722.1 804.8 Q718.3 809.0 716.0 812.1 Q713.7 809.0 709.9 804.8 Z" fill="#e5484d"/><path d="M716.0 796.0 L716.0 804.0 M712.0 800.0 L720.0 800.0" stroke="#fff" stroke-width="2"/><text x="727.0" y="804.0" text-anchor="start" fill="#fff" stroke="#fff" stroke-width="2.6" stroke-linejoin="round" opacity="0.85">CVS/pharmacy</text><text x="727.0" y="804.0" text-anchor="start" fill="#cc5560" stroke="#cc5560" stroke-width="0.35">CVS/pharmacy</text></g><g><path d="M680.9 903.8 A7.8 7.8 0 1 1 693.1 903.8 Q689.3 908.0 687.0 911.1 Q684.7 908.0 680.9 903.8 Z" fill="#fff" stroke="#fff" stroke-width="2.5" opacity="0.9"/><path d="M680.9 903.8 A7.8 7.8 0 1 1 693.1 903.8 Q689.3 908.0 687.0 911.1 Q684.7 908.0 680.9 903.8 Z" fill="#e5484d"/><path d="M687.0 895.0 L687.0 903.0 M683.0 899.0 L691.0 899.0" stroke="#fff" stroke-width="2"/><text x="687.0" y="873.8" text-anchor="middle" fill="#fff" stroke="#fff" stroke-width="2.6" stroke-linejoin="round" opacity="0.85">City View</text><text x="687.0" y="873.8" text-anchor="middle" fill="#cc5560" stroke="#cc5560" stroke-width="0.35">City View</text><text x="687.0" y="887.0" text-anchor="middle" fill="#fff" stroke="#fff" stroke-width="2.6" stroke-linejoin="round" opacity="0.85">Post Acute</text><text x="687.0" y="887.0" text-anchor="middle" fill="#cc5560" stroke="#cc5560" stroke-width="0.35">Post Acute</text></g><g><path d="M394.9 114.8 A7.8 7.8 0 1 1 407.1 114.8 Q403.3 119.0 401.0 122.1 Q398.7 119.0 394.9 114.8 Z" fill="#fff" stroke="#fff" stroke-width="2.5" opacity="0.9"/><path d="M394.9 114.8 A7.8 7.8 0 1 1 407.1 114.8 Q403.3 119.0 401.0 122.1 Q398.7 119.0 394.9 114.8 Z" fill="#f5a24b"/><rect x="397.0" y="107.0" width="8" height="7" rx="1" fill="#fff"/><path d="M401.0 107.0 L401.0 114.0" stroke="gift" stroke-width="0"/><text x="412.0" y="114.0" text-anchor="start" fill="#fff" stroke="#fff" stroke-width="2.6" stroke-linejoin="round" opacity="0.85">Kinjo</text><text x="412.0" y="114.0" text-anchor="start" fill="#c4965f" stroke="#c4965f" stroke-width="0.35">Kinjo</text></g><g><path d="M356.9 170.8 A7.8 7.8 0 1 1 369.1 170.8 Q365.3 175.0 363.0 178.1 Q360.7 175.0 356.9 170.8 Z" fill="#fff" stroke="#fff" stroke-width="2.5" opacity="0.9"/><path d="M356.9 170.8 A7.8 7.8 0 1 1 369.1 170.8 Q365.3 175.0 363.0 178.1 Q360.7 175.0 356.9 170.8 Z" fill="#f5a24b"/><rect x="359.0" y="163.0" width="8" height="7" rx="1" fill="#fff"/><path d="M363.0 163.0 L363.0 170.0" stroke="gift" stroke-width="0"/><text x="352.0" y="170.0" text-anchor="end" fill="#fff" stroke="#fff" stroke-width="2.6" stroke-linejoin="round" opacity="0.85">Buccaneer</text><text x="352.0" y="170.0" text-anchor="end" fill="#c4965f" stroke="#c4965f" stroke-width="0.35">Buccaneer</text></g><g><path d="M287.9 337.8 A7.8 7.8 0 1 1 300.1 337.8 Q296.3 342.0 294.0 345.1 Q291.7 342.0 287.9 337.8 Z" fill="#fff" stroke="#fff" stroke-width="2.5" opacity="0.9"/><path d="M287.9 337.8 A7.8 7.8 0 1 1 300.1 337.8 Q296.3 342.0 294.0 345.1 Q291.7 342.0 287.9 337.8 Z" fill="#f5a24b"/><path d="M291.5 328.0 L291.5 338.0 M296.5 328.0 L296.5 338.0" stroke="#fff" stroke-width="1.6"/><text x="294.0" y="321.0" text-anchor="middle" fill="#fff" stroke="#fff" stroke-width="2.6" stroke-linejoin="round" opacity="0.85">Harris</text><text x="294.0" y="321.0" text-anchor="middle" fill="#c4965f" stroke="#c4965f" stroke-width="0.35">Harris</text></g><g><path d="M441.9 361.8 A7.8 7.8 0 1 1 454.1 361.8 Q450.3 366.0 448.0 369.1 Q445.7 366.0 441.9 361.8 Z" fill="#fff" stroke="#fff" stroke-width="2.5" opacity="0.9"/><path d="M441.9 361.8 A7.8 7.8 0 1 1 454.1 361.8 Q450.3 366.0 448.0 369.1 Q445.7 366.0 441.9 361.8 Z" fill="#f5a24b"/><rect x="444.0" y="354.0" width="8" height="7" rx="1" fill="#fff"/><path d="M448.0 354.0 L448.0 361.0" stroke="gift" stroke-width="0"/><text x="423.0" y="354.0" text-anchor="middle" fill="#fff" stroke="#fff" stroke-width="2.6" stroke-linejoin="round" opacity="0.85">Bowl'd</text><text x="423.0" y="354.0" text-anchor="middle" fill="#c4965f" stroke="#c4965f" stroke-width="0.35">Bowl'd</text><text x="423.0" y="367.2" text-anchor="middle" fill="#fff" stroke="#fff" stroke-width="2.6" stroke-linejoin="round" opacity="0.85">Acai</text><text x="423.0" y="367.2" text-anchor="middle" fill="#c4965f" stroke="#c4965f" stroke-width="0.35">Acai</text></g><g><path d="M460.9 481.8 A7.8 7.8 0 1 1 473.1 481.8 Q469.3 486.0 467.0 489.1 Q464.7 486.0 460.9 481.8 Z" fill="#fff" stroke="#fff" stroke-width="2.5" opacity="0.9"/><path d="M460.9 481.8 A7.8 7.8 0 1 1 473.1 481.8 Q469.3 486.0 467.0 489.1 Q464.7 486.0 460.9 481.8 Z" fill="#f5a24b"/><path d="M464.5 472.0 L464.5 482.0 M469.5 472.0 L469.5 482.0" stroke="#fff" stroke-width="1.6"/><text x="467.0" y="451.8" text-anchor="middle" fill="#fff" stroke="#fff" stroke-width="2.6" stroke-linejoin="round" opacity="0.85">Wing Lee</text><text x="467.0" y="451.8" text-anchor="middle" fill="#c4965f" stroke="#c4965f" stroke-width="0.35">Wing Lee</text><text x="467.0" y="465.0" text-anchor="middle" fill="#fff" stroke="#fff" stroke-width="2.6" stroke-linejoin="round" opacity="0.85">Restaurant</text><text x="467.0" y="465.0" text-anchor="middle" fill="#c4965f" stroke="#c4965f" stroke-width="0.35">Restaurant</text></g><g><path d="M331.9 510.8 A7.8 7.8 0 1 1 344.1 510.8 Q340.3 515.0 338.0 518.1 Q335.7 515.0 331.9 510.8 Z" fill="#fff" stroke="#fff" stroke-width="2.5" opacity="0.9"/><path d="M331.9 510.8 A7.8 7.8 0 1 1 344.1 510.8 Q340.3 515.0 338.0 518.1 Q335.7 515.0 331.9 510.8 Z" fill="#f5a24b"/><path d="M335.5 501.0 L335.5 511.0 M340.5 501.0 L340.5 511.0" stroke="#fff" stroke-width="1.6"/><text x="338.0" y="494.0" text-anchor="middle" fill="#fff" stroke="#fff" stroke-width="2.6" stroke-linejoin="round" opacity="0.85">Giftly</text><text x="338.0" y="494.0" text-anchor="middle" fill="#c4965f" stroke="#c4965f" stroke-width="0.35">Giftly</text></g><g><path d="M463.9 536.8 A7.8 7.8 0 1 1 476.1 536.8 Q472.3 541.0 470.0 544.1 Q467.7 541.0 463.9 536.8 Z" fill="#fff" stroke="#fff" stroke-width="2.5" opacity="0.9"/><path d="M463.9 536.8 A7.8 7.8 0 1 1 476.1 536.8 Q472.3 541.0 470.0 544.1 Q467.7 541.0 463.9 536.8 Z" fill="#f5a24b"/><path d="M467.5 527.0 L467.5 537.0 M472.5 527.0 L472.5 537.0" stroke="#fff" stroke-width="1.6"/><text x="481.0" y="536.0" text-anchor="start" fill="#fff" stroke="#fff" stroke-width="2.6" stroke-linejoin="round" opacity="0.85">Sorella</text><text x="481.0" y="536.0" text-anchor="start" fill="#c4965f" stroke="#c4965f" stroke-width="0.35">Sorella</text></g><g><path d="M418.9 578.8 A7.8 7.8 0 1 1 431.1 578.8 Q427.3 583.0 425.0 586.1 Q422.7 583.0 418.9 578.8 Z" fill="#fff" stroke="#fff" stroke-width="2.5" opacity="0.9"/><path d="M418.9 578.8 A7.8 7.8 0 1 1 431.1 578.8 Q427.3 583.0 425.0 586.1 Q422.7 583.0 418.9 578.8 Z" fill="#f5a24b"/><path d="M422.5 569.0 L422.5 579.0 M427.5 569.0 L427.5 579.0" stroke="#fff" stroke-width="1.6"/><text x="425.0" y="548.8" text-anchor="middle" fill="#fff" stroke="#fff" stroke-width="2.6" stroke-linejoin="round" opacity="0.85">El Capitan</text><text x="425.0" y="548.8" text-anchor="middle" fill="#c4965f" stroke="#c4965f" stroke-width="0.35">El Capitan</text><text x="425.0" y="562.0" text-anchor="middle" fill="#fff" stroke="#fff" stroke-width="2.6" stroke-linejoin="round" opacity="0.85">Taqueria</text><text x="425.0" y="562.0" text-anchor="middle" fill="#c4965f" stroke="#c4965f" stroke-width="0.35">Taqueria</text></g><g><path d="M433.9 632.8 A7.8 7.8 0 1 1 446.1 632.8 Q442.3 637.0 440.0 640.1 Q437.7 637.0 433.9 632.8 Z" fill="#fff" stroke="#fff" stroke-width="2.5" opacity="0.9"/><path d="M433.9 632.8 A7.8 7.8 0 1 1 446.1 632.8 Q442.3 637.0 440.0 640.1 Q437.7 637.0 433.9 632.8 Z" fill="#f5a24b"/><rect x="436.0" y="625.0" width="8" height="7" rx="1" fill="#fff"/><path d="M440.0 625.0 L440.0 632.0" stroke="gift" stroke-width="0"/><text x="415.0" y="625.0" text-anchor="middle" fill="#fff" stroke="#fff" stroke-width="2.6" stroke-linejoin="round" opacity="0.85">Harper</text><text x="415.0" y="625.0" text-anchor="middle" fill="#c4965f" stroke="#c4965f" stroke-width="0.35">Harper</text><text x="415.0" y="638.2" text-anchor="middle" fill="#fff" stroke="#fff" stroke-width="2.6" stroke-linejoin="round" opacity="0.85">&amp; Rye</text><text x="415.0" y="638.2" text-anchor="middle" fill="#c4965f" stroke="#c4965f" stroke-width="0.35">&amp; Rye</text></g><g><path d="M549.9 628.8 A7.8 7.8 0 1 1 562.1 628.8 Q558.3 633.0 556.0 636.1 Q553.7 633.0 549.9 628.8 Z" fill="#fff" stroke="#fff" stroke-width="2.5" opacity="0.9"/><path d="M549.9 628.8 A7.8 7.8 0 1 1 562.1 628.8 Q558.3 633.0 556.0 636.1 Q553.7 633.0 549.9 628.8 Z" fill="#f5a24b"/><path d="M553.5 619.0 L553.5 629.0 M558.5 619.0 L558.5 629.0" stroke="#fff" stroke-width="1.6"/><text x="556.0" y="598.8" text-anchor="middle" fill="#fff" stroke="#fff" stroke-width="2.6" stroke-linejoin="round" opacity="0.85">Local</text><text x="556.0" y="598.8" text-anchor="middle" fill="#c4965f" stroke="#c4965f" stroke-width="0.35">Local</text><text x="556.0" y="612.0" text-anchor="middle" fill="#fff" stroke="#fff" stroke-width="2.6" stroke-linejoin="round" opacity="0.85">Foodz Cali</text><text x="556.0" y="612.0" text-anchor="middle" fill="#c4965f" stroke="#c4965f" stroke-width="0.35">Foodz Cali</text></g><g><path d="M42.9 789.8 A7.8 7.8 0 1 1 55.1 789.8 Q51.3 794.0 49.0 797.1 Q46.7 794.0 42.9 789.8 Z" fill="#fff" stroke="#fff" stroke-width="2.5" opacity="0.9"/><path d="M42.9 789.8 A7.8 7.8 0 1 1 55.1 789.8 Q51.3 794.0 49.0 797.1 Q46.7 794.0 42.9 789.8 Z" fill="#f5a24b"/><path d="M46.5 780.0 L46.5 790.0 M51.5 780.0 L51.5 790.0" stroke="#fff" stroke-width="1.6"/><text x="49.0" y="773.0" text-anchor="middle" fill="#fff" stroke="#fff" stroke-width="2.6" stroke-linejoin="round" opacity="0.85">Sorrel</text><text x="49.0" y="773.0" text-anchor="middle" fill="#c4965f" stroke="#c4965f" stroke-width="0.35">Sorrel</text></g><g><path d="M470.9 871.8 A7.8 7.8 0 1 1 483.1 871.8 Q479.3 876.0 477.0 879.1 Q474.7 876.0 470.9 871.8 Z" fill="#fff" stroke="#fff" stroke-width="2.5" opacity="0.9"/><path d="M470.9 871.8 A7.8 7.8 0 1 1 483.1 871.8 Q479.3 876.0 477.0 879.1 Q474.7 876.0 470.9 871.8 Z" fill="#f5a24b"/><rect x="473.0" y="864.0" width="8" height="7" rx="1" fill="#fff"/><path d="M477.0 864.0 L477.0 871.0" stroke="gift" stroke-width="0"/><text x="477.0" y="841.8" text-anchor="middle" fill="#fff" stroke="#fff" stroke-width="2.6" stroke-linejoin="round" opacity="0.85">Hi-Lo</text><text x="477.0" y="841.8" text-anchor="middle" fill="#c4965f" stroke="#c4965f" stroke-width="0.35">Hi-Lo</text><text x="477.0" y="855.0" text-anchor="middle" fill="#fff" stroke="#fff" stroke-width="2.6" stroke-linejoin="round" opacity="0.85">Club</text><text x="477.0" y="855.0" text-anchor="middle" fill="#c4965f" stroke="#c4965f" stroke-width="0.35">Club</text></g><g><path d="M501.9 850.8 A7.8 7.8 0 1 1 514.1 850.8 Q510.3 855.0 508.0 858.1 Q505.7 855.0 501.9 850.8 Z" fill="#fff" stroke="#fff" stroke-width="2.5" opacity="0.9"/><path d="M501.9 850.8 A7.8 7.8 0 1 1 514.1 850.8 Q510.3 855.0 508.0 858.1 Q505.7 855.0 501.9 850.8 Z" fill="#f5a24b"/><rect x="504.0" y="843.0" width="8" height="7" rx="1" fill="#fff"/><path d="M508.0 843.0 L508.0 850.0" stroke="gift" stroke-width="0"/><text x="535.0" y="843.0" text-anchor="middle" fill="#fff" stroke="#fff" stroke-width="2.6" stroke-linejoin="round" opacity="0.85">Dijon</text><text x="535.0" y="843.0" text-anchor="middle" fill="#c4965f" stroke="#c4965f" stroke-width="0.35">Dijon</text><text x="535.0" y="856.2" text-anchor="middle" fill="#fff" stroke="#fff" stroke-width="2.6" stroke-linejoin="round" opacity="0.85">Burger</text><text x="535.0" y="856.2" text-anchor="middle" fill="#c4965f" stroke="#c4965f" stroke-width="0.35">Burger</text></g><g><path d="M533.9 924.8 A7.8 7.8 0 1 1 546.1 924.8 Q542.3 929.0 540.0 932.1 Q537.7 929.0 533.9 924.8 Z" fill="#fff" stroke="#fff" stroke-width="2.5" opacity="0.9"/><path d="M533.9 924.8 A7.8 7.8 0 1 1 546.1 924.8 Q542.3 929.0 540.0 932.1 Q537.7 929.0 533.9 924.8 Z" fill="#f5a24b"/><path d="M537.5 915.0 L537.5 925.0 M542.5 915.0 L542.5 925.0" stroke="#fff" stroke-width="1.6"/><text x="540.0" y="881.6" text-anchor="middle" fill="#fff" stroke="#fff" stroke-width="2.6" stroke-linejoin="round" opacity="0.85">Kasa</text><text x="540.0" y="881.6" text-anchor="middle" fill="#c4965f" stroke="#c4965f" stroke-width="0.35">Kasa</text><text x="540.0" y="894.8" text-anchor="middle" fill="#fff" stroke="#fff" stroke-width="2.6" stroke-linejoin="round" opacity="0.85">Indian</text><text x="540.0" y="894.8" text-anchor="middle" fill="#c4965f" stroke="#c4965f" stroke-width="0.35">Indian</text><text x="540.0" y="908.0" text-anchor="middle" fill="#fff" stroke="#fff" stroke-width="2.6" stroke-linejoin="round" opacity="0.85">Eatery</text><text x="540.0" y="908.0" text-anchor="middle" fill="#c4965f" stroke="#c4965f" stroke-width="0.35">Eatery</text></g><g><path d="M215.9 245.8 A7.8 7.8 0 1 1 228.1 245.8 Q224.3 250.0 222.0 253.1 Q219.7 250.0 215.9 245.8 Z" fill="#fff" stroke="#fff" stroke-width="2.5" opacity="0.9"/><path d="M215.9 245.8 A7.8 7.8 0 1 1 228.1 245.8 Q224.3 250.0 222.0 253.1 Q219.7 250.0 215.9 245.8 Z" fill="#b672d8"/><rect x="217.5" y="237.5" width="9" height="7" rx="1" fill="none" stroke="#fff" stroke-width="1.4"/><rect x="219.5" y="239.5" width="5" height="2" fill="#fff"/><text x="222.0" y="215.8" text-anchor="middle" fill="#fff" stroke="#fff" stroke-width="2.6" stroke-linejoin="round" opacity="0.85">Inn on</text><text x="222.0" y="215.8" text-anchor="middle" fill="#a884c6" stroke="#a884c6" stroke-width="0.35">Inn on</text><text x="222.0" y="229.0" text-anchor="middle" fill="#fff" stroke="#fff" stroke-width="2.6" stroke-linejoin="round" opacity="0.85">Broadway</text><text x="222.0" y="229.0" text-anchor="middle" fill="#a884c6" stroke="#a884c6" stroke-width="0.35">Broadway</text></g><g><path d="M321.9 285.8 A7.8 7.8 0 1 1 334.1 285.8 Q330.3 290.0 328.0 293.1 Q325.7 290.0 321.9 285.8 Z" fill="#fff" stroke="#fff" stroke-width="2.5" opacity="0.9"/><path d="M321.9 285.8 A7.8 7.8 0 1 1 334.1 285.8 Q330.3 290.0 328.0 293.1 Q325.7 290.0 321.9 285.8 Z" fill="#b672d8"/><rect x="323.5" y="277.5" width="9" height="7" rx="1" fill="none" stroke="#fff" stroke-width="1.4"/><rect x="325.5" y="279.5" width="5" height="2" fill="#fff"/><text x="328.0" y="255.8" text-anchor="middle" fill="#fff" stroke="#fff" stroke-width="2.6" stroke-linejoin="round" opacity="0.85">Castle Inn</text><text x="328.0" y="255.8" text-anchor="middle" fill="#a884c6" stroke="#a884c6" stroke-width="0.35">Castle Inn</text><text x="328.0" y="269.0" text-anchor="middle" fill="#fff" stroke="#fff" stroke-width="2.6" stroke-linejoin="round" opacity="0.85">Motel</text><text x="328.0" y="269.0" text-anchor="middle" fill="#a884c6" stroke="#a884c6" stroke-width="0.35">Motel</text></g><g><path d="M415.9 271.8 A7.8 7.8 0 1 1 428.1 271.8 Q424.3 276.0 422.0 279.1 Q419.7 276.0 415.9 271.8 Z" fill="#fff" stroke="#fff" stroke-width="2.5" opacity="0.9"/><path d="M415.9 271.8 A7.8 7.8 0 1 1 428.1 271.8 Q424.3 276.0 422.0 279.1 Q419.7 276.0 415.9 271.8 Z" fill="#b672d8"/><rect x="417.5" y="263.5" width="9" height="7" rx="1" fill="none" stroke="#fff" stroke-width="1.4"/><rect x="419.5" y="265.5" width="5" height="2" fill="#fff"/><text x="422.0" y="241.8" text-anchor="middle" fill="#fff" stroke="#fff" stroke-width="2.6" stroke-linejoin="round" opacity="0.85">The Broadway</text><text x="422.0" y="241.8" text-anchor="middle" fill="#a884c6" stroke="#a884c6" stroke-width="0.35">The Broadway</text><text x="422.0" y="255.0" text-anchor="middle" fill="#fff" stroke="#fff" stroke-width="2.6" stroke-linejoin="round" opacity="0.85">Hotel</text><text x="422.0" y="255.0" text-anchor="middle" fill="#a884c6" stroke="#a884c6" stroke-width="0.35">Hotel</text></g><g><path d="M357.9 359.8 A7.8 7.8 0 1 1 370.1 359.8 Q366.3 364.0 364.0 367.1 Q361.7 364.0 357.9 359.8 Z" fill="#fff" stroke="#fff" stroke-width="2.5" opacity="0.9"/><path d="M357.9 359.8 A7.8 7.8 0 1 1 370.1 359.8 Q366.3 364.0 364.0 367.1 Q361.7 364.0 357.9 359.8 Z" fill="#b672d8"/><rect x="359.5" y="352.0" width="9" height="6.5" rx="1.2" fill="#fff"/><circle cx="364.0" cy="355.2" r="1.7" fill="#b070d0"/><text x="364.0" y="329.8" text-anchor="middle" fill="#fff" stroke="#fff" stroke-width="2.6" stroke-linejoin="round" opacity="0.85">Studio</text><text x="364.0" y="329.8" text-anchor="middle" fill="#a884c6" stroke="#a884c6" stroke-width="0.35">Studio</text><text x="364.0" y="343.0" text-anchor="middle" fill="#fff" stroke="#fff" stroke-width="2.6" stroke-linejoin="round" opacity="0.85">Gallery</text><text x="364.0" y="343.0" text-anchor="middle" fill="#a884c6" stroke="#a884c6" stroke-width="0.35">Gallery</text></g><g opacity="0.55"><path d="M245.9 436.8 A7.8 7.8 0 1 1 258.1 436.8 Q254.3 441.0 252.0 444.1 Q249.7 441.0 245.9 436.8 Z" fill="#fff" stroke="#fff" stroke-width="2.5" opacity="0.9"/><path d="M245.9 436.8 A7.8 7.8 0 1 1 258.1 436.8 Q254.3 441.0 252.0 444.1 Q249.7 441.0 245.9 436.8 Z" fill="#e0559c"/><rect x="247.5" y="429.0" width="9" height="6.5" rx="1.2" fill="#fff"/><circle cx="252.0" cy="432.2" r="1.7" fill="#b070d0"/><text x="252.0" y="393.6" text-anchor="middle" fill="#fff" stroke="#fff" stroke-width="2.6" stroke-linejoin="round" opacity="0.85">Independent</text><text x="252.0" y="393.6" text-anchor="middle" fill="#c85a92" stroke="#c85a92" stroke-width="0.35">Independent</text><text x="252.0" y="406.8" text-anchor="middle" fill="#fff" stroke="#fff" stroke-width="2.6" stroke-linejoin="round" opacity="0.85">Distribution</text><text x="252.0" y="406.8" text-anchor="middle" fill="#c85a92" stroke="#c85a92" stroke-width="0.35">Distribution</text><text x="252.0" y="420.0" text-anchor="middle" fill="#fff" stroke="#fff" stroke-width="2.6" stroke-linejoin="round" opacity="0.85">Collective</text><text x="252.0" y="420.0" text-anchor="middle" fill="#c85a92" stroke="#c85a92" stroke-width="0.35">Collective</text></g><g><path d="M129.9 524.8 A7.8 7.8 0 1 1 142.1 524.8 Q138.3 529.0 136.0 532.1 Q133.7 529.0 129.9 524.8 Z" fill="#fff" stroke="#fff" stroke-width="2.5" opacity="0.9"/><path d="M129.9 524.8 A7.8 7.8 0 1 1 142.1 524.8 Q138.3 529.0 136.0 532.1 Q133.7 529.0 129.9 524.8 Z" fill="#b672d8"/><rect x="131.5" y="517.0" width="9" height="6.5" rx="1.2" fill="#fff"/><circle cx="136.0" cy="520.2" r="1.7" fill="#b070d0"/><text x="136.0" y="481.6" text-anchor="middle" fill="#fff" stroke="#fff" stroke-width="2.6" stroke-linejoin="round" opacity="0.85">Haas-</text><text x="136.0" y="481.6" text-anchor="middle" fill="#a884c6" stroke="#a884c6" stroke-width="0.35">Haas-</text><text x="136.0" y="494.8" text-anchor="middle" fill="#fff" stroke="#fff" stroke-width="2.6" stroke-linejoin="round" opacity="0.85">Lilienthal</text><text x="136.0" y="494.8" text-anchor="middle" fill="#a884c6" stroke="#a884c6" stroke-width="0.35">Lilienthal</text><text x="136.0" y="508.0" text-anchor="middle" fill="#fff" stroke="#fff" stroke-width="2.6" stroke-linejoin="round" opacity="0.85">House</text><text x="136.0" y="508.0" text-anchor="middle" fill="#a884c6" stroke="#a884c6" stroke-width="0.35">House</text></g><g><path d="M246.9 567.8 A7.8 7.8 0 1 1 259.1 567.8 Q255.3 572.0 253.0 575.1 Q250.7 572.0 246.9 567.8 Z" fill="#fff" stroke="#fff" stroke-width="2.5" opacity="0.9"/><path d="M246.9 567.8 A7.8 7.8 0 1 1 259.1 567.8 Q255.3 572.0 253.0 575.1 Q250.7 572.0 246.9 567.8 Z" fill="#b672d8"/><rect x="248.5" y="559.5" width="9" height="7" rx="1" fill="none" stroke="#fff" stroke-width="1.4"/><rect x="250.5" y="561.5" width="5" height="2" fill="#fff"/><text x="253.0" y="524.6" text-anchor="middle" fill="#fff" stroke="#fff" stroke-width="2.6" stroke-linejoin="round" opacity="0.85">Academy of Art</text><text x="253.0" y="524.6" text-anchor="middle" fill="#a884c6" stroke="#a884c6" stroke-width="0.35">Academy of Art</text><text x="253.0" y="537.8" text-anchor="middle" fill="#fff" stroke="#fff" stroke-width="2.6" stroke-linejoin="round" opacity="0.85">University</text><text x="253.0" y="537.8" text-anchor="middle" fill="#a884c6" stroke="#a884c6" stroke-width="0.35">University</text><text x="253.0" y="551.0" text-anchor="middle" fill="#fff" stroke="#fff" stroke-width="2.6" stroke-linejoin="round" opacity="0.85">Automobile Museum</text><text x="253.0" y="551.0" text-anchor="middle" fill="#a884c6" stroke="#a884c6" stroke-width="0.35">Automobile Museum</text></g><g><path d="M19.9 576.8 A7.8 7.8 0 1 1 32.1 576.8 Q28.3 581.0 26.0 584.1 Q23.7 581.0 19.9 576.8 Z" fill="#fff" stroke="#fff" stroke-width="2.5" opacity="0.9"/><path d="M19.9 576.8 A7.8 7.8 0 1 1 32.1 576.8 Q28.3 581.0 26.0 584.1 Q23.7 581.0 19.9 576.8 Z" fill="#b672d8"/><rect x="21.5" y="569.0" width="9" height="6.5" rx="1.2" fill="#fff"/><circle cx="26.0" cy="572.2" r="1.7" fill="#b070d0"/><text x="26.0" y="546.8" text-anchor="middle" fill="#fff" stroke="#fff" stroke-width="2.6" stroke-linejoin="round" opacity="0.85">Walter U.</text><text x="26.0" y="546.8" text-anchor="middle" fill="#a884c6" stroke="#a884c6" stroke-width="0.35">Walter U.</text><text x="26.0" y="560.0" text-anchor="middle" fill="#fff" stroke="#fff" stroke-width="2.6" stroke-linejoin="round" opacity="0.85">Lum Place</text><text x="26.0" y="560.0" text-anchor="middle" fill="#a884c6" stroke="#a884c6" stroke-width="0.35">Lum Place</text></g><g><path d="M480.9 633.8 A7.8 7.8 0 1 1 493.1 633.8 Q489.3 638.0 487.0 641.1 Q484.7 638.0 480.9 633.8 Z" fill="#fff" stroke="#fff" stroke-width="2.5" opacity="0.9"/><path d="M480.9 633.8 A7.8 7.8 0 1 1 493.1 633.8 Q489.3 638.0 487.0 641.1 Q484.7 638.0 480.9 633.8 Z" fill="#b672d8"/><circle cx="487.0" cy="629.0" r="2.5" fill="#fff"/><text x="487.0" y="603.8" text-anchor="middle" fill="#fff" stroke="#fff" stroke-width="2.6" stroke-linejoin="round" opacity="0.85">Wow Kids</text><text x="487.0" y="603.8" text-anchor="middle" fill="#a884c6" stroke="#a884c6" stroke-width="0.35">Wow Kids</text><text x="487.0" y="617.0" text-anchor="middle" fill="#fff" stroke="#fff" stroke-width="2.6" stroke-linejoin="round" opacity="0.85">Playground</text><text x="487.0" y="617.0" text-anchor="middle" fill="#a884c6" stroke="#a884c6" stroke-width="0.35">Playground</text></g><g><path d="M230.9 716.8 A7.8 7.8 0 1 1 243.1 716.8 Q239.3 721.0 237.0 724.1 Q234.7 721.0 230.9 716.8 Z" fill="#fff" stroke="#fff" stroke-width="2.5" opacity="0.9"/><path d="M230.9 716.8 A7.8 7.8 0 1 1 243.1 716.8 Q239.3 721.0 237.0 724.1 Q234.7 721.0 230.9 716.8 Z" fill="#b672d8"/><rect x="232.5" y="708.5" width="9" height="7" rx="1" fill="none" stroke="#fff" stroke-width="1.4"/><rect x="234.5" y="710.5" width="5" height="2" fill="#fff"/><text x="237.0" y="673.6" text-anchor="middle" fill="#fff" stroke="#fff" stroke-width="2.6" stroke-linejoin="round" opacity="0.85">Monroe</text><text x="237.0" y="673.6" text-anchor="middle" fill="#a884c6" stroke="#a884c6" stroke-width="0.35">Monroe</text><text x="237.0" y="686.8" text-anchor="middle" fill="#fff" stroke="#fff" stroke-width="2.6" stroke-linejoin="round" opacity="0.85">Residence</text><text x="237.0" y="686.8" text-anchor="middle" fill="#a884c6" stroke="#a884c6" stroke-width="0.35">Residence</text><text x="237.0" y="700.0" text-anchor="middle" fill="#fff" stroke="#fff" stroke-width="2.6" stroke-linejoin="round" opacity="0.85">Club</text><text x="237.0" y="700.0" text-anchor="middle" fill="#a884c6" stroke="#a884c6" stroke-width="0.35">Club</text></g><g><path d="M490.9 717.8 A7.8 7.8 0 1 1 503.1 717.8 Q499.3 722.0 497.0 725.1 Q494.7 722.0 490.9 717.8 Z" fill="#fff" stroke="#fff" stroke-width="2.5" opacity="0.9"/><path d="M490.9 717.8 A7.8 7.8 0 1 1 503.1 717.8 Q499.3 722.0 497.0 725.1 Q494.7 722.0 490.9 717.8 Z" fill="#b672d8"/><rect x="492.5" y="709.5" width="9" height="7" rx="1" fill="none" stroke="#fff" stroke-width="1.4"/><rect x="494.5" y="711.5" width="5" height="2" fill="#fff"/><text x="497.0" y="687.8" text-anchor="middle" fill="#fff" stroke="#fff" stroke-width="2.6" stroke-linejoin="round" opacity="0.85">Palo Alto</text><text x="497.0" y="687.8" text-anchor="middle" fill="#a884c6" stroke="#a884c6" stroke-width="0.35">Palo Alto</text><text x="497.0" y="701.0" text-anchor="middle" fill="#fff" stroke="#fff" stroke-width="2.6" stroke-linejoin="round" opacity="0.85">Hotel</text><text x="497.0" y="701.0" text-anchor="middle" fill="#a884c6" stroke="#a884c6" stroke-width="0.35">Hotel</text></g><g><path d="M600.9 856.8 A7.8 7.8 0 1 1 613.1 856.8 Q609.3 861.0 607.0 864.1 Q604.7 861.0 600.9 856.8 Z" fill="#fff" stroke="#fff" stroke-width="2.5" opacity="0.9"/><path d="M600.9 856.8 A7.8 7.8 0 1 1 613.1 856.8 Q609.3 861.0 607.0 864.1 Q604.7 861.0 600.9 856.8 Z" fill="#b672d8"/><rect x="602.5" y="848.5" width="9" height="7" rx="1" fill="none" stroke="#fff" stroke-width="1.4"/><rect x="604.5" y="850.5" width="5" height="2" fill="#fff"/><text x="607.0" y="826.8" text-anchor="middle" fill="#fff" stroke="#fff" stroke-width="2.6" stroke-linejoin="round" opacity="0.85">The Dorel</text><text x="607.0" y="826.8" text-anchor="middle" fill="#a884c6" stroke="#a884c6" stroke-width="0.35">The Dorel</text><text x="607.0" y="840.0" text-anchor="middle" fill="#fff" stroke="#fff" stroke-width="2.6" stroke-linejoin="round" opacity="0.85">Apartments</text><text x="607.0" y="840.0" text-anchor="middle" fill="#a884c6" stroke="#a884c6" stroke-width="0.35">Apartments</text></g><g><path d="M150.9 304.8 A7.8 7.8 0 1 1 163.1 304.8 Q159.3 309.0 157.0 312.1 Q154.7 309.0 150.9 304.8 Z" fill="#fff" stroke="#fff" stroke-width="2.5" opacity="0.9"/><path d="M150.9 304.8 A7.8 7.8 0 1 1 163.1 304.8 Q159.3 309.0 157.0 312.1 Q154.7 309.0 150.9 304.8 Z" fill="#a1887c"/><path d="M152.0 299.0 L157.0 296.0 L162.0 299.0 L157.0 302.0 Z" fill="#fff"/><path d="M154.0 301.0 L154.0 303.5 Q157.0 305.0 160.0 303.5 L160.0 301.0" fill="#fff"/><text x="157.0" y="274.8" text-anchor="middle" fill="#fff" stroke="#fff" stroke-width="2.6" stroke-linejoin="round" opacity="0.85">St Brigid</text><text x="157.0" y="274.8" text-anchor="middle" fill="#9a877c" stroke="#9a877c" stroke-width="0.35">St Brigid</text><text x="157.0" y="288.0" text-anchor="middle" fill="#fff" stroke="#fff" stroke-width="2.6" stroke-linejoin="round" opacity="0.85">School</text><text x="157.0" y="288.0" text-anchor="middle" fill="#9a877c" stroke="#9a877c" stroke-width="0.35">School</text></g><g><path d="M151.9 639.8 A7.8 7.8 0 1 1 164.1 639.8 Q160.3 644.0 158.0 647.1 Q155.7 644.0 151.9 639.8 Z" fill="#fff" stroke="#fff" stroke-width="2.5" opacity="0.9"/><path d="M151.9 639.8 A7.8 7.8 0 1 1 164.1 639.8 Q160.3 644.0 158.0 647.1 Q155.7 644.0 151.9 639.8 Z" fill="#a1887c"/><path d="M158.0 630.0 L158.0 640.0 M154.5 633.0 L161.5 633.0" stroke="#fff" stroke-width="1.6"/><text x="158.0" y="596.6" text-anchor="middle" fill="#fff" stroke="#fff" stroke-width="2.6" stroke-linejoin="round" opacity="0.85">Golden Gate</text><text x="158.0" y="596.6" text-anchor="middle" fill="#9a877c" stroke="#9a877c" stroke-width="0.35">Golden Gate</text><text x="158.0" y="609.8" text-anchor="middle" fill="#fff" stroke="#fff" stroke-width="2.6" stroke-linejoin="round" opacity="0.85">Spiritualist</text><text x="158.0" y="609.8" text-anchor="middle" fill="#9a877c" stroke="#9a877c" stroke-width="0.35">Spiritualist</text><text x="158.0" y="623.0" text-anchor="middle" fill="#fff" stroke="#fff" stroke-width="2.6" stroke-linejoin="round" opacity="0.85">Church</text><text x="158.0" y="623.0" text-anchor="middle" fill="#9a877c" stroke="#9a877c" stroke-width="0.35">Church</text></g><g><path d="M355.9 664.8 A7.8 7.8 0 1 1 368.1 664.8 Q364.3 669.0 362.0 672.1 Q359.7 669.0 355.9 664.8 Z" fill="#fff" stroke="#fff" stroke-width="2.5" opacity="0.9"/><path d="M355.9 664.8 A7.8 7.8 0 1 1 368.1 664.8 Q364.3 669.0 362.0 672.1 Q359.7 669.0 355.9 664.8 Z" fill="#a1887c"/><circle cx="362.0" cy="660.0" r="2.5" fill="#fff"/><text x="362.0" y="608.4" text-anchor="middle" fill="#fff" stroke="#fff" stroke-width="2.6" stroke-linejoin="round" opacity="0.85">American</text><text x="362.0" y="608.4" text-anchor="middle" fill="#9a877c" stroke="#9a877c" stroke-width="0.35">American</text><text x="362.0" y="621.6" text-anchor="middle" fill="#fff" stroke="#fff" stroke-width="2.6" stroke-linejoin="round" opacity="0.85">Buddhist</text><text x="362.0" y="621.6" text-anchor="middle" fill="#9a877c" stroke="#9a877c" stroke-width="0.35">Buddhist</text><text x="362.0" y="634.8" text-anchor="middle" fill="#fff" stroke="#fff" stroke-width="2.6" stroke-linejoin="round" opacity="0.85">Cultural</text><text x="362.0" y="634.8" text-anchor="middle" fill="#9a877c" stroke="#9a877c" stroke-width="0.35">Cultural</text><text x="362.0" y="648.0" text-anchor="middle" fill="#fff" stroke="#fff" stroke-width="2.6" stroke-linejoin="round" opacity="0.85">Society</text><text x="362.0" y="648.0" text-anchor="middle" fill="#9a877c" stroke="#9a877c" stroke-width="0.35">Society</text></g><g><path d="M385.9 735.8 A7.8 7.8 0 1 1 398.1 735.8 Q394.3 740.0 392.0 743.1 Q389.7 740.0 385.9 735.8 Z" fill="#fff" stroke="#fff" stroke-width="2.5" opacity="0.9"/><path d="M385.9 735.8 A7.8 7.8 0 1 1 398.1 735.8 Q394.3 740.0 392.0 743.1 Q389.7 740.0 385.9 735.8 Z" fill="#a1887c"/><path d="M392.0 726.0 L392.0 736.0 M388.5 729.0 L395.5 729.0" stroke="#fff" stroke-width="1.6"/><text x="392.0" y="692.6" text-anchor="middle" fill="#fff" stroke="#fff" stroke-width="2.6" stroke-linejoin="round" opacity="0.85">Old First</text><text x="392.0" y="692.6" text-anchor="middle" fill="#9a877c" stroke="#9a877c" stroke-width="0.35">Old First</text><text x="392.0" y="705.8" text-anchor="middle" fill="#fff" stroke="#fff" stroke-width="2.6" stroke-linejoin="round" opacity="0.85">Presbyterian</text><text x="392.0" y="705.8" text-anchor="middle" fill="#9a877c" stroke="#9a877c" stroke-width="0.35">Presbyterian</text><text x="392.0" y="719.0" text-anchor="middle" fill="#fff" stroke="#fff" stroke-width="2.6" stroke-linejoin="round" opacity="0.85">Church</text><text x="392.0" y="719.0" text-anchor="middle" fill="#9a877c" stroke="#9a877c" stroke-width="0.35">Church</text></g><g><path d="M271.9 810.8 A7.8 7.8 0 1 1 284.1 810.8 Q280.3 815.0 278.0 818.1 Q275.7 815.0 271.9 810.8 Z" fill="#fff" stroke="#fff" stroke-width="2.5" opacity="0.9"/><path d="M271.9 810.8 A7.8 7.8 0 1 1 284.1 810.8 Q280.3 815.0 278.0 818.1 Q275.7 815.0 271.9 810.8 Z" fill="#a1887c"/><rect x="273.5" y="802.5" width="9" height="7" rx="1" fill="none" stroke="#fff" stroke-width="1.4"/><rect x="275.5" y="804.5" width="5" height="2" fill="#fff"/><text x="278.0" y="780.8" text-anchor="middle" fill="#fff" stroke="#fff" stroke-width="2.6" stroke-linejoin="round" opacity="0.85">Consulado de</text><text x="278.0" y="780.8" text-anchor="middle" fill="#9a877c" stroke="#9a877c" stroke-width="0.35">Consulado de</text><text x="278.0" y="794.0" text-anchor="middle" fill="#fff" stroke="#fff" stroke-width="2.6" stroke-linejoin="round" opacity="0.85">Honduras</text><text x="278.0" y="794.0" text-anchor="middle" fill="#9a877c" stroke="#9a877c" stroke-width="0.35">Honduras</text></g><g><path d="M703.9 562.8 A7.8 7.8 0 1 1 716.1 562.8 Q712.3 567.0 710.0 570.1 Q707.7 567.0 703.9 562.8 Z" fill="#fff" stroke="#fff" stroke-width="2.5" opacity="0.9"/><path d="M703.9 562.8 A7.8 7.8 0 1 1 716.1 562.8 Q712.3 567.0 710.0 570.1 Q707.7 567.0 703.9 562.8 Z" fill="#a1887c"/><rect x="705.5" y="554.5" width="9" height="7" rx="1" fill="none" stroke="#fff" stroke-width="1.4"/><rect x="707.5" y="556.5" width="5" height="2" fill="#fff"/><text x="710.0" y="532.8" text-anchor="middle" fill="#fff" stroke="#fff" stroke-width="2.6" stroke-linejoin="round" opacity="0.85">State of</text><text x="710.0" y="532.8" text-anchor="middle" fill="#9a877c" stroke="#9a877c" stroke-width="0.35">State of</text><text x="710.0" y="546.0" text-anchor="middle" fill="#fff" stroke="#fff" stroke-width="2.6" stroke-linejoin="round" opacity="0.85">California</text><text x="710.0" y="546.0" text-anchor="middle" fill="#9a877c" stroke="#9a877c" stroke-width="0.35">California</text></g><g><path d="M527.9 212.8 A7.8 7.8 0 1 1 540.1 212.8 Q536.3 217.0 534.0 220.1 Q531.7 217.0 527.9 212.8 Z" fill="#fff" stroke="#fff" stroke-width="2.5" opacity="0.9"/><path d="M527.9 212.8 A7.8 7.8 0 1 1 540.1 212.8 Q536.3 217.0 534.0 220.1 Q531.7 217.0 527.9 212.8 Z" fill="#35b07d"/><path d="M530.0 212.0 Q530.0 204.0 538.5 203.5 Q538.0 212.0 530.0 212.0 Z" fill="#fff"/><text x="534.0" y="169.6" text-anchor="middle" fill="#fff" stroke="#fff" stroke-width="2.6" stroke-linejoin="round" opacity="0.85">Helen</text><text x="534.0" y="169.6" text-anchor="middle" fill="#4ba585" stroke="#4ba585" stroke-width="0.35">Helen</text><text x="534.0" y="182.8" text-anchor="middle" fill="#fff" stroke="#fff" stroke-width="2.6" stroke-linejoin="round" opacity="0.85">Willis</text><text x="534.0" y="182.8" text-anchor="middle" fill="#4ba585" stroke="#4ba585" stroke-width="0.35">Willis</text><text x="534.0" y="196.0" text-anchor="middle" fill="#fff" stroke="#fff" stroke-width="2.6" stroke-linejoin="round" opacity="0.85">Park</text><text x="534.0" y="196.0" text-anchor="middle" fill="#4ba585" stroke="#4ba585" stroke-width="0.35">Park</text></g><g><path d="M756.9 190.8 A7.8 7.8 0 1 1 769.1 190.8 Q765.3 195.0 763.0 198.1 Q760.7 195.0 756.9 190.8 Z" fill="#fff" stroke="#fff" stroke-width="2.5" opacity="0.9"/><path d="M756.9 190.8 A7.8 7.8 0 1 1 769.1 190.8 Q765.3 195.0 763.0 198.1 Q760.7 195.0 756.9 190.8 Z" fill="#35b07d"/><path d="M759.0 190.0 Q759.0 182.0 767.5 181.5 Q767.0 190.0 759.0 190.0 Z" fill="#fff"/><text x="763.0" y="147.6" text-anchor="middle" fill="#fff" stroke="#fff" stroke-width="2.6" stroke-linejoin="round" opacity="0.85">Broadway</text><text x="763.0" y="147.6" text-anchor="middle" fill="#4ba585" stroke="#4ba585" stroke-width="0.35">Broadway</text><text x="763.0" y="160.8" text-anchor="middle" fill="#fff" stroke="#fff" stroke-width="2.6" stroke-linejoin="round" opacity="0.85">Tunnel West</text><text x="763.0" y="160.8" text-anchor="middle" fill="#4ba585" stroke="#4ba585" stroke-width="0.35">Tunnel West</text><text x="763.0" y="174.0" text-anchor="middle" fill="#fff" stroke="#fff" stroke-width="2.6" stroke-linejoin="round" opacity="0.85">Mini Park</text><text x="763.0" y="174.0" text-anchor="middle" fill="#4ba585" stroke="#4ba585" stroke-width="0.35">Mini Park</text></g><g><path d="M402.9 462.8 A7.8 7.8 0 1 1 415.1 462.8 Q411.3 467.0 409.0 470.1 Q406.7 467.0 402.9 462.8 Z" fill="#fff" stroke="#fff" stroke-width="2.5" opacity="0.9"/><path d="M402.9 462.8 A7.8 7.8 0 1 1 415.1 462.8 Q411.3 467.0 409.0 470.1 Q406.7 467.0 402.9 462.8 Z" fill="#35b07d"/><circle cx="409.0" cy="458.0" r="2.5" fill="#fff"/><text x="409.0" y="432.8" text-anchor="middle" fill="#fff" stroke="#fff" stroke-width="2.6" stroke-linejoin="round" opacity="0.85">Slacker</text><text x="409.0" y="432.8" text-anchor="middle" fill="#4ba585" stroke="#4ba585" stroke-width="0.35">Slacker</text><text x="409.0" y="446.0" text-anchor="middle" fill="#fff" stroke="#fff" stroke-width="2.6" stroke-linejoin="round" opacity="0.85">Hill Trail</text><text x="409.0" y="446.0" text-anchor="middle" fill="#4ba585" stroke="#4ba585" stroke-width="0.35">Hill Trail</text></g><g><path d="M640.9 101.8 A7.8 7.8 0 1 1 653.1 101.8 Q649.3 106.0 647.0 109.1 Q644.7 106.0 640.9 101.8 Z" fill="#fff" stroke="#fff" stroke-width="2.5" opacity="0.9"/><path d="M640.9 101.8 A7.8 7.8 0 1 1 653.1 101.8 Q649.3 106.0 647.0 109.1 Q644.7 106.0 640.9 101.8 Z" fill="#3f78d0"/><rect x="644.0" y="92.5" width="6" height="8" rx="2" fill="#fff"/><rect x="645.0" y="94.5" width="4" height="2.5" fill="#3a70d0"/><text x="647.0" y="71.8" text-anchor="middle" fill="#fff" stroke="#fff" stroke-width="2.6" stroke-linejoin="round" opacity="0.85">Hyde St &amp;</text><text x="647.0" y="71.8" text-anchor="middle" fill="#56709a" stroke="#56709a" stroke-width="0.35">Hyde St &amp;</text><text x="647.0" y="85.0" text-anchor="middle" fill="#fff" stroke="#fff" stroke-width="2.6" stroke-linejoin="round" opacity="0.85">Vallejo St</text><text x="647.0" y="85.0" text-anchor="middle" fill="#56709a" stroke="#56709a" stroke-width="0.35">Vallejo St</text></g><g><path d="M670.9 212.8 A7.8 7.8 0 1 1 683.1 212.8 Q679.3 217.0 677.0 220.1 Q674.7 217.0 670.9 212.8 Z" fill="#fff" stroke="#fff" stroke-width="2.5" opacity="0.9"/><path d="M670.9 212.8 A7.8 7.8 0 1 1 683.1 212.8 Q679.3 217.0 677.0 220.1 Q674.7 217.0 670.9 212.8 Z" fill="#3f78d0"/><rect x="674.0" y="203.5" width="6" height="8" rx="2" fill="#fff"/><rect x="675.0" y="205.5" width="4" height="2.5" fill="#3a70d0"/><text x="677.0" y="182.8" text-anchor="middle" fill="#fff" stroke="#fff" stroke-width="2.6" stroke-linejoin="round" opacity="0.85">Hyde St &amp;</text><text x="677.0" y="182.8" text-anchor="middle" fill="#56709a" stroke="#56709a" stroke-width="0.35">Hyde St &amp;</text><text x="677.0" y="196.0" text-anchor="middle" fill="#fff" stroke="#fff" stroke-width="2.6" stroke-linejoin="round" opacity="0.85">Broadway</text><text x="677.0" y="196.0" text-anchor="middle" fill="#56709a" stroke="#56709a" stroke-width="0.35">Broadway</text></g><g><path d="M673.9 316.8 A7.8 7.8 0 1 1 686.1 316.8 Q682.3 321.0 680.0 324.1 Q677.7 321.0 673.9 316.8 Z" fill="#fff" stroke="#fff" stroke-width="2.5" opacity="0.9"/><path d="M673.9 316.8 A7.8 7.8 0 1 1 686.1 316.8 Q682.3 321.0 680.0 324.1 Q677.7 321.0 673.9 316.8 Z" fill="#3f78d0"/><rect x="677.0" y="307.5" width="6" height="8" rx="2" fill="#fff"/><rect x="678.0" y="309.5" width="4" height="2.5" fill="#3a70d0"/><text x="680.0" y="286.8" text-anchor="middle" fill="#fff" stroke="#fff" stroke-width="2.6" stroke-linejoin="round" opacity="0.85">Hyde St &amp;</text><text x="680.0" y="286.8" text-anchor="middle" fill="#56709a" stroke="#56709a" stroke-width="0.35">Hyde St &amp;</text><text x="680.0" y="300.0" text-anchor="middle" fill="#fff" stroke="#fff" stroke-width="2.6" stroke-linejoin="round" opacity="0.85">Pacific Ave</text><text x="680.0" y="300.0" text-anchor="middle" fill="#56709a" stroke="#56709a" stroke-width="0.35">Pacific Ave</text></g><g><path d="M687.9 401.8 A7.8 7.8 0 1 1 700.1 401.8 Q696.3 406.0 694.0 409.1 Q691.7 406.0 687.9 401.8 Z" fill="#fff" stroke="#fff" stroke-width="2.5" opacity="0.9"/><path d="M687.9 401.8 A7.8 7.8 0 1 1 700.1 401.8 Q696.3 406.0 694.0 409.1 Q691.7 406.0 687.9 401.8 Z" fill="#3f78d0"/><rect x="691.0" y="392.5" width="6" height="8" rx="2" fill="#fff"/><rect x="692.0" y="394.5" width="4" height="2.5" fill="#3a70d0"/><text x="694.0" y="371.8" text-anchor="middle" fill="#fff" stroke="#fff" stroke-width="2.6" stroke-linejoin="round" opacity="0.85">Hyde St &amp;</text><text x="694.0" y="371.8" text-anchor="middle" fill="#56709a" stroke="#56709a" stroke-width="0.35">Hyde St &amp;</text><text x="694.0" y="385.0" text-anchor="middle" fill="#fff" stroke="#fff" stroke-width="2.6" stroke-linejoin="round" opacity="0.85">Jackson St</text><text x="694.0" y="385.0" text-anchor="middle" fill="#56709a" stroke="#56709a" stroke-width="0.35">Jackson St</text></g><g><path d="M738.9 769.8 A7.8 7.8 0 1 1 751.1 769.8 Q747.3 774.0 745.0 777.1 Q742.7 774.0 738.9 769.8 Z" fill="#fff" stroke="#fff" stroke-width="2.5" opacity="0.9"/><path d="M738.9 769.8 A7.8 7.8 0 1 1 751.1 769.8 Q747.3 774.0 745.0 777.1 Q742.7 774.0 738.9 769.8 Z" fill="#3f78d0"/><rect x="742.0" y="760.5" width="6" height="8" rx="2" fill="#fff"/><rect x="743.0" y="762.5" width="4" height="2.5" fill="#3a70d0"/><text x="745.0" y="739.8" text-anchor="middle" fill="#fff" stroke="#fff" stroke-width="2.6" stroke-linejoin="round" opacity="0.85">California</text><text x="745.0" y="739.8" text-anchor="middle" fill="#56709a" stroke="#56709a" stroke-width="0.35">California</text><text x="745.0" y="753.0" text-anchor="middle" fill="#fff" stroke="#fff" stroke-width="2.6" stroke-linejoin="round" opacity="0.85">St &amp; Hyde St</text><text x="745.0" y="753.0" text-anchor="middle" fill="#56709a" stroke="#56709a" stroke-width="0.35">St &amp; Hyde St</text></g><g><path d="M629.9 784.8 A7.8 7.8 0 1 1 642.1 784.8 Q638.3 789.0 636.0 792.1 Q633.7 789.0 629.9 784.8 Z" fill="#fff" stroke="#fff" stroke-width="2.5" opacity="0.9"/><path d="M629.9 784.8 A7.8 7.8 0 1 1 642.1 784.8 Q638.3 789.0 636.0 792.1 Q633.7 789.0 629.9 784.8 Z" fill="#3f78d0"/><rect x="633.0" y="775.5" width="6" height="8" rx="2" fill="#fff"/><rect x="634.0" y="777.5" width="4" height="2.5" fill="#3a70d0"/><text x="636.0" y="754.8" text-anchor="middle" fill="#fff" stroke="#fff" stroke-width="2.6" stroke-linejoin="round" opacity="0.85">California</text><text x="636.0" y="754.8" text-anchor="middle" fill="#56709a" stroke="#56709a" stroke-width="0.35">California</text><text x="636.0" y="768.0" text-anchor="middle" fill="#fff" stroke="#fff" stroke-width="2.6" stroke-linejoin="round" opacity="0.85">St &amp; Larkin St</text><text x="636.0" y="768.0" text-anchor="middle" fill="#56709a" stroke="#56709a" stroke-width="0.35">St &amp; Larkin St</text></g><g><path d="M493.9 806.8 A7.8 7.8 0 1 1 506.1 806.8 Q502.3 811.0 500.0 814.1 Q497.7 811.0 493.9 806.8 Z" fill="#fff" stroke="#fff" stroke-width="2.5" opacity="0.9"/><path d="M493.9 806.8 A7.8 7.8 0 1 1 506.1 806.8 Q502.3 811.0 500.0 814.1 Q497.7 811.0 493.9 806.8 Z" fill="#3f78d0"/><rect x="497.0" y="797.5" width="6" height="8" rx="2" fill="#fff"/><rect x="498.0" y="799.5" width="4" height="2.5" fill="#3a70d0"/><text x="500.0" y="776.8" text-anchor="middle" fill="#fff" stroke="#fff" stroke-width="2.6" stroke-linejoin="round" opacity="0.85">California</text><text x="500.0" y="776.8" text-anchor="middle" fill="#56709a" stroke="#56709a" stroke-width="0.35">California</text><text x="500.0" y="790.0" text-anchor="middle" fill="#fff" stroke="#fff" stroke-width="2.6" stroke-linejoin="round" opacity="0.85">St &amp; Polk St</text><text x="500.0" y="790.0" text-anchor="middle" fill="#56709a" stroke="#56709a" stroke-width="0.35">St &amp; Polk St</text></g><g><path d="M353.9 833.8 A7.8 7.8 0 1 1 366.1 833.8 Q362.3 838.0 360.0 841.1 Q357.7 838.0 353.9 833.8 Z" fill="#fff" stroke="#fff" stroke-width="2.5" opacity="0.9"/><path d="M353.9 833.8 A7.8 7.8 0 1 1 366.1 833.8 Q362.3 838.0 360.0 841.1 Q357.7 838.0 353.9 833.8 Z" fill="#3f78d0"/><rect x="357.0" y="824.5" width="6" height="8" rx="2" fill="#fff"/><rect x="358.0" y="826.5" width="4" height="2.5" fill="#3a70d0"/><text x="360.0" y="790.6" text-anchor="middle" fill="#fff" stroke="#fff" stroke-width="2.6" stroke-linejoin="round" opacity="0.85">California</text><text x="360.0" y="790.6" text-anchor="middle" fill="#56709a" stroke="#56709a" stroke-width="0.35">California</text><text x="360.0" y="803.8" text-anchor="middle" fill="#fff" stroke="#fff" stroke-width="2.6" stroke-linejoin="round" opacity="0.85">St &amp; Van</text><text x="360.0" y="803.8" text-anchor="middle" fill="#56709a" stroke="#56709a" stroke-width="0.35">St &amp; Van</text><text x="360.0" y="817.0" text-anchor="middle" fill="#fff" stroke="#fff" stroke-width="2.6" stroke-linejoin="round" opacity="0.85">Ness Ave</text><text x="360.0" y="817.0" text-anchor="middle" fill="#56709a" stroke="#56709a" stroke-width="0.35">Ness Ave</text></g><g><path d="M322.9 905.8 A7.8 7.8 0 1 1 335.1 905.8 Q331.3 910.0 329.0 913.1 Q326.7 910.0 322.9 905.8 Z" fill="#fff" stroke="#fff" stroke-width="2.5" opacity="0.9"/><path d="M322.9 905.8 A7.8 7.8 0 1 1 335.1 905.8 Q331.3 910.0 329.0 913.1 Q326.7 910.0 322.9 905.8 Z" fill="#5aaee8"/><rect x="326.0" y="896.5" width="6" height="8" rx="2" fill="#fff"/><rect x="327.0" y="898.5" width="4" height="2.5" fill="#3a70d0"/><text x="329.0" y="889.0" text-anchor="middle" fill="#fff" stroke="#fff" stroke-width="2.6" stroke-linejoin="round" opacity="0.85">Chevron</text><text x="329.0" y="889.0" text-anchor="middle" fill="#5b95bd" stroke="#5b95bd" stroke-width="0.35">Chevron</text></g><g><path d="M323.9 552.8 A7.8 7.8 0 1 1 336.1 552.8 Q332.3 557.0 330.0 560.1 Q327.7 557.0 323.9 552.8 Z" fill="#fff" stroke="#fff" stroke-width="2.5" opacity="0.9"/><path d="M323.9 552.8 A7.8 7.8 0 1 1 336.1 552.8 Q332.3 557.0 330.0 560.1 Q327.7 557.0 323.9 552.8 Z" fill="#5aaee8"/><text x="330.0" y="552.5" font-size="12" font-weight="bold" fill="#fff" text-anchor="middle" font-family="Liberation Sans">P</text></g><g><path d="M300.9 746.8 A7.8 7.8 0 1 1 313.1 746.8 Q309.3 751.0 307.0 754.1 Q304.7 751.0 300.9 746.8 Z" fill="#fff" stroke="#fff" stroke-width="2.5" opacity="0.9"/><path d="M300.9 746.8 A7.8 7.8 0 1 1 313.1 746.8 Q309.3 751.0 307.0 754.1 Q304.7 751.0 300.9 746.8 Z" fill="#5aaee8"/><text x="307.0" y="746.5" font-size="12" font-weight="bold" fill="#fff" text-anchor="middle" font-family="Liberation Sans">P</text></g><g><path d="M401.9 880.8 A7.8 7.8 0 1 1 414.1 880.8 Q410.3 885.0 408.0 888.1 Q405.7 885.0 401.9 880.8 Z" fill="#fff" stroke="#fff" stroke-width="2.5" opacity="0.9"/><path d="M401.9 880.8 A7.8 7.8 0 1 1 414.1 880.8 Q410.3 885.0 408.0 888.1 Q405.7 885.0 401.9 880.8 Z" fill="#5aaee8"/><text x="408.0" y="880.5" font-size="12" font-weight="bold" fill="#fff" text-anchor="middle" font-family="Liberation Sans">P</text></g><g><path d="M733.9 916.8 A7.8 7.8 0 1 1 746.1 916.8 Q742.3 921.0 740.0 924.1 Q737.7 921.0 733.9 916.8 Z" fill="#fff" stroke="#fff" stroke-width="2.5" opacity="0.9"/><path d="M733.9 916.8 A7.8 7.8 0 1 1 746.1 916.8 Q742.3 921.0 740.0 924.1 Q737.7 921.0 733.9 916.8 Z" fill="#5aaee8"/><text x="740.0" y="916.5" font-size="12" font-weight="bold" fill="#fff" text-anchor="middle" font-family="Liberation Sans">P</text></g><text x="720.0" y="83.0" text-anchor="middle" fill="#fff" stroke="#fff" stroke-width="2.6" stroke-linejoin="round" opacity="0.85">Annie's</text><text x="720.0" y="83.0" text-anchor="middle" fill="#a884c6" stroke="#a884c6" stroke-width="0.35">Annie's</text><text x="720.0" y="96.2" text-anchor="middle" fill="#fff" stroke="#fff" stroke-width="2.6" stroke-linejoin="round" opacity="0.85">Cafe Bar</text><text x="720.0" y="96.2" text-anchor="middle" fill="#a884c6" stroke="#a884c6" stroke-width="0.35">Cafe Bar</text><text x="759.0" y="453.0" text-anchor="middle" fill="#fff" stroke="#fff" stroke-width="2.6" stroke-linejoin="round" opacity="0.85">Washington-</text><text x="759.0" y="453.0" text-anchor="middle" fill="#4ba585" stroke="#4ba585" stroke-width="0.35">Washington-</text><text x="759.0" y="466.2" text-anchor="middle" fill="#fff" stroke="#fff" stroke-width="2.6" stroke-linejoin="round" opacity="0.85">Hyde Park</text><text x="759.0" y="466.2" text-anchor="middle" fill="#4ba585" stroke="#4ba585" stroke-width="0.35">Hyde Park</text><text x="814.0" y="343.0" text-anchor="middle" fill="#fff" stroke="#fff" stroke-width="2.6" stroke-linejoin="round" opacity="0.85">Ja</text><text x="814.0" y="343.0" text-anchor="middle" fill="#4a5873" stroke="#4a5873" stroke-width="0.35">Ja</text><text x="814.0" y="356.2" text-anchor="middle" fill="#fff" stroke="#fff" stroke-width="2.6" stroke-linejoin="round" opacity="0.85">Lea</text><text x="814.0" y="356.2" text-anchor="middle" fill="#4a5873" stroke="#4a5873" stroke-width="0.35">Lea</text><text x="818.0" y="456.0" text-anchor="middle" fill="#fff" stroke="#fff" stroke-width="2.6" stroke-linejoin="round" opacity="0.85">Le</text><text x="818.0" y="456.0" text-anchor="middle" fill="#4a5873" stroke="#4a5873" stroke-width="0.35">Le</text><text x="812.0" y="185.0" text-anchor="middle" fill="#fff" stroke="#fff" stroke-width="2.6" stroke-linejoin="round" opacity="0.85">Rob</text><text x="812.0" y="185.0" text-anchor="middle" fill="#4a5873" stroke="#4a5873" stroke-width="0.35">Rob</text><text x="0.0" y="330.0" text-anchor="start" fill="#fff" stroke="#fff" stroke-width="2.6" stroke-linejoin="round" opacity="0.85">of</text><text x="0.0" y="330.0" text-anchor="start" fill="#9a877c" stroke="#9a877c" stroke-width="0.35">of</text><text x="0.0" y="198.0" text-anchor="start" fill="#fff" stroke="#fff" stroke-width="2.6" stroke-linejoin="round" opacity="0.85">e</text><text x="0.0" y="198.0" text-anchor="start" fill="#c4965f" stroke="#c4965f" stroke-width="0.35">e</text><text x="490.0" y="911.0" text-anchor="middle" fill="#fff" stroke="#fff" stroke-width="2.6" stroke-linejoin="round" opacity="0.85">Ben-Thai</text><text x="490.0" y="911.0" text-anchor="middle" fill="#c4965f" stroke="#c4965f" stroke-width="0.35">Ben-Thai</text><text x="405.0" y="914.0" text-anchor="middle" fill="#fff" stroke="#fff" stroke-width="2.6" stroke-linejoin="round" opacity="0.85">Mancini's</text><text x="405.0" y="914.0" text-anchor="middle" fill="#c85a92" stroke="#c85a92" stroke-width="0.35">Mancini's</text><path d="M799.9 884.8 A7.8 7.8 0 1 1 812.1 884.8 Q808.3 889.0 806.0 892.1 Q803.7 889.0 799.9 884.8 Z" fill="#fff" stroke="#fff" stroke-width="2.5" opacity="0.9"/><path d="M799.9 884.8 A7.8 7.8 0 1 1 812.1 884.8 Q808.3 889.0 806.0 892.1 Q803.7 889.0 799.9 884.8 Z" fill="#e5484d"/><path d="M806.0 876.0 L806.0 884.0 M802.0 880.0 L810.0 880.0" stroke="#fff" stroke-width="2"/><text x="815.0" y="842.0" text-anchor="middle" fill="#fff" stroke="#fff" stroke-width="2.6" stroke-linejoin="round" opacity="0.85">ran</text><text x="815.0" y="842.0" text-anchor="middle" fill="#cc5560" stroke="#cc5560" stroke-width="0.35">ran</text><text x="815.0" y="855.2" text-anchor="middle" fill="#fff" stroke="#fff" stroke-width="2.6" stroke-linejoin="round" opacity="0.85">oria</text><text x="815.0" y="855.2" text-anchor="middle" fill="#cc5560" stroke="#cc5560" stroke-width="0.35">oria</text><text x="815.0" y="868.4" text-anchor="middle" fill="#fff" stroke="#fff" stroke-width="2.6" stroke-linejoin="round" opacity="0.85">pital</text><text x="815.0" y="868.4" text-anchor="middle" fill="#cc5560" stroke="#cc5560" stroke-width="0.35">pital</text><rect x="477" y="496" width="32" height="27" rx="4" fill="#2fd07f" stroke="#fff" stroke-width="1"/><path d="M489.0 523 L493.0 527 L497.0 523 Z" fill="#2fd07f"/><text x="493.0" y="515" text-anchor="middle" font-size="15" font-weight="bold" fill="#fff">2M</text><rect x="201" y="749" width="32" height="27" rx="4" fill="#2fd07f" stroke="#fff" stroke-width="1"/><path d="M213.0 776 L217.0 780 L221.0 776 Z" fill="#2fd07f"/><text x="217.0" y="768" text-anchor="middle" font-size="15" font-weight="bold" fill="#fff">2M</text><rect x="-14" y="335" width="27" height="27" rx="4" fill="#2fd07f" stroke="#fff" stroke-width="1"/><path d="M-4.5 362 L-0.5 366 L3.5 362 Z" fill="#2fd07f"/><text x="-0.5" y="354" text-anchor="middle" font-size="15" font-weight="bold" fill="#fff">M</text></g></svg>

<div class="abs" style="left:706px;top:88px;width:95px;height:45px;background:#fff;border-radius:5px;box-shadow:0 1px 3px rgba(0,0,0,0.08)"></div>
<div class="t" style="left:720px;top:102.6px;font-size:15.8px;color:#6b6f7a">Draw</div>
<svg class="abs" style="left:769px;top:103px" width="20" height="14"><path d="M2.5 3.5 L10 11 L17.5 3.5" stroke="#7a7e87" stroke-width="1.3" fill="none"/></svg>
<div class="abs" style="left:762px;top:807px;width:45px;height:93px;background:#fff;border-radius:4px;box-shadow:0 1px 3px rgba(0,0,0,0.08)"></div>
<div class="abs" style="left:768px;top:853px;width:33px;height:1px;background:#e6e6e6"></div>
<svg class="abs" style="left:772px;top:818px" width="24" height="70"><path d="M3 11.5 L21 11.5 M12 2.5 L12 20.5" stroke="#73777f" stroke-width="1.8"/><path d="M3 58 L21 58" stroke="#73777f" stroke-width="1.8"/></svg>
<div class="abs" style="left:14px;top:821px;width:79px;height:78px;background:#fff;border-radius:5px"></div>
<svg class="abs" style="left:16px;top:822px" width="75" height="75">
<defs><clipPath id="thc"><rect width="75" height="75" rx="3.5"/></clipPath><filter id="bl" x="-10%" y="-10%" width="120%" height="120%"><feGaussianBlur stdDeviation="1.6"/></filter></defs>
<g clip-path="url(#thc)">
<rect width="75" height="75" fill="#5b6352"/>
<g filter="url(#bl)">
<rect x="0" y="0" width="30" height="75" fill="#45523f"/>
<path d="M32 0 L50 0 Q52 18 46 30 L36 34 Q30 20 32 0 Z" fill="#8e8a7b"/>
<path d="M50 0 L75 0 L75 30 Q62 22 52 28 Z" fill="#505d4a"/>
<path d="M42 30 L62 28 L75 40 L75 75 L40 75 Q36 55 42 30 Z" fill="#858780"/>
<circle cx="50" cy="40" r="3" fill="#d9d6cc"/><circle cx="43" cy="50" r="2.5" fill="#e4e2da"/><circle cx="47" cy="56" r="2.2" fill="#e8e6de"/><circle cx="58" cy="45" r="2" fill="#cfcdc4"/><circle cx="60" cy="55" r="2.2" fill="#bdbbb2"/><circle cx="53" cy="62" r="2" fill="#c9c7be"/><circle cx="58" cy="20" r="2" fill="#d0cec6"/><circle cx="5" cy="14" r="2" fill="#b8bdb0"/>
<path d="M52 32 Q50 36 56 34" stroke="#a07060" stroke-width="2" fill="none"/>
<path d="M26 0 Q15 12 20 25 Q28 40 25 55 Q22 65 27 75" stroke="#1f2a22" stroke-width="4" fill="none"/>
<path d="M0 40 Q20 32 36 30" stroke="#6a7560" stroke-width="1.5" fill="none"/>
</g>
</g>
<g stroke="#fff" stroke-width="1.3" fill="none" stroke-linejoin="round"><path d="M7.5 59 L14 55.5 L20.5 59 L14 62.5 Z" fill="#2b2b2b"/><path d="M7.5 62.3 L14 65.8 L20.5 62.3"/><path d="M7.5 65.6 L14 69.1 L20.5 65.6"/></g>
<text x="26" y="66" font-size="13.5" font-weight="bold" fill="#fff" font-family="Liberation Sans">Layers</text>
</svg>

<div class="abs" style="left:824px;top:66px;width:1px;height:855px;background:#cfd2d7;z-index:3"></div>
<div class="abs" style="left:825px;top:66px;width:5px;height:788px;background:#f6f6f6;z-index:2"></div>
<div class="abs" style="left:825px;top:66px;width:1081px;height:854px;background:#f3f3f3"></div><div class="abs" style="left:1356px;top:66px;width:532px;height:55px;background:#fff;border-left:1px solid #e2e2e2;border-bottom:1px solid #e2e2e2;border-right:1px solid #e2e2e2"></div><svg class="abs" style="left:1050px;top:84px" width="18" height="18"><ellipse cx="8.9" cy="4.6" rx="7.1" ry="2.9" fill="#3b57d0"/><path d="M1.8 4.8 Q2.8 9.5 6.3 11.8 L6.3 14.6 Q6.3 15.9 8.65 15.9 Q11 15.9 11 14.6 L11 11.8 Q14.8 9.5 16 4.8 Z" fill="#3b57d0"/><ellipse cx="8.7" cy="4.6" rx="4.6" ry="1.35" fill="#f3f3f3"/></svg><div class="t" style="left:1078.0px;top:85.9px;font-size:16.4px;color:#3b57d0;font-weight:bold;">Filters</div>
<svg class="abs" style="left:1568px;top:85px" width="20" height="17"><g fill="#202431"><rect x="0.5" y="1" width="2.6" height="2.6" rx="1.3"/><rect x="0.5" y="6.2" width="2.6" height="2.6" rx="1.3"/><rect x="0.5" y="11.8" width="2.6" height="2.6" rx="1.3"/><rect x="5.5" y="1" width="12.5" height="2.2" rx="1"/><rect x="5.5" y="6.2" width="12.5" height="2.4" rx="1"/><rect x="5.5" y="11.8" width="12.5" height="2.6" rx="1.2"/></g></svg><div class="t" style="left:1598.5px;top:86.8px;font-size:16px;color:#202431;">18 Results</div>
<div class="abs" style="left:1525px;top:60px;width:201px;height:64px;border:5px solid #b10dc9;z-index:6"></div><div class="abs" style="left:1888px;top:66px;width:19px;height:855px;background:#fdfdfd"></div><svg class="abs" style="left:1888px;top:66px" width="18" height="854"><path d="M3.5 19 L9.2 10.5 L15 19 Z" fill="#8a8a8a"/><rect x="4.3" y="29" width="10.7" height="794" rx="5.3" fill="#8a8a8a"/><path d="M3.5 836.5 L9.2 845.5 L15 836.5 Z" fill="#8a8a8a"/></svg><div class="box" style="left:842px;top:132px;width:254px;height:703px"></div><div class="abs" style="left:969px;top:132px;width:127px;height:56px;background:#f8f8f8;border:1px solid #e2e2e2"></div><div class="t" style="left:871.0px;top:153.4px;font-size:13.9px;color:#1f2330;font-weight:bold;">INQUIRIES</div>
<div class="t" style="left:1009.5px;top:154.2px;font-size:13px;color:#6e6e6e;font-size:13.1px">NOTES</div>
<svg class="abs" style="left:920px;top:428px" width="100" height="78">
<path d="M23 18 L23 14 Q23 11 26 11 L44 11 Q46 11 47.5 13 L49.5 17.4 Z" fill="#efefef"/>
<rect x="9.5" y="17.4" width="76.7" height="50.6" rx="5" fill="#f0f0f0"/>
<path d="M14.5 23 L85 23 Q89.5 23 88.8 27.5 L85.8 63 Q85.4 67.4 81 67.4 L16 67.4 Q12 67.4 12 63.4 L10.3 27.5 Q10 23 14.5 23 Z" fill="#f6f6f6" stroke="#ebebeb" stroke-width="0.8"/>
<path d="M15 40 Q20 60 45 66" stroke="#eeeeee" fill="none" stroke-width="1"/>
<path d="M83 5.5 L81.5 11 M89 8 L85.5 12.5 M92.5 13.5 L87.5 15.5" stroke="#d6d6d6" stroke-width="1.1" stroke-linecap="round"/>
</svg><div class="t" style="left:926.0px;top:512.7px;font-size:18.8px;color:#b5b8bd;">No Inquiry</div>
<div class="box" style="left:1112px;top:132px;width:758px;height:703px"></div><div class="abs" style="left:1113px;top:183px;width:756px;height:4px;background:#ececec"></div><div class="abs" style="left:1113px;top:182px;width:102px;height:5px;background:#3a58d8"></div><div class="t" style="left:1124.5px;top:153.6px;font-size:13.7px;color:#1f2330;font-weight:bold;">BASIC INFO</div>
<div class="t" style="left:1226.5px;top:153.8px;font-size:13.5px;color:#a0a4ad;font-weight:bold;">PROPERTY DETAILS</div>
<div class="t" style="left:1384.5px;top:153.8px;font-size:13.5px;color:#a0a4ad;font-weight:bold;">INTERIOR FEATURES</div>
<div class="t" style="left:1547.5px;top:153.8px;font-size:13.5px;color:#a0a4ad;font-weight:bold;">EXTERIOR FEATURES</div>
<div class="t" style="left:1714.5px;top:153.8px;font-size:13.5px;color:#a0a4ad;font-weight:bold;">PROPERTY FEATURES</div>
<div class="abs" style="left:1848px;top:190px;width:21px;height:644px;background:#f7f7f7"></div><svg class="abs" style="left:1850px;top:190px" width="19" height="644"><path d="M3.5 16.5 L9.5 7.5 L15.5 16.5 Z" fill="#8a8a8a"/><rect x="4" y="26" width="11" height="141" rx="5.5" fill="#8a8a8a"/><path d="M3 625.5 L9.2 634.7 L15.5 625.5 Z" fill="#8a8a8a"/></svg><div class="t" style="left:1136.0px;top:212.5px;font-size:15.4px;color:#1f2330;font-weight:bold;letter-spacing:0.3px">BASIC INFO</div>
<div class="abs" style="left:1135px;top:241px;width:713px;height:1px;background:#e8e8e8"></div><div class="t" style="left:1136.0px;top:267.6px;font-size:15.6px;color:#6f737b;letter-spacing:0.42px">Purchase Type</div>
<div class="inp" style="left:1135px;top:292px;width:335px;height:42px"></div><div class="t" style="left:1148.0px;top:303.8px;font-size:15.8px;color:#1f2330;">For Sale</div>
<svg class="abs" style="left:1443px;top:306px" width="16" height="12"><path d="M2 3.5 L8 9.5 L14 3.5" stroke="#8e929a" stroke-width="1.2" fill="none"/></svg><div class="t" style="left:1136.0px;top:355.4px;font-size:15.6px;color:#6f737b;letter-spacing:0.42px">Days On Site</div>
<div class="t" style="left:1765.0px;top:354.8px;font-size:14.1px;color:#3b57d0;">Advanced</div>
<div class="t" style="left:1136.0px;top:393.3px;font-size:15.6px;color:#3c4150;letter-spacing:0.25px">Less Than</div>
<div class="inp" style="left:1222px;top:380px;width:594px;height:43px"></div><div class="t" style="left:1783.0px;top:394.6px;font-size:13.5px;color:#b8bcc2;">days</div>
<div class="t" style="left:1136.0px;top:445.3px;font-size:15.6px;color:#6f737b;letter-spacing:0.42px">Associated Agent Listing</div>
<div class="t" style="left:1493.5px;top:445.3px;font-size:15.6px;color:#6f737b;letter-spacing:0.42px">Associated Office Listing</div>
<div class="inp" style="left:1135px;top:468px;width:335px;height:43px"></div><div class="inp" style="left:1493px;top:468px;width:335px;height:43px"></div><div class="t" style="left:1148.0px;top:481.3px;font-size:15.8px;color:#1f2330;">Any</div>
<div class="t" style="left:1506.0px;top:481.3px;font-size:15.8px;color:#1f2330;">Any</div>
<svg class="abs" style="left:1443px;top:483px" width="16" height="12"><path d="M2 3.5 L8 9.5 L14 3.5" stroke="#8e929a" stroke-width="1.2" fill="none"/></svg><svg class="abs" style="left:1801px;top:483px" width="16" height="12"><path d="M2 3.5 L8 9.5 L14 3.5" stroke="#8e929a" stroke-width="1.2" fill="none"/></svg><div class="t" style="left:1136.0px;top:532.9px;font-size:15.6px;color:#6f737b;letter-spacing:0.42px">Location</div>
<div class="inp" style="left:1135px;top:556px;width:693px;height:46px"></div><div class="abs" style="left:1148px;top:564px;width:149px;height:31px;background:#ebeefa;border-radius:4px"></div><div class="t" style="left:1157.5px;top:572.9px;font-size:14px;color:#3b57d0;">ZIP Code: 94109</div>
<svg class="abs" style="left:1275px;top:572px" width="14" height="14"><path d="M2 2 L11.5 11.5 M11.5 2 L2 11.5" stroke="#a0aadb" stroke-width="1.1"/></svg><div class="t" style="left:1136.0px;top:625.5px;font-size:15.6px;color:#6f737b;letter-spacing:0.42px">Street Name</div>
<div class="t" style="left:1493.5px;top:623.6px;font-size:15.6px;color:#6f737b;letter-spacing:0.42px">Price</div>
<div class="inp" style="left:1135px;top:650px;width:335px;height:40px"></div><div class="t" style="left:1148.0px;top:662.8px;font-size:15.6px;color:#c6c9ce;letter-spacing:0.42px">Type something</div>
<div class="inp" style="left:1493px;top:648px;width:150px;height:42px"></div><div class="inp" style="left:1677px;top:648px;width:151px;height:42px"></div><div class="t" style="left:1505.0px;top:661.3px;font-size:15.6px;color:#c6c9ce;letter-spacing:0.42px">Min Price</div>
<div class="t" style="left:1689.0px;top:661.3px;font-size:15.6px;color:#c6c9ce;letter-spacing:0.42px">Max Price</div>
<div class="dash" style="left:1655px;top:669px"></div><div class="t" style="left:1136.0px;top:711.1px;font-size:15.6px;color:#6f737b;letter-spacing:0.42px">Beds</div>
<div class="t" style="left:1493.5px;top:711.8px;font-size:15.6px;color:#6f737b;letter-spacing:0.42px">Baths</div>
<div class="inp" style="left:1135px;top:736px;width:151px;height:43px"></div><div class="t" style="left:1148.0px;top:748.8px;font-size:15.6px;color:#c6c9ce;letter-spacing:0.42px">Min Beds</div>
<div class="inp" style="left:1319px;top:736px;width:151px;height:43px"></div><div class="t" style="left:1332.0px;top:748.8px;font-size:15.6px;color:#c6c9ce;letter-spacing:0.42px">Max Beds</div>
<div class="inp" style="left:1493px;top:736px;width:150px;height:43px"></div><div class="t" style="left:1506.0px;top:748.8px;font-size:15.6px;color:#c6c9ce;letter-spacing:0.42px">Min Baths</div>
<div class="inp" style="left:1677px;top:736px;width:151px;height:43px"></div><div class="t" style="left:1690.0px;top:748.8px;font-size:15.6px;color:#c6c9ce;letter-spacing:0.42px">Max Baths</div>
<div class="dash" style="left:1297px;top:757px"></div><div class="dash" style="left:1655px;top:757px"></div><div class="t" style="left:1136.0px;top:800.5px;font-size:15.6px;color:#6f737b;letter-spacing:0.42px">Property Type</div>
<div class="t" style="left:1493.5px;top:800.4px;font-size:15.6px;color:#6f737b;letter-spacing:0.42px">Listing Status</div>
<div class="abs" style="left:1113px;top:824px;width:735px;height:10px;overflow:hidden"><div class="inp" style="left:22px;top:0;width:335px;height:43px"></div><div class="inp" style="left:380px;top:0;width:335px;height:43px"></div></div><div class="abs" style="left:825px;top:854px;width:1063px;height:66px;background:#fff;border-top:1px solid #e6e6e6"></div><svg class="abs" style="left:840px;top:875px" width="30" height="26"><path d="M9 9.5 L19 9.5 Q24 9.5 24 14.3 Q24 19.2 19 19.2 L11 19.2" stroke="#2a2e3a" stroke-width="1.9" fill="none" stroke-linecap="round"/><path d="M8.5 9 L12.3 13" stroke="#2a2e3a" stroke-width="1.9" stroke-linecap="round"/></svg><div class="t" style="left:881.0px;top:881.8px;font-size:16.4px;color:#2a2e3a;font-weight:bold;">Back to Profile</div>
<div class="t" style="left:1665.5px;top:881.7px;font-size:16.5px;color:#6f737b;font-weight:bold;">Cancel</div>
<div class="abs" style="left:1753px;top:867px;width:113px;height:45px;background:#3a58d8;border-radius:5px"></div><div class="t" style="left:1791.0px;top:881.6px;font-size:16.6px;color:#ffffff;font-weight:bold;">Next</div>
<div class="abs" style="left:817px;top:472px;width:10px;height:44px;background:#f3f3f3;border:1px solid #d8d8d8;border-right:none;border-radius:3px 0 0 3px;z-index:4"></div><svg class="abs" style="left:820px;top:480px;z-index:4" width="10" height="26"><path d="M2.5 4 L2.5 22 M5 4 L5 22 M7.5 4 L7.5 22" stroke="#9a9a9a" stroke-width="0.8"/></svg>
<div id="nav"><svg class="abs" style="left:0;top:0" width="140" height="60"><path d="M26.1 22.6 L35.1 16 L35.1 28.9 L41.4 28.9 L53.7 38.3 L46.4 44.6 L37 37 L27.6 44.6 L26.1 43.3 Z" fill="#3d5fd9"/></svg><div class="t" style="left:62.0px;top:18.4px;font-size:25px;color:#3d5fd9;font-weight:bold;letter-spacing:0.1px">Lofty</div>
<div class="t" style="left:169.5px;top:23.0px;font-size:16.8px;color:#3d4350;letter-spacing:0.199px;-webkit-text-stroke:0.15px #3d4350">People</div>
<div class="t" style="left:277.7px;top:23.0px;font-size:16.8px;color:#3d4350;letter-spacing:0.63px;-webkit-text-stroke:0.15px #3d4350">Transactions</div>
<div class="t" style="left:415.3px;top:23.0px;font-size:16.8px;color:#3d4350;letter-spacing:0.604px;-webkit-text-stroke:0.15px #3d4350">Calendar</div>
<div class="t" style="left:522.3px;top:23.0px;font-size:16.8px;color:#3d4350;letter-spacing:0.88px;-webkit-text-stroke:0.15px #3d4350">Listings</div>
<div class="t" style="left:619.8px;top:23.0px;font-size:16.8px;color:#3d4350;letter-spacing:0.749px;-webkit-text-stroke:0.15px #3d4350">Marketing</div>
<div class="t" style="left:734.8px;top:23.0px;font-size:16.8px;color:#3d4350;letter-spacing:0.751px;-webkit-text-stroke:0.15px #3d4350">Reporting</div>
<div class="t" style="left:849.3px;top:23.0px;font-size:16.8px;color:#3d4350;letter-spacing:0.589px;-webkit-text-stroke:0.15px #3d4350">Website</div>
<div class="t" style="left:948.8px;top:23.0px;font-size:16.8px;color:#3d4350;letter-spacing:0.745px;-webkit-text-stroke:0.15px #3d4350">Marketplace</div>
<div class="t" style="left:1083.3px;top:23.0px;font-size:16.8px;color:#3d4350;letter-spacing:0.787px;-webkit-text-stroke:0.15px #3d4350">Settings</div>
<svg class="abs" style="left:230px;top:24px" width="16" height="12"><path d="M2 3 L7.5 8.5 L13 3" stroke="#8e929a" stroke-width="1.5" fill="none"/></svg><div class="abs" style="left:587px;top:19px;width:5px;height:5px;border-radius:50%;background:#e8403f"></div><svg class="abs" style="left:1670px;top:10px" width="236" height="50">
<g fill="none" stroke="#6b6f7a" stroke-width="1.6">
<circle cx="21.2" cy="20.3" r="9"/><path d="M27.8 27.3 L34.8 33.3"/>
<path d="M58 24 L61 13.5 Q61.5 12 63 12 L75 12 Q76.5 12 77 13.5 L80 24 L80 32 Q80 34 78 34 L60 34 Q58 34 58 32 Z"/>
<path d="M58 24 L65 24 Q65 28 69 28 Q73 28 73 24 L80 24"/>
<path d="M62.5 20 L63.5 16 L74.5 16 L75.5 20"/>
<path d="M104 29.5 L106 26.5 L106 20 Q106 13 113.5 12 Q121 13 121 20 L121 26.5 L123 29.5 Z"/>
<path d="M110.5 30.5 Q110.5 34 113.5 34 Q116.5 34 116.5 30.5"/>
<circle cx="158.6" cy="22.3" r="11"/>
</g>
<text x="158.6" y="28.5" font-size="15" fill="#6b6f7a" text-anchor="middle" font-family="Liberation Sans">?</text>
<rect x="115" y="4.5" width="24.5" height="16.5" rx="8" fill="#e8403f"/>
<text x="127.2" y="17.6" font-size="12.5" font-weight="bold" fill="#fff" text-anchor="middle" font-family="Liberation Sans">19</text>
</svg><div class="abs" style="left:1849px;top:5px;width:47px;height:15px;background:#d5daea"></div><div class="abs" style="left:1849px;top:20px;width:47px;height:20px;background:#e3e6f0"></div><div class="abs" style="left:1849px;top:40px;width:47px;height:14px;background:#eceef3"></div></div>
</div></div>
</body></html>
